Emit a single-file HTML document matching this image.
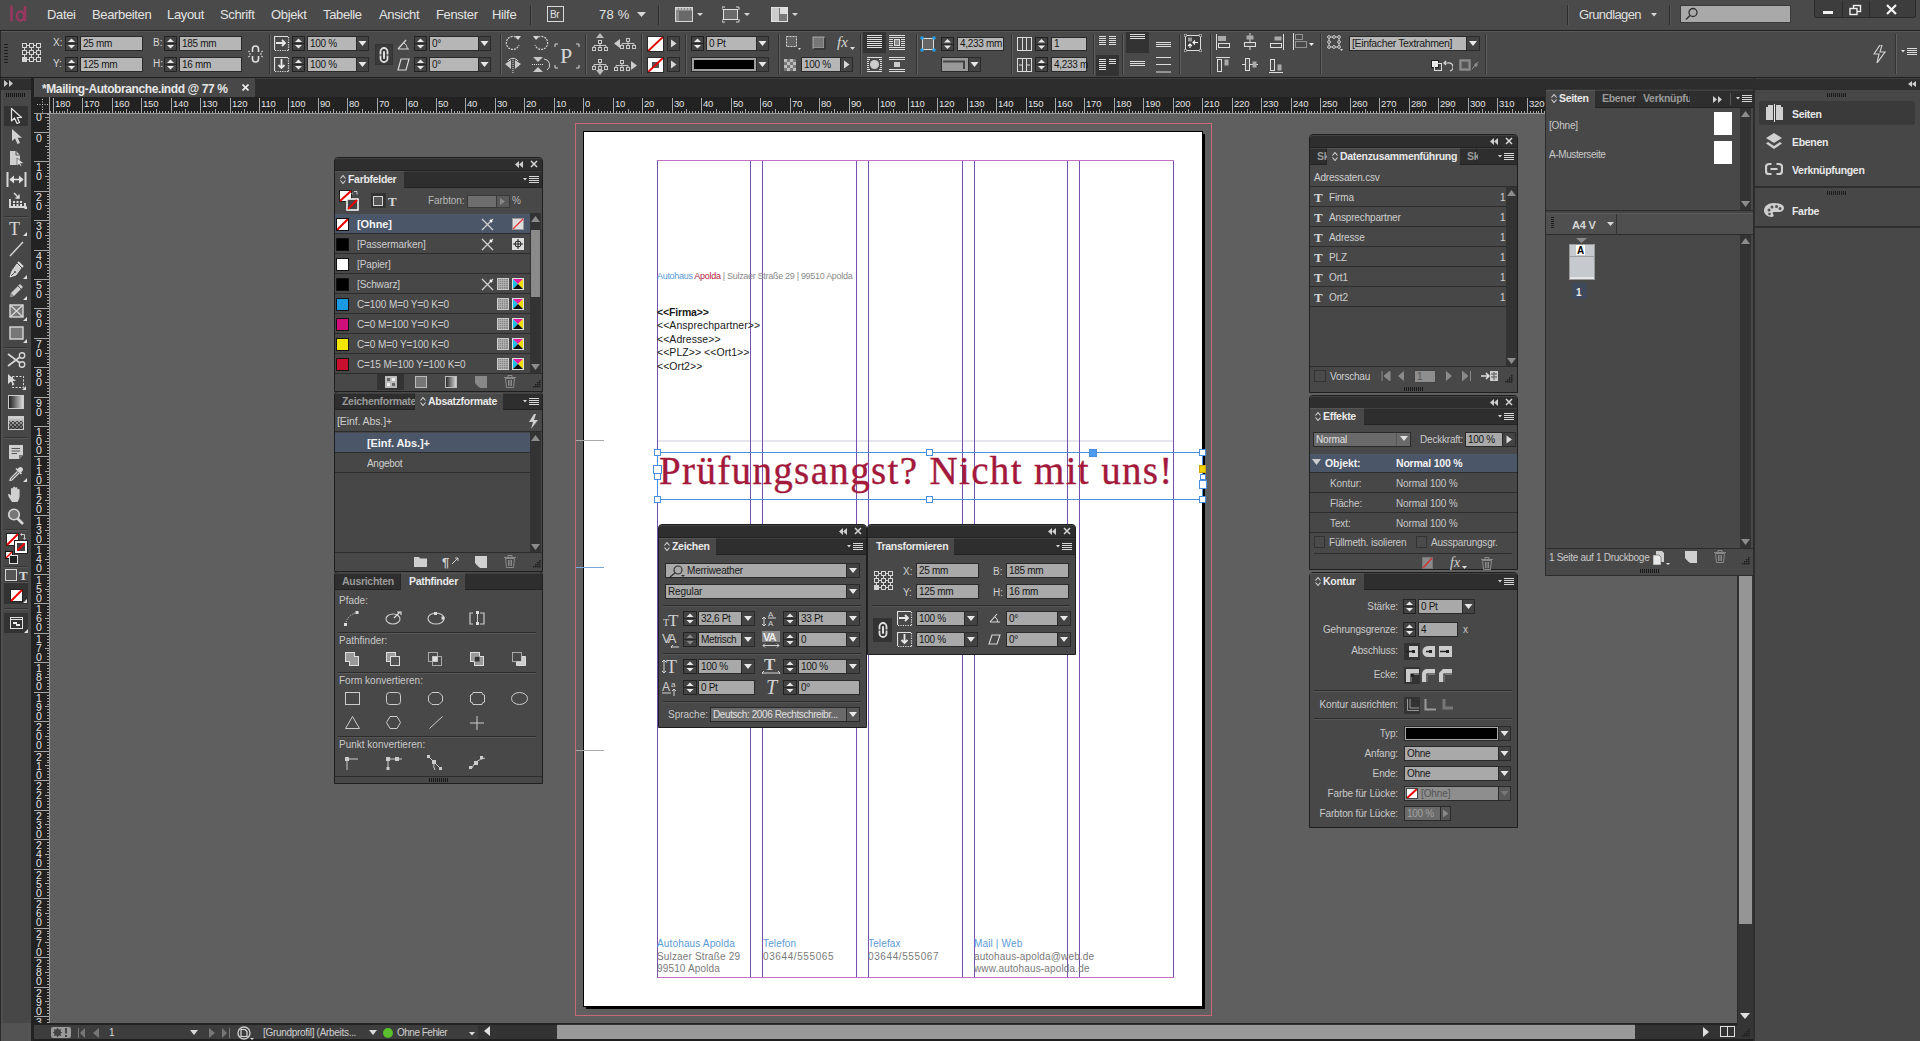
<!DOCTYPE html><html><head><meta charset="utf-8"><style>
html,body{margin:0;padding:0;width:1920px;height:1041px;overflow:hidden;background:#535353;}
body{position:relative;font-family:"Liberation Sans",sans-serif;}
.a{position:absolute;box-sizing:border-box;}
.t{white-space:nowrap;}
</style></head><body>
<div class="a" style="left:0px;top:0px;width:1920px;height:30px;background:#4a4a4a;"></div>
<div class="a" style="left:0px;top:30px;width:1920px;height:1px;background:#1f1f1f;"></div>
<svg class="a" style="left:9px;top:4px;" width="20" height="19" viewBox="0 0 20 19"><path d="M2.5 1.5V17" stroke="#98385f" stroke-width="2.6"/><path d="M16 2V17" stroke="#98385f" stroke-width="2.6"/><ellipse cx="11.5" cy="12" rx="3.6" ry="4.6" fill="none" stroke="#98385f" stroke-width="2.4"/></svg>
<div class="a t" style="left:47px;top:8px;font-size:13px;line-height:13px;color:#e2e2e2;letter-spacing:-0.35px;">Datei</div>
<div class="a t" style="left:92px;top:8px;font-size:13px;line-height:13px;color:#e2e2e2;letter-spacing:-0.35px;">Bearbeiten</div>
<div class="a t" style="left:167px;top:8px;font-size:13px;line-height:13px;color:#e2e2e2;letter-spacing:-0.35px;">Layout</div>
<div class="a t" style="left:220px;top:8px;font-size:13px;line-height:13px;color:#e2e2e2;letter-spacing:-0.35px;">Schrift</div>
<div class="a t" style="left:271px;top:8px;font-size:13px;line-height:13px;color:#e2e2e2;letter-spacing:-0.35px;">Objekt</div>
<div class="a t" style="left:323px;top:8px;font-size:13px;line-height:13px;color:#e2e2e2;letter-spacing:-0.35px;">Tabelle</div>
<div class="a t" style="left:379px;top:8px;font-size:13px;line-height:13px;color:#e2e2e2;letter-spacing:-0.35px;">Ansicht</div>
<div class="a t" style="left:436px;top:8px;font-size:13px;line-height:13px;color:#e2e2e2;letter-spacing:-0.35px;">Fenster</div>
<div class="a t" style="left:492px;top:8px;font-size:13px;line-height:13px;color:#e2e2e2;letter-spacing:-0.35px;">Hilfe</div>
<div class="a" style="left:530px;top:5px;width:1px;height:20px;background:#2c2c2c;"></div>
<div class="a" style="left:531px;top:5px;width:1px;height:20px;background:#575757;"></div>
<div class="a" style="left:547px;top:6px;width:17px;height:16px;border:1px solid #d8d8d8;"></div>
<div class="a t" style="left:550px;top:10px;font-size:10px;line-height:10px;color:#e0e0e0;letter-spacing:-0.3px;">Br</div>
<div class="a t" style="left:599px;top:8px;font-size:13px;line-height:13px;color:#e2e2e2;letter-spacing:0.2px;">78 %</div>
<svg class="a" style="left:637px;top:12px;" width="9" height="6" viewBox="0 0 9 6"><path d="M0 0H9L4.5 5Z" fill="#d8d8d8"/></svg>
<div class="a" style="left:658px;top:5px;width:1px;height:20px;background:#2c2c2c;"></div>
<div class="a" style="left:659px;top:5px;width:1px;height:20px;background:#575757;"></div>
<svg class="a" style="left:675px;top:6px;" width="30" height="17" viewBox="0 0 30 17"><rect x="0.5" y="1.5" width="17" height="14" fill="#8a8a8a" stroke="#d8d8d8"/><rect x="4" y="5" width="13" height="10" fill="#6a6a6a"/><path d="M1 3h16" stroke="#e8e8e8" stroke-dasharray="2 1"/><path d="M22 7H28L25 10Z" fill="#d8d8d8"/></svg>
<svg class="a" style="left:722px;top:6px;" width="30" height="17" viewBox="0 0 30 17"><rect x="1.5" y="3.5" width="14" height="10" fill="#6a6a6a" stroke="#e0e0e0"/><path d="M0 1h3M0 1v3M17 1h-3M17 1v3M0 16h3M0 16v-3M17 16h-3M17 16v-3" stroke="#d8d8d8"/><path d="M22 7H28L25 10Z" fill="#d8d8d8"/></svg>
<svg class="a" style="left:770px;top:6px;" width="30" height="17" viewBox="0 0 30 17"><rect x="1.5" y="1.5" width="16" height="14" fill="#777" stroke="#e0e0e0"/><rect x="2" y="2" width="7" height="13" fill="#ccc"/><rect x="10" y="2" width="7" height="6" fill="#ddd"/><path d="M22 7H28L25 10Z" fill="#d8d8d8"/></svg>
<div class="a" style="left:1567px;top:5px;width:1px;height:20px;background:#2c2c2c;"></div>
<div class="a" style="left:1568px;top:5px;width:1px;height:20px;background:#575757;"></div>
<div class="a t" style="left:1579px;top:8px;font-size:13px;line-height:13px;color:#dedede;letter-spacing:-0.6px;">Grundlagen</div>
<svg class="a" style="left:1651px;top:13px;" width="6" height="4" viewBox="0 0 6 4"><path d="M0 0H6L3 3.5Z" fill="#d8d8d8"/></svg>
<div class="a" style="left:1669px;top:5px;width:1px;height:20px;background:#2c2c2c;"></div>
<div class="a" style="left:1670px;top:5px;width:1px;height:20px;background:#575757;"></div>
<div class="a" style="left:1680px;top:5px;width:111px;height:18px;background:#a9a9a9;border:1px solid #3a3a3a;"></div>
<svg class="a" style="left:1685px;top:7px;" width="14" height="14" viewBox="0 0 14 14"><circle cx="8" cy="5.5" r="4" fill="none" stroke="#303030" stroke-width="1.3"/><path d="M5 8.5L1 12.5" stroke="#303030" stroke-width="1.5"/></svg>
<div class="a" style="left:1814px;top:0px;width:102px;height:18px;background:#3d3d3d;border:1px solid #2a2a2a;border-top:none;border-radius:0 0 3px 3px;"></div>
<div class="a" style="left:1842px;top:1px;width:1px;height:17px;background:#2a2a2a;"></div>
<div class="a" style="left:1869px;top:1px;width:1px;height:17px;background:#2a2a2a;"></div>
<div class="a" style="left:1823px;top:11px;width:10px;height:3px;background:#f0f0f0;"></div>
<svg class="a" style="left:1849px;top:4px;" width="13" height="12" viewBox="0 0 13 12"><rect x="4.5" y="1.5" width="7" height="6" fill="none" stroke="#f0f0f0" stroke-width="1.4"/><rect x="1" y="4.5" width="7" height="6" fill="#3d3d3d" stroke="#f0f0f0" stroke-width="1.4"/></svg>
<svg class="a" style="left:1886px;top:4px;" width="11" height="11" viewBox="0 0 11 11"><path d="M1 1L10 10M10 1L1 10" stroke="#f4f4f4" stroke-width="2.2"/></svg>
<div class="a" style="left:0px;top:31px;width:1920px;height:46px;background:#494949;border-top:1px solid #5a5a5a;"></div>
<div class="a" style="left:0px;top:77px;width:1920px;height:1px;background:#1f1f1f;"></div>
<div class="a" style="left:0px;top:31px;width:1px;height:46px;background:#2c2c2c;"></div>
<div class="a" style="left:4px;top:44px;width:4px;height:1px;background:#1e1e1e;"></div>
<div class="a" style="left:4px;top:47px;width:4px;height:1px;background:#1e1e1e;"></div>
<div class="a" style="left:4px;top:50px;width:4px;height:1px;background:#1e1e1e;"></div>
<div class="a" style="left:4px;top:53px;width:4px;height:1px;background:#1e1e1e;"></div>
<div class="a" style="left:4px;top:56px;width:4px;height:1px;background:#1e1e1e;"></div>
<div class="a" style="left:4px;top:59px;width:4px;height:1px;background:#1e1e1e;"></div>
<div class="a" style="left:4px;top:62px;width:4px;height:1px;background:#1e1e1e;"></div>
<svg class="a" style="left:21px;top:42px;" width="20" height="22" viewBox="0 0 20 22"><g fill="none" stroke="#d6d6d6" stroke-width="1"><rect x="1.5" y="1.5" width="4" height="4"/><rect x="8.5" y="1.5" width="4" height="4"/><rect x="15.5" y="1.5" width="4" height="4"/><rect x="1.5" y="8.5" width="4" height="4"/><rect x="8.5" y="8.5" width="4" height="4"/><rect x="15.5" y="8.5" width="4" height="4"/><rect x="8.5" y="15.5" width="4" height="4"/><rect x="15.5" y="15.5" width="4" height="4"/><path d="M5.5 3.5h3M12.5 3.5h3M5.5 10.5h3M12.5 10.5h3M5.5 17.5h3M12.5 17.5h3M3.5 5.5v3M10.5 5.5v3M17.5 5.5v3M3.5 12.5v3M10.5 12.5v3M17.5 12.5v3"/></g><rect x="1" y="15" width="5" height="5" fill="#d6d6d6"/></svg>
<div class="a t" style="left:53px;top:38px;font-size:10px;line-height:10px;color:#d8d8d8;">X:</div>
<div class="a t" style="left:53px;top:59px;font-size:10px;line-height:10px;color:#d8d8d8;">Y:</div>
<div class="a" style="left:65px;top:36px;width:13px;height:15px;background:#434343;border:1px solid #222;"></div>
<div class="a" style="left:66px;top:43px;width:11px;height:1px;background:#262626;"></div>
<svg class="a" style="left:65px;top:36px;" width="13" height="15" viewBox="0 0 13 15"><path d="M3.0 6.0H10.0L6.5 2.5Z" fill="#e8e8e8"/><path d="M3.0 9.0H10.0L6.5 12.5Z" fill="#e8e8e8"/></svg>
<div class="a" style="left:80px;top:36px;width:63px;height:15px;background:#b6b6b6;border:1px solid #2a2a2a;"></div>
<div class="a t" style="left:83px;top:39px;font-size:10px;line-height:10px;color:#161616;letter-spacing:-0.3px;">25 mm</div>
<div class="a" style="left:65px;top:57px;width:13px;height:15px;background:#434343;border:1px solid #222;"></div>
<div class="a" style="left:66px;top:64px;width:11px;height:1px;background:#262626;"></div>
<svg class="a" style="left:65px;top:57px;" width="13" height="15" viewBox="0 0 13 15"><path d="M3.0 6.0H10.0L6.5 2.5Z" fill="#e8e8e8"/><path d="M3.0 9.0H10.0L6.5 12.5Z" fill="#e8e8e8"/></svg>
<div class="a" style="left:80px;top:57px;width:63px;height:15px;background:#b6b6b6;border:1px solid #2a2a2a;"></div>
<div class="a t" style="left:83px;top:60px;font-size:10px;line-height:10px;color:#161616;letter-spacing:-0.3px;">125 mm</div>
<div class="a t" style="left:153px;top:38px;font-size:10px;line-height:10px;color:#d8d8d8;">B:</div>
<div class="a t" style="left:153px;top:59px;font-size:10px;line-height:10px;color:#d8d8d8;">H:</div>
<div class="a" style="left:164px;top:36px;width:13px;height:15px;background:#434343;border:1px solid #222;"></div>
<div class="a" style="left:165px;top:43px;width:11px;height:1px;background:#262626;"></div>
<svg class="a" style="left:164px;top:36px;" width="13" height="15" viewBox="0 0 13 15"><path d="M3.0 6.0H10.0L6.5 2.5Z" fill="#e8e8e8"/><path d="M3.0 9.0H10.0L6.5 12.5Z" fill="#e8e8e8"/></svg>
<div class="a" style="left:179px;top:36px;width:63px;height:15px;background:#b6b6b6;border:1px solid #2a2a2a;"></div>
<div class="a t" style="left:182px;top:39px;font-size:10px;line-height:10px;color:#161616;letter-spacing:-0.3px;">185 mm</div>
<div class="a" style="left:164px;top:57px;width:13px;height:15px;background:#434343;border:1px solid #222;"></div>
<div class="a" style="left:165px;top:64px;width:11px;height:1px;background:#262626;"></div>
<svg class="a" style="left:164px;top:57px;" width="13" height="15" viewBox="0 0 13 15"><path d="M3.0 6.0H10.0L6.5 2.5Z" fill="#e8e8e8"/><path d="M3.0 9.0H10.0L6.5 12.5Z" fill="#e8e8e8"/></svg>
<div class="a" style="left:179px;top:57px;width:63px;height:15px;background:#b6b6b6;border:1px solid #2a2a2a;"></div>
<div class="a t" style="left:182px;top:60px;font-size:10px;line-height:10px;color:#161616;letter-spacing:-0.3px;">16 mm</div>
<svg class="a" style="left:247px;top:44px;" width="17" height="20" viewBox="0 0 17 20"><g fill="none" stroke="#e0e0e0" stroke-width="1.6"><path d="M5.5 8V5a3 3 0 0 1 6 0v3M5.5 12v3a3 3 0 0 0 6 0v-3"/></g><path d="M1 7l2 1M1 13l2-1M16 7l-2 1M16 13l-2-1M2 10h2M13 10h2" stroke="#d0d0d0"/></svg>
<div class="a" style="left:269px;top:34px;width:1px;height:40px;background:#333333;"></div>
<div class="a" style="left:270px;top:34px;width:1px;height:40px;background:#606060;"></div>
<svg class="a" style="left:274px;top:36px;" width="16" height="16" viewBox="0 0 16 16"><path d="M.5 14V.5H14" fill="none" stroke="#e0e0e0" stroke-width="1.2"/><path d="M14.5 1V15M1 14.5H15" stroke="#e0e0e0" stroke-width="1.2" stroke-dasharray="1.2 1.2"/><path d="M2 7h9M8 4l3 3-3 3" fill="none" stroke="#e8e8e8" stroke-width="1.8"/></svg>
<svg class="a" style="left:274px;top:57px;" width="16" height="16" viewBox="0 0 16 16"><path d="M.5 14V.5H14" fill="none" stroke="#e0e0e0" stroke-width="1.2"/><path d="M14.5 1V15M1 14.5H15" stroke="#e0e0e0" stroke-width="1.2" stroke-dasharray="1.2 1.2"/><path d="M7.5 2v9M4.5 8l3 3 3-3" fill="none" stroke="#e8e8e8" stroke-width="1.8"/></svg>
<div class="a" style="left:292px;top:36px;width:13px;height:15px;background:#434343;border:1px solid #222;"></div>
<div class="a" style="left:293px;top:43px;width:11px;height:1px;background:#262626;"></div>
<svg class="a" style="left:292px;top:36px;" width="13" height="15" viewBox="0 0 13 15"><path d="M3.0 6.0H10.0L6.5 2.5Z" fill="#e8e8e8"/><path d="M3.0 9.0H10.0L6.5 12.5Z" fill="#e8e8e8"/></svg>
<div class="a" style="left:307px;top:36px;width:50px;height:15px;background:#b6b6b6;border:1px solid #2a2a2a;"></div>
<div class="a t" style="left:310px;top:39px;font-size:10px;line-height:10px;color:#161616;letter-spacing:-0.3px;">100 %</div>
<div class="a" style="left:356px;top:36px;width:13px;height:15px;background:#434343;border:1px solid #2a2a2a;"></div>
<svg class="a" style="left:356px;top:36px;" width="13" height="15" viewBox="0 0 13 15"><path d="M2.5 5.0H10.5L6.5 10.0Z" fill="#e8e8e8"/></svg>
<div class="a" style="left:292px;top:57px;width:13px;height:15px;background:#434343;border:1px solid #222;"></div>
<div class="a" style="left:293px;top:64px;width:11px;height:1px;background:#262626;"></div>
<svg class="a" style="left:292px;top:57px;" width="13" height="15" viewBox="0 0 13 15"><path d="M3.0 6.0H10.0L6.5 2.5Z" fill="#e8e8e8"/><path d="M3.0 9.0H10.0L6.5 12.5Z" fill="#e8e8e8"/></svg>
<div class="a" style="left:307px;top:57px;width:50px;height:15px;background:#b6b6b6;border:1px solid #2a2a2a;"></div>
<div class="a t" style="left:310px;top:60px;font-size:10px;line-height:10px;color:#161616;letter-spacing:-0.3px;">100 %</div>
<div class="a" style="left:356px;top:57px;width:13px;height:15px;background:#434343;border:1px solid #2a2a2a;"></div>
<svg class="a" style="left:356px;top:57px;" width="13" height="15" viewBox="0 0 13 15"><path d="M2.5 5.0H10.5L6.5 10.0Z" fill="#e8e8e8"/></svg>
<div class="a" style="left:375px;top:44px;width:18px;height:21px;background:#3a3a3a;border:1px solid #333;"></div>
<svg class="a" style="left:378px;top:46px;" width="12" height="18" viewBox="0 0 12 18"><g fill="none" stroke="#e0e0e0" stroke-width="1.8"><path d="M2.5 8.5V5.5a3.5 3.5 0 0 1 7 0V8.5M2.5 9.5V12.5a3.5 3.5 0 0 0 7 0V9.5"/></g><rect x="5" y="5" width="2" height="8" rx="1" fill="#e0e0e0"/></svg>
<svg class="a" style="left:397px;top:39px;" width="13" height="11" viewBox="0 0 13 11"><path d="M1 10H12M1 10L9 1" fill="none" stroke="#d8d8d8" stroke-width="1.2"/><path d="M7 4a6 6 0 0 1 3 6" fill="none" stroke="#d8d8d8"/></svg>
<svg class="a" style="left:397px;top:58px;" width="13" height="13" viewBox="0 0 13 13"><path d="M4 1H12L9 12H1Z" fill="none" stroke="#d8d8d8" stroke-width="1.2"/></svg>
<div class="a" style="left:414px;top:36px;width:13px;height:15px;background:#434343;border:1px solid #222;"></div>
<div class="a" style="left:415px;top:43px;width:11px;height:1px;background:#262626;"></div>
<svg class="a" style="left:414px;top:36px;" width="13" height="15" viewBox="0 0 13 15"><path d="M3.0 6.0H10.0L6.5 2.5Z" fill="#e8e8e8"/><path d="M3.0 9.0H10.0L6.5 12.5Z" fill="#e8e8e8"/></svg>
<div class="a" style="left:429px;top:36px;width:50px;height:15px;background:#b6b6b6;border:1px solid #2a2a2a;"></div>
<div class="a t" style="left:432px;top:39px;font-size:10px;line-height:10px;color:#161616;letter-spacing:-0.3px;">0°</div>
<div class="a" style="left:478px;top:36px;width:13px;height:15px;background:#434343;border:1px solid #2a2a2a;"></div>
<svg class="a" style="left:478px;top:36px;" width="13" height="15" viewBox="0 0 13 15"><path d="M2.5 5.0H10.5L6.5 10.0Z" fill="#e8e8e8"/></svg>
<div class="a" style="left:414px;top:57px;width:13px;height:15px;background:#434343;border:1px solid #222;"></div>
<div class="a" style="left:415px;top:64px;width:11px;height:1px;background:#262626;"></div>
<svg class="a" style="left:414px;top:57px;" width="13" height="15" viewBox="0 0 13 15"><path d="M3.0 6.0H10.0L6.5 2.5Z" fill="#e8e8e8"/><path d="M3.0 9.0H10.0L6.5 12.5Z" fill="#e8e8e8"/></svg>
<div class="a" style="left:429px;top:57px;width:50px;height:15px;background:#b6b6b6;border:1px solid #2a2a2a;"></div>
<div class="a t" style="left:432px;top:60px;font-size:10px;line-height:10px;color:#161616;letter-spacing:-0.3px;">0°</div>
<div class="a" style="left:478px;top:57px;width:13px;height:15px;background:#434343;border:1px solid #2a2a2a;"></div>
<svg class="a" style="left:478px;top:57px;" width="13" height="15" viewBox="0 0 13 15"><path d="M2.5 5.0H10.5L6.5 10.0Z" fill="#e8e8e8"/></svg>
<div class="a" style="left:500px;top:34px;width:1px;height:40px;background:#333333;"></div>
<div class="a" style="left:501px;top:34px;width:1px;height:40px;background:#606060;"></div>
<svg class="a" style="left:504px;top:34px;" width="18" height="17" viewBox="0 0 18 17"><path d="M14 5A6.5 6.5 0 1 0 15 11" fill="none" stroke="#d0d0d0" stroke-width="1.2" stroke-dasharray="2 1"/><path d="M11 2h6l-3 4z" fill="#d8d8d8"/></svg>
<svg class="a" style="left:532px;top:34px;" width="18" height="17" viewBox="0 0 18 17"><path d="M4 5A6.5 6.5 0 1 1 3 11" fill="none" stroke="#d0d0d0" stroke-width="1.2" stroke-dasharray="2 1"/><path d="M7 2H1l3 4z" fill="#d8d8d8"/></svg>
<svg class="a" style="left:504px;top:56px;" width="18" height="17" viewBox="0 0 18 17"><path d="M1 8l6-4v9zM17 8l-6-4v9z" fill="#c8c8c8"/><path d="M9 2v15" stroke="#e0e0e0" stroke-dasharray="1 1"/><path d="M4 5a6 6 0 0 1 10 0" fill="none" stroke="#d0d0d0"/></svg>
<svg class="a" style="left:532px;top:56px;" width="18" height="17" viewBox="0 0 18 17"><path d="M1 1h10l-5 5zM1 16h10l-5-5z" fill="#c8c8c8"/><path d="M0 8.5h12" stroke="#e0e0e0" stroke-dasharray="1 1"/><path d="M12 3a6 6 0 0 1 3 11" fill="none" stroke="#d0d0d0"/></svg>
<svg class="a" style="left:554px;top:43px;" width="26" height="26" viewBox="0 0 26 26"><path d="M1 4V1h3M22 1h3v3M1 22v3h3M22 25h3v-3" fill="none" stroke="#d8d8d8"/></svg>
<div class="a t" style="left:560px;top:45px;font-size:22px;line-height:22px;color:#d8d8d8;font-family:'Liberation Serif',serif;">P</div>
<div class="a" style="left:585px;top:34px;width:1px;height:40px;background:#333333;"></div>
<div class="a" style="left:586px;top:34px;width:1px;height:40px;background:#606060;"></div>
<svg class="a" style="left:592px;top:40px;" width="16" height="11" viewBox="0 0 16 11"><g fill="none" stroke="#c8c8c8"><rect x="6.5" y="0.5" width="3" height="3"/><rect x="0.5" y="7.5" width="3" height="3"/><rect x="6.5" y="7.5" width="3" height="3"/><rect x="12.5" y="7.5" width="3" height="3"/><path d="M8 3.5v2M2 5.5h12M2 5.5v2M14 5.5v2M8 5.5v2"/></g></svg>
<svg class="a" style="left:596px;top:33px;" width="8" height="5" viewBox="0 0 8 5"><path d="M0 5H8L4 0Z" fill="#bbb"/></svg>
<svg class="a" style="left:592px;top:59px;" width="16" height="11" viewBox="0 0 16 11"><g fill="none" stroke="#c8c8c8"><rect x="6.5" y="0.5" width="3" height="3"/><rect x="0.5" y="7.5" width="3" height="3"/><rect x="6.5" y="7.5" width="3" height="3"/><rect x="12.5" y="7.5" width="3" height="3"/><path d="M8 3.5v2M2 5.5h12M2 5.5v2M14 5.5v2M8 5.5v2"/></g></svg>
<svg class="a" style="left:596px;top:70px;" width="8" height="5" viewBox="0 0 8 5"><path d="M0 0H8L4 5Z" fill="#bbb"/></svg>
<svg class="a" style="left:620px;top:38px;" width="16" height="11" viewBox="0 0 16 11"><g fill="none" stroke="#c8c8c8"><rect x="6.5" y="0.5" width="3" height="3"/><rect x="0.5" y="7.5" width="3" height="3"/><rect x="6.5" y="7.5" width="3" height="3"/><rect x="12.5" y="7.5" width="3" height="3"/><path d="M8 3.5v2M2 5.5h12M2 5.5v2M14 5.5v2M8 5.5v2"/></g></svg>
<svg class="a" style="left:614px;top:39px;" width="6" height="9" viewBox="0 0 6 9"><path d="M6 0V9L0 4.5Z" fill="#ccc"/></svg>
<svg class="a" style="left:614px;top:60px;" width="16" height="11" viewBox="0 0 16 11"><g fill="none" stroke="#c8c8c8"><rect x="6.5" y="0.5" width="3" height="3"/><rect x="0.5" y="7.5" width="3" height="3"/><rect x="6.5" y="7.5" width="3" height="3"/><rect x="12.5" y="7.5" width="3" height="3"/><path d="M8 3.5v2M2 5.5h12M2 5.5v2M14 5.5v2M8 5.5v2"/></g></svg>
<svg class="a" style="left:631px;top:61px;" width="6" height="9" viewBox="0 0 6 9"><path d="M0 0V9L6 4.5Z" fill="#ccc"/></svg>
<div class="a" style="left:641px;top:34px;width:1px;height:40px;background:#333333;"></div>
<div class="a" style="left:642px;top:34px;width:1px;height:40px;background:#606060;"></div>
<div class="a" style="left:647px;top:36px;width:17px;height:16px;background:#fff;border:1px solid #2a2a2a;"></div>
<svg class="a" style="left:648px;top:37px;" width="15" height="14" viewBox="0 0 15 14"><path d="M0 14L15 0" stroke="#e00000" stroke-width="2"/></svg>
<div class="a" style="left:647px;top:57px;width:17px;height:16px;background:#fff;border:1px solid #2a2a2a;"></div>
<div class="a" style="left:652px;top:62px;width:7px;height:6px;background:#555;"></div>
<svg class="a" style="left:648px;top:58px;" width="15" height="14" viewBox="0 0 15 14"><path d="M0 14L15 0" stroke="#e00000" stroke-width="2"/></svg>
<div class="a" style="left:667px;top:36px;width:13px;height:15px;background:#434343;border:1px solid #2a2a2a;"></div>
<svg class="a" style="left:667px;top:36px;" width="13" height="15" viewBox="0 0 13 15"><path d="M4.0 3.5V11.5L9.5 7.5Z" fill="#d8d8d8"/></svg>
<div class="a" style="left:667px;top:57px;width:13px;height:15px;background:#434343;border:1px solid #2a2a2a;"></div>
<svg class="a" style="left:667px;top:57px;" width="13" height="15" viewBox="0 0 13 15"><path d="M4.0 3.5V11.5L9.5 7.5Z" fill="#d8d8d8"/></svg>
<div class="a" style="left:685px;top:34px;width:1px;height:40px;background:#333333;"></div>
<div class="a" style="left:686px;top:34px;width:1px;height:40px;background:#606060;"></div>
<div class="a" style="left:691px;top:36px;width:13px;height:15px;background:#434343;border:1px solid #222;"></div>
<div class="a" style="left:692px;top:43px;width:11px;height:1px;background:#262626;"></div>
<svg class="a" style="left:691px;top:36px;" width="13" height="15" viewBox="0 0 13 15"><path d="M3.0 6.0H10.0L6.5 2.5Z" fill="#e8e8e8"/><path d="M3.0 9.0H10.0L6.5 12.5Z" fill="#e8e8e8"/></svg>
<div class="a" style="left:706px;top:36px;width:51px;height:15px;background:#b6b6b6;border:1px solid #2a2a2a;"></div>
<div class="a t" style="left:709px;top:39px;font-size:10px;line-height:10px;color:#161616;letter-spacing:-0.3px;">0 Pt</div>
<div class="a" style="left:756px;top:36px;width:13px;height:15px;background:#434343;border:1px solid #2a2a2a;"></div>
<svg class="a" style="left:756px;top:36px;" width="13" height="15" viewBox="0 0 13 15"><path d="M2.5 5.0H10.5L6.5 10.0Z" fill="#e8e8e8"/></svg>
<div class="a" style="left:691px;top:57px;width:66px;height:15px;background:#a0a0a0;border:1px solid #2a2a2a;"></div>
<div class="a" style="left:694px;top:60px;width:60px;height:9px;background:#000;"></div>
<div class="a" style="left:756px;top:57px;width:13px;height:15px;background:#434343;border:1px solid #2a2a2a;"></div>
<svg class="a" style="left:756px;top:57px;" width="13" height="15" viewBox="0 0 13 15"><path d="M2.5 5.0H10.5L6.5 10.0Z" fill="#e8e8e8"/></svg>
<div class="a" style="left:778px;top:34px;width:1px;height:40px;background:#333333;"></div>
<div class="a" style="left:779px;top:34px;width:1px;height:40px;background:#606060;"></div>
<svg class="a" style="left:785px;top:35px;" width="17" height="16" viewBox="0 0 17 16"><rect x="1.5" y="1.5" width="10" height="10" fill="#606060" stroke="#d8d8d8" stroke-dasharray="2 1"/><path d="M13 13h3l-1.5 2z" fill="#ddd"/></svg>
<svg class="a" style="left:811px;top:35px;" width="15" height="16" viewBox="0 0 15 16"><rect x="2" y="2" width="11" height="11" fill="#777" stroke="#aaa"/><path d="M3 14h11V3" stroke="#3a3a3a" stroke-width="2" fill="none"/></svg>
<div class="a t" style="left:837px;top:35px;font-size:15px;line-height:15px;color:#d8d8d8;font-style:italic;font-family:'Liberation Serif',serif;">fx</div>
<svg class="a" style="left:850px;top:47px;" width="5" height="3" viewBox="0 0 5 3"><path d="M0 0h5l-2.5 3z" fill="#ddd"/></svg>
<svg class="a" style="left:784px;top:59px;" width="12" height="12" viewBox="0 0 12 12"><rect x="0" y="0" width="12" height="12" fill="#bdbdbd"/><rect x="3" y="0" width="3" height="3" fill="#777"/><rect x="9" y="0" width="3" height="3" fill="#777"/><rect x="0" y="3" width="3" height="3" fill="#777"/><rect x="6" y="3" width="3" height="3" fill="#777"/><rect x="3" y="6" width="3" height="3" fill="#777"/><rect x="9" y="6" width="3" height="3" fill="#777"/><rect x="0" y="9" width="3" height="3" fill="#777"/><rect x="6" y="9" width="3" height="3" fill="#777"/></svg>
<div class="a" style="left:801px;top:57px;width:40px;height:15px;background:#b6b6b6;border:1px solid #2a2a2a;"></div>
<div class="a t" style="left:804px;top:60px;font-size:10px;line-height:10px;color:#161616;letter-spacing:-0.3px;">100 %</div>
<div class="a" style="left:840px;top:57px;width:13px;height:15px;background:#434343;border:1px solid #2a2a2a;"></div>
<svg class="a" style="left:840px;top:57px;" width="13" height="15" viewBox="0 0 13 15"><path d="M4.0 3.5V11.5L9.5 7.5Z" fill="#d8d8d8"/></svg>
<div class="a" style="left:860px;top:34px;width:1px;height:40px;background:#333333;"></div>
<div class="a" style="left:861px;top:34px;width:1px;height:40px;background:#606060;"></div>
<div class="a" style="left:863px;top:32px;width:23px;height:21px;background:#333333;"></div>
<svg class="a" style="left:867px;top:35px;" width="15" height="15" viewBox="0 0 15 15"><path d="M0 0.5H15" stroke="#e0e0e0"/><path d="M0 2.5H15" stroke="#e0e0e0"/><path d="M0 4.5H15" stroke="#e0e0e0"/><path d="M0 6.5H15" stroke="#e0e0e0"/><path d="M0 8.5H15" stroke="#e0e0e0"/><path d="M0 10.5H15" stroke="#e0e0e0"/><path d="M0 12.5H15" stroke="#e0e0e0"/></svg>
<svg class="a" style="left:889px;top:35px;" width="16" height="15" viewBox="0 0 16 15"><path d="M0 .5h16M0 2.5h16M0 12.5h16M0 14.5h16M0 4.5h4M12 4.5h4M0 6.5h4M12 6.5h4M0 8.5h4M12 8.5h4M0 10.5h4M12 10.5h4" stroke="#ddd"/><rect x="5.5" y="4.5" width="5" height="6" fill="#888" stroke="#ddd"/></svg>
<svg class="a" style="left:867px;top:57px;" width="15" height="15" viewBox="0 0 15 15"><path d="M0 .5h15M0 14.5h15M0 2.5h3M12 2.5h3M0 4.5h2M13 4.5h2M0 6.5h2M13 6.5h2M0 8.5h2M13 8.5h2M0 10.5h2M13 10.5h2M0 12.5h3M12 12.5h3" stroke="#ddd"/><circle cx="7.5" cy="7.5" r="4.5" fill="#ccc"/></svg>
<svg class="a" style="left:889px;top:57px;" width="16" height="15" viewBox="0 0 16 15"><path d="M0 .5h16M0 2.5h16M0 12.5h16M0 14.5h16" stroke="#ddd"/><rect x="5" y="5" width="6" height="5" fill="#ccc"/></svg>
<div class="a" style="left:916px;top:34px;width:1px;height:40px;background:#333333;"></div>
<div class="a" style="left:917px;top:34px;width:1px;height:40px;background:#606060;"></div>
<svg class="a" style="left:920px;top:36px;" width="16" height="16" viewBox="0 0 16 16"><rect x="2.5" y="2.5" width="11" height="11" fill="#666" stroke="#ddd"/><rect x="0.5" y="0.5" width="3" height="3" fill="#2a9fe8"/><rect x="12.5" y="0.5" width="3" height="3" fill="#2a9fe8"/><rect x="0.5" y="12.5" width="3" height="3" fill="#2a9fe8"/><rect x="12.5" y="12.5" width="3" height="3" fill="#2a9fe8"/></svg>
<div class="a" style="left:941px;top:37px;width:13px;height:14px;background:#434343;border:1px solid #222;"></div>
<div class="a" style="left:942px;top:44px;width:11px;height:1px;background:#262626;"></div>
<svg class="a" style="left:941px;top:37px;" width="13" height="14" viewBox="0 0 13 14"><path d="M3.0 5.5H10.0L6.5 2.0Z" fill="#e8e8e8"/><path d="M3.0 8.5H10.0L6.5 12.0Z" fill="#e8e8e8"/></svg>
<div class="a" style="left:957px;top:37px;width:47px;height:14px;background:#b6b6b6;border:1px solid #2a2a2a;"></div>
<div class="a t" style="left:960px;top:39px;font-size:10px;line-height:10px;color:#161616;letter-spacing:-0.3px;">4,233 mm</div>
<div class="a" style="left:941px;top:57px;width:28px;height:15px;background:#999;border:1px solid #2a2a2a;"></div>
<svg class="a" style="left:943px;top:60px;" width="24" height="9" viewBox="0 0 24 9"><path d="M0 1.5H21V9" fill="none" stroke="#444" stroke-width="2"/></svg>
<div class="a" style="left:968px;top:57px;width:13px;height:15px;background:#434343;border:1px solid #2a2a2a;"></div>
<svg class="a" style="left:968px;top:57px;" width="13" height="15" viewBox="0 0 13 15"><path d="M2.5 5.0H10.5L6.5 10.0Z" fill="#e8e8e8"/></svg>
<div class="a" style="left:1011px;top:34px;width:1px;height:40px;background:#333333;"></div>
<div class="a" style="left:1012px;top:34px;width:1px;height:40px;background:#606060;"></div>
<svg class="a" style="left:1017px;top:37px;" width="15" height="14" viewBox="0 0 15 14"><rect x="0.5" y="0.5" width="14" height="13" fill="none" stroke="#ddd"/><path d="M5.5 0v14M9.5 0v14" stroke="#ddd"/></svg>
<svg class="a" style="left:1017px;top:58px;" width="15" height="14" viewBox="0 0 15 14"><rect x="0.5" y="0.5" width="14" height="13" fill="none" stroke="#ddd"/><path d="M5.5 0v14M9.5 0v14M2 7h3M10 7h3" stroke="#ddd"/></svg>
<div class="a" style="left:1035px;top:37px;width:13px;height:14px;background:#434343;border:1px solid #222;"></div>
<div class="a" style="left:1036px;top:44px;width:11px;height:1px;background:#262626;"></div>
<svg class="a" style="left:1035px;top:37px;" width="13" height="14" viewBox="0 0 13 14"><path d="M3.0 5.5H10.0L6.5 2.0Z" fill="#e8e8e8"/><path d="M3.0 8.5H10.0L6.5 12.0Z" fill="#e8e8e8"/></svg>
<div class="a" style="left:1051px;top:37px;width:36px;height:14px;background:#b6b6b6;border:1px solid #2a2a2a;"></div>
<div class="a t" style="left:1054px;top:39px;font-size:10px;line-height:10px;color:#161616;letter-spacing:-0.3px;">1</div>
<div class="a" style="left:1035px;top:57px;width:13px;height:15px;background:#434343;border:1px solid #222;"></div>
<div class="a" style="left:1036px;top:64px;width:11px;height:1px;background:#262626;"></div>
<svg class="a" style="left:1035px;top:57px;" width="13" height="15" viewBox="0 0 13 15"><path d="M3.0 6.0H10.0L6.5 2.5Z" fill="#e8e8e8"/><path d="M3.0 9.0H10.0L6.5 12.5Z" fill="#e8e8e8"/></svg>
<div class="a" style="left:1051px;top:57px;width:36px;height:15px;background:#b6b6b6;border:1px solid #2a2a2a;"></div>
<div class="a t" style="left:1054px;top:60px;font-size:10px;line-height:10px;color:#161616;letter-spacing:-0.3px;">4,233 m</div>
<div class="a" style="left:1093px;top:34px;width:1px;height:40px;background:#333333;"></div>
<div class="a" style="left:1094px;top:34px;width:1px;height:40px;background:#606060;"></div>
<svg class="a" style="left:1099px;top:36px;" width="17" height="10" viewBox="0 0 17 10"><path d="M0 .5h7M0 2.5h7M0 4.5h7M0 6.5h7M0 8.5h7M10 .5h7M10 2.5h7M10 4.5h7M10 6.5h7M10 8.5h7" stroke="#ddd"/></svg>
<div class="a" style="left:1096px;top:55px;width:23px;height:21px;background:#333333;"></div>
<svg class="a" style="left:1099px;top:59px;" width="17" height="13" viewBox="0 0 17 13"><path d="M0 .5h7M0 2.5h7M0 4.5h7M0 6.5h7M0 8.5h7M0 10.5h7M10 .5h7M10 2.5h7M10 4.5h7" stroke="#ddd"/></svg>
<div class="a" style="left:1122px;top:34px;width:1px;height:40px;background:#333333;"></div>
<div class="a" style="left:1123px;top:34px;width:1px;height:40px;background:#606060;"></div>
<div class="a" style="left:1126px;top:32px;width:23px;height:21px;background:#333333;"></div>
<svg class="a" style="left:1130px;top:34px;" width="15" height="6" viewBox="0 0 15 6"><path d="M0 .5h15M0 2.5h15M0 4.5h15" stroke="#ddd"/></svg>
<svg class="a" style="left:1156px;top:42px;" width="15" height="6" viewBox="0 0 15 6"><path d="M0 .5h15M0 2.5h15M0 4.5h15" stroke="#ddd"/></svg>
<svg class="a" style="left:1130px;top:61px;" width="15" height="6" viewBox="0 0 15 6"><path d="M0 .5h15M0 2.5h15M0 4.5h15" stroke="#ddd"/></svg>
<svg class="a" style="left:1156px;top:57px;" width="15" height="16" viewBox="0 0 15 16"><path d="M0 .5h15M0 7.5h15M0 15h15" stroke="#ddd"/></svg>
<div class="a" style="left:1179px;top:34px;width:1px;height:40px;background:#333333;"></div>
<div class="a" style="left:1180px;top:34px;width:1px;height:40px;background:#606060;"></div>
<svg class="a" style="left:1184px;top:34px;" width="18" height="18" viewBox="0 0 18 18"><rect x="1.5" y="1.5" width="15" height="15" fill="#3c3c3c" stroke="#ddd"/><circle cx="1.5" cy="1.5" r="1.3" fill="#3c3c3c" stroke="#ddd" stroke-width=".8"/><circle cx="16.5" cy="1.5" r="1.3" fill="#3c3c3c" stroke="#ddd" stroke-width=".8"/><circle cx="1.5" cy="16.5" r="1.3" fill="#3c3c3c" stroke="#ddd" stroke-width=".8"/><circle cx="16.5" cy="16.5" r="1.3" fill="#3c3c3c" stroke="#ddd" stroke-width=".8"/><rect x="4" y="3.5" width="4" height="4" fill="#999"/><path d="M9 8.5h5M11 6.5l-2 2 2 2M6 14V10M4 12l2-2 2 2" fill="none" stroke="#fff" stroke-width="1.1"/></svg>
<div class="a" style="left:1210px;top:34px;width:1px;height:40px;background:#333333;"></div>
<div class="a" style="left:1211px;top:34px;width:1px;height:40px;background:#606060;"></div>
<svg class="a" style="left:1216px;top:34px;" width="15" height="16" viewBox="0 0 15 16"><path d="M.5 0v16" stroke="#ddd"/><rect x="2.5" y="2.5" width="7" height="4" fill="#aaa" stroke="#aaa"/><rect x="2.5" y="9.5" width="11" height="4" fill="none" stroke="#ddd"/></svg>
<svg class="a" style="left:1243px;top:33px;" width="14" height="17" viewBox="0 0 14 17"><path d="M7 0v17" stroke="#ddd"/><rect x="3.5" y="2.5" width="7" height="4" fill="#aaa"/><rect x="1.5" y="9.5" width="11" height="4" fill="#555" stroke="#ddd"/></svg>
<svg class="a" style="left:1269px;top:34px;" width="15" height="16" viewBox="0 0 15 16"><path d="M14.5 0v16" stroke="#ddd"/><rect x="5.5" y="2.5" width="7" height="4" fill="#aaa"/><rect x="1.5" y="9.5" width="11" height="4" fill="none" stroke="#ddd"/></svg>
<svg class="a" style="left:1293px;top:33px;" width="22" height="17" viewBox="0 0 22 17"><path d="M.5 0v17" stroke="#ddd"/><rect x="2.5" y="1.5" width="7" height="5" fill="none" stroke="#ddd" stroke-dasharray="1 1"/><rect x="2.5" y="8.5" width="11" height="6" fill="none" stroke="#ddd" stroke-dasharray="1 1"/><path d="M16 10h5l-2.5 3z" fill="#eee"/></svg>
<svg class="a" style="left:1216px;top:57px;" width="14" height="16" viewBox="0 0 14 16"><path d="M0 .5h14" stroke="#ddd"/><rect x="1.5" y="2.5" width="4" height="12" fill="none" stroke="#ddd"/><rect x="8.5" y="2.5" width="4" height="6" fill="#aaa"/></svg>
<svg class="a" style="left:1242px;top:57px;" width="16" height="15" viewBox="0 0 16 15"><path d="M0 7.5h16" stroke="#ddd"/><rect x="3.5" y="1.5" width="4" height="12" fill="#555" stroke="#ddd"/><rect x="10.5" y="4.5" width="4" height="6" fill="#aaa"/></svg>
<svg class="a" style="left:1269px;top:58px;" width="14" height="15" viewBox="0 0 14 15"><path d="M0 14.5h14" stroke="#ddd"/><rect x="1.5" y="1.5" width="4" height="11" fill="none" stroke="#ddd"/><rect x="8.5" y="6.5" width="4" height="6" fill="#aaa"/></svg>
<div class="a" style="left:1320px;top:34px;width:1px;height:40px;background:#333333;"></div>
<div class="a" style="left:1321px;top:34px;width:1px;height:40px;background:#606060;"></div>
<svg class="a" style="left:1327px;top:35px;" width="17" height="17" viewBox="0 0 17 17"><circle cx="2" cy="2" r="1.4" fill="none" stroke="#ddd" stroke-width=".9"/><circle cx="2" cy="7" r="1.4" fill="none" stroke="#ddd" stroke-width=".9"/><circle cx="2" cy="12" r="1.4" fill="none" stroke="#ddd" stroke-width=".9"/><circle cx="7" cy="2" r="1.4" fill="none" stroke="#ddd" stroke-width=".9"/><circle cx="7" cy="12" r="1.4" fill="none" stroke="#ddd" stroke-width=".9"/><circle cx="12" cy="2" r="1.4" fill="none" stroke="#ddd" stroke-width=".9"/><circle cx="12" cy="7" r="1.4" fill="none" stroke="#ddd" stroke-width=".9"/><circle cx="12" cy="12" r="1.4" fill="none" stroke="#ddd" stroke-width=".9"/><path d="M3.5 2h2M8.5 2h2M3.5 12h2M8.5 12h2M2 3.5v2M2 8.5v2M12 3.5v2M12 8.5v2" stroke="#ddd" stroke-width=".9"/><path d="M13 14h3l-1.5 2z" fill="#ddd"/></svg>
<div class="a" style="left:1349px;top:36px;width:118px;height:15px;background:#b6b6b6;border:1px solid #2a2a2a;"></div>
<div class="a t" style="left:1352px;top:38px;font-size:10.5px;line-height:10.5px;color:#1a1a1a;letter-spacing:-0.35px;">[Einfacher Textrahmen]</div>
<div class="a" style="left:1466px;top:36px;width:14px;height:15px;background:#434343;border:1px solid #2a2a2a;"></div>
<svg class="a" style="left:1466px;top:36px;" width="14" height="15" viewBox="0 0 14 15"><path d="M3.0 5.0H11.0L7.0 10.0Z" fill="#e8e8e8"/></svg>
<svg class="a" style="left:1430px;top:59px;" width="23" height="14" viewBox="0 0 23 14"><rect x="1.5" y="1.5" width="7" height="7" fill="#eee" stroke="#222"/><rect x="4.5" y="4.5" width="7" height="7" fill="none" stroke="#ddd"/><path d="M20 12a4 4 0 0 0-2-8h-4M16 2l-2 2 2 2" fill="none" stroke="#ddd" stroke-width="1.2"/></svg>
<svg class="a" style="left:1459px;top:59px;" width="20" height="13" viewBox="0 0 20 13"><rect x="1" y="1" width="10" height="10" fill="#777" stroke="#999" stroke-width="1.2"/><rect x="3" y="3" width="6" height="6" fill="#555"/><path d="M13 10L19 3M15 6h4M17 4v4" fill="none" stroke="#999"/></svg>
<div class="a" style="left:1485px;top:34px;width:1px;height:40px;background:#333333;"></div>
<div class="a" style="left:1486px;top:34px;width:1px;height:40px;background:#606060;"></div>
<svg class="a" style="left:1873px;top:45px;" width="13" height="18" viewBox="0 0 13 18"><path d="M7 0L1 9h5l-2 9 8-11H7l2-7z" fill="none" stroke="#d0d0d0" stroke-width="1.2"/></svg>
<div class="a" style="left:1895px;top:34px;width:1px;height:40px;background:#333333;"></div>
<div class="a" style="left:1896px;top:34px;width:1px;height:40px;background:#606060;"></div>
<svg class="a" style="left:1901px;top:48px;" width="16" height="9" viewBox="0 0 16 9"><path d="M0 2h4l-2 2.5z" fill="#ddd"/><path d="M6 .5h10M6 2.5h10M6 4.5h10M6 6.5h10" stroke="#ddd"/></svg>
<div class="a" style="left:0px;top:78px;width:1920px;height:19px;background:#2d2d2d;border-top:1px solid #3e3e3e;"></div>
<div class="a" style="left:0px;top:78px;width:1px;height:963px;background:#2a2a2a;"></div>
<div class="a" style="left:1px;top:78px;width:30px;height:12px;background:#2e2e2e;border-top:1px solid #404040;"></div>
<svg class="a" style="left:4px;top:80px;" width="9" height="7" viewBox="0 0 9 7"><path d="M0 0L4 3.5L0 7ZM5 0L9 3.5L5 7Z" fill="#c8c8c8"/></svg>
<div class="a" style="left:1px;top:90px;width:31px;height:933px;background:#474747;border-left:2px solid #4e4e4e;"></div>
<div class="a" style="left:6px;top:93px;width:1px;height:4px;background:#151515;"></div>
<div class="a" style="left:8px;top:93px;width:1px;height:4px;background:#151515;"></div>
<div class="a" style="left:10px;top:93px;width:1px;height:4px;background:#151515;"></div>
<div class="a" style="left:12px;top:93px;width:1px;height:4px;background:#151515;"></div>
<div class="a" style="left:14px;top:93px;width:1px;height:4px;background:#151515;"></div>
<div class="a" style="left:16px;top:93px;width:1px;height:4px;background:#151515;"></div>
<div class="a" style="left:18px;top:93px;width:1px;height:4px;background:#151515;"></div>
<div class="a" style="left:20px;top:93px;width:1px;height:4px;background:#151515;"></div>
<div class="a" style="left:22px;top:93px;width:1px;height:4px;background:#151515;"></div>
<div class="a" style="left:24px;top:93px;width:1px;height:4px;background:#151515;"></div>
<div class="a" style="left:31px;top:78px;width:3px;height:963px;background:#222222;"></div>
<div class="a" style="left:34px;top:78px;width:221px;height:19px;background:#484848;"></div>
<div class="a t" style="left:42px;top:83px;font-size:12px;line-height:12px;color:#e6e6e6;font-weight:bold;letter-spacing:-0.4px;">*Mailing-Autobranche.indd @ 77 %</div>
<svg class="a" style="left:242px;top:84px;" width="7" height="7" viewBox="0 0 7 7"><path d="M.5 .5L6.5 6.5M6.5 .5L.5 6.5" stroke="#f0f0f0" stroke-width="1.6"/></svg>
<div class="a" style="left:34px;top:97px;width:1720px;height:17px;background:#222222;"></div>
<div class="a" style="left:34px;top:113px;width:16px;height:911px;background:#222222;"></div>
<svg class="a" style="left:50px;top:97px;" width="1688" height="17" viewBox="0 0 1688 17"><path d="M0.5 14V16M3.5 1V16M6.5 14V16M9.5 14V16M12.5 14V16M14.5 14V16M17.5 12V16M20.5 14V16M23.5 14V16M26.5 14V16M29.5 14V16M32.5 1V16M35.5 14V16M38.5 14V16M41.5 14V16M44.5 14V16M47.5 12V16M50.5 14V16M53.5 14V16M56.5 14V16M59.5 14V16M62.5 1V16M65.5 14V16M68.5 14V16M70.5 14V16M73.5 14V16M76.5 12V16M79.5 14V16M82.5 14V16M85.5 14V16M88.5 14V16M91.5 1V16M94.5 14V16M97.5 14V16M100.5 14V16M103.5 14V16M106.5 12V16M109.5 14V16M112.5 14V16M115.5 14V16M118.5 14V16M121.5 1V16M124.5 14V16M126.5 14V16M129.5 14V16M132.5 14V16M135.5 12V16M138.5 14V16M141.5 14V16M144.5 14V16M147.5 14V16M150.5 1V16M153.5 14V16M156.5 14V16M159.5 14V16M162.5 14V16M165.5 12V16M168.5 14V16M171.5 14V16M174.5 14V16M177.5 14V16M180.5 1V16M182.5 14V16M185.5 14V16M188.5 14V16M191.5 14V16M194.5 12V16M197.5 14V16M200.5 14V16M203.5 14V16M206.5 14V16M209.5 1V16M212.5 14V16M215.5 14V16M218.5 14V16M221.5 14V16M224.5 12V16M227.5 14V16M230.5 14V16M233.5 14V16M236.5 14V16M238.5 1V16M241.5 14V16M244.5 14V16M247.5 14V16M250.5 14V16M253.5 12V16M256.5 14V16M259.5 14V16M262.5 14V16M265.5 14V16M268.5 1V16M271.5 14V16M274.5 14V16M277.5 14V16M280.5 14V16M283.5 12V16M286.5 14V16M289.5 14V16M292.5 14V16M295.5 14V16M297.5 1V16M300.5 14V16M303.5 14V16M306.5 14V16M309.5 14V16M312.5 12V16M315.5 14V16M318.5 14V16M321.5 14V16M324.5 14V16M327.5 1V16M330.5 14V16M333.5 14V16M336.5 14V16M339.5 14V16M342.5 12V16M345.5 14V16M348.5 14V16M351.5 14V16M353.5 14V16M356.5 1V16M359.5 14V16M362.5 14V16M365.5 14V16M368.5 14V16M371.5 12V16M374.5 14V16M377.5 14V16M380.5 14V16M383.5 14V16M386.5 1V16M389.5 14V16M392.5 14V16M395.5 14V16M398.5 14V16M401.5 12V16M404.5 14V16M407.5 14V16M409.5 14V16M412.5 14V16M415.5 1V16M418.5 14V16M421.5 14V16M424.5 14V16M427.5 14V16M430.5 12V16M433.5 14V16M436.5 14V16M439.5 14V16M442.5 14V16M445.5 1V16M448.5 14V16M451.5 14V16M454.5 14V16M457.5 14V16M460.5 12V16M463.5 14V16M465.5 14V16M468.5 14V16M471.5 14V16M474.5 1V16M477.5 14V16M480.5 14V16M483.5 14V16M486.5 14V16M489.5 12V16M492.5 14V16M495.5 14V16M498.5 14V16M501.5 14V16M504.5 1V16M507.5 14V16M510.5 14V16M513.5 14V16M516.5 14V16M519.5 12V16M522.5 14V16M524.5 14V16M527.5 14V16M530.5 14V16M533.5 1V16M536.5 14V16M539.5 14V16M542.5 14V16M545.5 14V16M548.5 12V16M551.5 14V16M554.5 14V16M557.5 14V16M560.5 14V16M563.5 1V16M566.5 14V16M569.5 14V16M572.5 14V16M575.5 14V16M578.5 12V16M580.5 14V16M583.5 14V16M586.5 14V16M589.5 14V16M592.5 1V16M595.5 14V16M598.5 14V16M601.5 14V16M604.5 14V16M607.5 12V16M610.5 14V16M613.5 14V16M616.5 14V16M619.5 14V16M622.5 1V16M625.5 14V16M628.5 14V16M631.5 14V16M634.5 14V16M636.5 12V16M639.5 14V16M642.5 14V16M645.5 14V16M648.5 14V16M651.5 1V16M654.5 14V16M657.5 14V16M660.5 14V16M663.5 14V16M666.5 12V16M669.5 14V16M672.5 14V16M675.5 14V16M678.5 14V16M681.5 1V16M684.5 14V16M687.5 14V16M690.5 14V16M692.5 14V16M695.5 12V16M698.5 14V16M701.5 14V16M704.5 14V16M707.5 14V16M710.5 1V16M713.5 14V16M716.5 14V16M719.5 14V16M722.5 14V16M725.5 12V16M728.5 14V16M731.5 14V16M734.5 14V16M737.5 14V16M740.5 1V16M743.5 14V16M746.5 14V16M749.5 14V16M751.5 14V16M754.5 12V16M757.5 14V16M760.5 14V16M763.5 14V16M766.5 14V16M769.5 1V16M772.5 14V16M775.5 14V16M778.5 14V16M781.5 14V16M784.5 12V16M787.5 14V16M790.5 14V16M793.5 14V16M796.5 14V16M799.5 1V16M802.5 14V16M805.5 14V16M807.5 14V16M810.5 14V16M813.5 12V16M816.5 14V16M819.5 14V16M822.5 14V16M825.5 14V16M828.5 1V16M831.5 14V16M834.5 14V16M837.5 14V16M840.5 14V16M843.5 12V16M846.5 14V16M849.5 14V16M852.5 14V16M855.5 14V16M858.5 1V16M861.5 14V16M863.5 14V16M866.5 14V16M869.5 14V16M872.5 12V16M875.5 14V16M878.5 14V16M881.5 14V16M884.5 14V16M887.5 1V16M890.5 14V16M893.5 14V16M896.5 14V16M899.5 14V16M902.5 12V16M905.5 14V16M908.5 14V16M911.5 14V16M914.5 14V16M917.5 1V16M919.5 14V16M922.5 14V16M925.5 14V16M928.5 14V16M931.5 12V16M934.5 14V16M937.5 14V16M940.5 14V16M943.5 14V16M946.5 1V16M949.5 14V16M952.5 14V16M955.5 14V16M958.5 14V16M961.5 12V16M964.5 14V16M967.5 14V16M970.5 14V16M973.5 14V16M976.5 1V16M978.5 14V16M981.5 14V16M984.5 14V16M987.5 14V16M990.5 12V16M993.5 14V16M996.5 14V16M999.5 14V16M1002.5 14V16M1005.5 1V16M1008.5 14V16M1011.5 14V16M1014.5 14V16M1017.5 14V16M1020.5 12V16M1023.5 14V16M1026.5 14V16M1029.5 14V16M1032.5 14V16M1034.5 1V16M1037.5 14V16M1040.5 14V16M1043.5 14V16M1046.5 14V16M1049.5 12V16M1052.5 14V16M1055.5 14V16M1058.5 14V16M1061.5 14V16M1064.5 1V16M1067.5 14V16M1070.5 14V16M1073.5 14V16M1076.5 14V16M1079.5 12V16M1082.5 14V16M1085.5 14V16M1088.5 14V16M1090.5 14V16M1093.5 1V16M1096.5 14V16M1099.5 14V16M1102.5 14V16M1105.5 14V16M1108.5 12V16M1111.5 14V16M1114.5 14V16M1117.5 14V16M1120.5 14V16M1123.5 1V16M1126.5 14V16M1129.5 14V16M1132.5 14V16M1135.5 14V16M1138.5 12V16M1141.5 14V16M1144.5 14V16M1146.5 14V16M1149.5 14V16M1152.5 1V16M1155.5 14V16M1158.5 14V16M1161.5 14V16M1164.5 14V16M1167.5 12V16M1170.5 14V16M1173.5 14V16M1176.5 14V16M1179.5 14V16M1182.5 1V16M1185.5 14V16M1188.5 14V16M1191.5 14V16M1194.5 14V16M1197.5 12V16M1200.5 14V16M1202.5 14V16M1205.5 14V16M1208.5 14V16M1211.5 1V16M1214.5 14V16M1217.5 14V16M1220.5 14V16M1223.5 14V16M1226.5 12V16M1229.5 14V16M1232.5 14V16M1235.5 14V16M1238.5 14V16M1241.5 1V16M1244.5 14V16M1247.5 14V16M1250.5 14V16M1253.5 14V16M1256.5 12V16M1259.5 14V16M1261.5 14V16M1264.5 14V16M1267.5 14V16M1270.5 1V16M1273.5 14V16M1276.5 14V16M1279.5 14V16M1282.5 14V16M1285.5 12V16M1288.5 14V16M1291.5 14V16M1294.5 14V16M1297.5 14V16M1300.5 1V16M1303.5 14V16M1306.5 14V16M1309.5 14V16M1312.5 14V16M1315.5 12V16M1317.5 14V16M1320.5 14V16M1323.5 14V16M1326.5 14V16M1329.5 1V16M1332.5 14V16M1335.5 14V16M1338.5 14V16M1341.5 14V16M1344.5 12V16M1347.5 14V16M1350.5 14V16M1353.5 14V16M1356.5 14V16M1359.5 1V16M1362.5 14V16M1365.5 14V16M1368.5 14V16M1371.5 14V16M1373.5 12V16M1376.5 14V16M1379.5 14V16M1382.5 14V16M1385.5 14V16M1388.5 1V16M1391.5 14V16M1394.5 14V16M1397.5 14V16M1400.5 14V16M1403.5 12V16M1406.5 14V16M1409.5 14V16M1412.5 14V16M1415.5 14V16M1418.5 1V16M1421.5 14V16M1424.5 14V16M1427.5 14V16M1429.5 14V16M1432.5 12V16M1435.5 14V16M1438.5 14V16M1441.5 14V16M1444.5 14V16M1447.5 1V16M1450.5 14V16M1453.5 14V16M1456.5 14V16M1459.5 14V16M1462.5 12V16M1465.5 14V16M1468.5 14V16M1471.5 14V16M1474.5 14V16M1477.5 1V16M1480.5 14V16M1483.5 14V16M1486.5 14V16M1488.5 14V16M1491.5 12V16M1494.5 14V16M1497.5 14V16M1500.5 14V16M1503.5 14V16M1506.5 1V16M1509.5 14V16M1512.5 14V16M1515.5 14V16M1518.5 14V16M1521.5 12V16M1524.5 14V16M1527.5 14V16M1530.5 14V16M1533.5 14V16M1536.5 1V16M1539.5 14V16M1542.5 14V16M1544.5 14V16M1547.5 14V16M1550.5 12V16M1553.5 14V16M1556.5 14V16M1559.5 14V16M1562.5 14V16M1565.5 1V16M1568.5 14V16M1571.5 14V16M1574.5 14V16M1577.5 14V16M1580.5 12V16M1583.5 14V16M1586.5 14V16M1589.5 14V16M1592.5 14V16M1595.5 1V16M1598.5 14V16M1600.5 14V16M1603.5 14V16M1606.5 14V16M1609.5 12V16M1612.5 14V16M1615.5 14V16M1618.5 14V16M1621.5 14V16M1624.5 1V16M1627.5 14V16M1630.5 14V16M1633.5 14V16M1636.5 14V16M1639.5 12V16M1642.5 14V16M1645.5 14V16M1648.5 14V16M1651.5 14V16M1654.5 1V16M1656.5 14V16M1659.5 14V16M1662.5 14V16M1665.5 14V16M1668.5 12V16M1671.5 14V16M1674.5 14V16M1677.5 14V16M1680.5 14V16M1683.5 1V16M1686.5 14V16" stroke="#a8a8a8"/><path d="M0 16.5H1688" stroke="#9a9a9a"/></svg>
<svg class="a" style="left:50px;top:97px;" width="1688" height="17" viewBox="0 0 1688 17"><g font-family="Liberation Sans" font-size="9.5" fill="#e2e2e2" letter-spacing="-0.2"><text x="5" y="10">180</text><text x="34" y="10">170</text><text x="64" y="10">160</text><text x="93" y="10">150</text><text x="123" y="10">140</text><text x="152" y="10">130</text><text x="182" y="10">120</text><text x="211" y="10">110</text><text x="240" y="10">100</text><text x="270" y="10">90</text><text x="299" y="10">80</text><text x="329" y="10">70</text><text x="358" y="10">60</text><text x="388" y="10">50</text><text x="417" y="10">40</text><text x="447" y="10">30</text><text x="476" y="10">20</text><text x="506" y="10">10</text><text x="535" y="10">0</text><text x="565" y="10">10</text><text x="594" y="10">20</text><text x="624" y="10">30</text><text x="653" y="10">40</text><text x="683" y="10">50</text><text x="712" y="10">60</text><text x="742" y="10">70</text><text x="771" y="10">80</text><text x="801" y="10">90</text><text x="830" y="10">100</text><text x="860" y="10">110</text><text x="889" y="10">120</text><text x="919" y="10">130</text><text x="948" y="10">140</text><text x="978" y="10">150</text><text x="1007" y="10">160</text><text x="1036" y="10">170</text><text x="1066" y="10">180</text><text x="1095" y="10">190</text><text x="1125" y="10">200</text><text x="1154" y="10">210</text><text x="1184" y="10">220</text><text x="1213" y="10">230</text><text x="1243" y="10">240</text><text x="1272" y="10">250</text><text x="1302" y="10">260</text><text x="1331" y="10">270</text><text x="1361" y="10">280</text><text x="1390" y="10">290</text><text x="1420" y="10">300</text><text x="1449" y="10">310</text><text x="1479" y="10">320</text><text x="1508" y="10">330</text><text x="1538" y="10">340</text><text x="1567" y="10">350</text><text x="1597" y="10">360</text><text x="1626" y="10">370</text><text x="1656" y="10">380</text><text x="1685" y="10">390</text></g></svg>
<svg class="a" style="left:34px;top:113px;" width="16" height="910" viewBox="0 0 16 910"><path d="M13 -16.5H16M13 -13.5H16M0 -10.5H16M13 -7.5H16M13 -4.5H16M13 -1.5H16M13 1.5H16M11 4.5H16M13 7.5H16M13 10.5H16M13 13.5H16M13 16.5H16M0 19.5H16M13 22.5H16M13 24.5H16M13 27.5H16M13 30.5H16M11 33.5H16M13 36.5H16M13 39.5H16M13 42.5H16M13 45.5H16M0 48.5H16M13 51.5H16M13 54.5H16M13 57.5H16M13 60.5H16M11 63.5H16M13 66.5H16M13 69.5H16M13 72.5H16M13 75.5H16M0 78.5H16M13 81.5H16M13 83.5H16M13 86.5H16M13 89.5H16M11 92.5H16M13 95.5H16M13 98.5H16M13 101.5H16M13 104.5H16M0 107.5H16M13 110.5H16M13 113.5H16M13 116.5H16M13 119.5H16M11 122.5H16M13 125.5H16M13 128.5H16M13 131.5H16M13 134.5H16M0 137.5H16M13 139.5H16M13 142.5H16M13 145.5H16M13 148.5H16M11 151.5H16M13 154.5H16M13 157.5H16M13 160.5H16M13 163.5H16M0 166.5H16M13 169.5H16M13 172.5H16M13 175.5H16M13 178.5H16M11 181.5H16M13 184.5H16M13 187.5H16M13 190.5H16M13 193.5H16M0 195.5H16M13 198.5H16M13 201.5H16M13 204.5H16M13 207.5H16M11 210.5H16M13 213.5H16M13 216.5H16M13 219.5H16M13 222.5H16M0 225.5H16M13 228.5H16M13 231.5H16M13 234.5H16M13 237.5H16M11 240.5H16M13 243.5H16M13 246.5H16M13 249.5H16M13 251.5H16M0 254.5H16M13 257.5H16M13 260.5H16M13 263.5H16M13 266.5H16M11 269.5H16M13 272.5H16M13 275.5H16M13 278.5H16M13 281.5H16M0 284.5H16M13 287.5H16M13 290.5H16M13 293.5H16M13 296.5H16M11 299.5H16M13 302.5H16M13 305.5H16M13 308.5H16M13 310.5H16M0 313.5H16M13 316.5H16M13 319.5H16M13 322.5H16M13 325.5H16M11 328.5H16M13 331.5H16M13 334.5H16M13 337.5H16M13 340.5H16M0 343.5H16M13 346.5H16M13 349.5H16M13 352.5H16M13 355.5H16M11 358.5H16M13 361.5H16M13 364.5H16M13 366.5H16M13 369.5H16M0 372.5H16M13 375.5H16M13 378.5H16M13 381.5H16M13 384.5H16M11 387.5H16M13 390.5H16M13 393.5H16M13 396.5H16M13 399.5H16M0 402.5H16M13 405.5H16M13 408.5H16M13 411.5H16M13 414.5H16M11 417.5H16M13 420.5H16M13 422.5H16M13 425.5H16M13 428.5H16M0 431.5H16M13 434.5H16M13 437.5H16M13 440.5H16M13 443.5H16M11 446.5H16M13 449.5H16M13 452.5H16M13 455.5H16M13 458.5H16M0 461.5H16M13 464.5H16M13 467.5H16M13 470.5H16M13 473.5H16M11 476.5H16M13 478.5H16M13 481.5H16M13 484.5H16M13 487.5H16M0 490.5H16M13 493.5H16M13 496.5H16M13 499.5H16M13 502.5H16M11 505.5H16M13 508.5H16M13 511.5H16M13 514.5H16M13 517.5H16M0 520.5H16M13 523.5H16M13 526.5H16M13 529.5H16M13 532.5H16M11 535.5H16M13 537.5H16M13 540.5H16M13 543.5H16M13 546.5H16M0 549.5H16M13 552.5H16M13 555.5H16M13 558.5H16M13 561.5H16M11 564.5H16M13 567.5H16M13 570.5H16M13 573.5H16M13 576.5H16M0 579.5H16M13 582.5H16M13 585.5H16M13 588.5H16M13 591.5H16M11 593.5H16M13 596.5H16M13 599.5H16M13 602.5H16M13 605.5H16M0 608.5H16M13 611.5H16M13 614.5H16M13 617.5H16M13 620.5H16M11 623.5H16M13 626.5H16M13 629.5H16M13 632.5H16M13 635.5H16M0 638.5H16M13 641.5H16M13 644.5H16M13 647.5H16M13 649.5H16M11 652.5H16M13 655.5H16M13 658.5H16M13 661.5H16M13 664.5H16M0 667.5H16M13 670.5H16M13 673.5H16M13 676.5H16M13 679.5H16M11 682.5H16M13 685.5H16M13 688.5H16M13 691.5H16M13 694.5H16M0 697.5H16M13 700.5H16M13 703.5H16M13 705.5H16M13 708.5H16M11 711.5H16M13 714.5H16M13 717.5H16M13 720.5H16M13 723.5H16M0 726.5H16M13 729.5H16M13 732.5H16M13 735.5H16M13 738.5H16M11 741.5H16M13 744.5H16M13 747.5H16M13 750.5H16M13 753.5H16M0 756.5H16M13 759.5H16M13 761.5H16M13 764.5H16M13 767.5H16M11 770.5H16M13 773.5H16M13 776.5H16M13 779.5H16M13 782.5H16M0 785.5H16M13 788.5H16M13 791.5H16M13 794.5H16M13 797.5H16M11 800.5H16M13 803.5H16M13 806.5H16M13 809.5H16M13 812.5H16M0 815.5H16M13 818.5H16M13 820.5H16M13 823.5H16M13 826.5H16M11 829.5H16M13 832.5H16M13 835.5H16M13 838.5H16M13 841.5H16M0 844.5H16M13 847.5H16M13 850.5H16M13 853.5H16M13 856.5H16M11 859.5H16M13 862.5H16M13 865.5H16M13 868.5H16M13 871.5H16M0 874.5H16M13 876.5H16M13 879.5H16M13 882.5H16M13 885.5H16M11 888.5H16M13 891.5H16M13 894.5H16M13 897.5H16M13 900.5H16M0 903.5H16M13 906.5H16M13 909.5H16" stroke="#a8a8a8"/><path d="M15.5 0V910" stroke="#9a9a9a"/><g font-family="Liberation Sans" font-size="10.5" fill="#e2e2e2"><text x="2" y="-1">1</text><text x="2" y="8">0</text><text x="2" y="29">0</text><text x="2" y="58">1</text><text x="2" y="67">0</text><text x="2" y="88">2</text><text x="2" y="97">0</text><text x="2" y="117">3</text><text x="2" y="126">0</text><text x="2" y="147">4</text><text x="2" y="156">0</text><text x="2" y="176">5</text><text x="2" y="185">0</text><text x="2" y="205">6</text><text x="2" y="214">0</text><text x="2" y="235">7</text><text x="2" y="244">0</text><text x="2" y="264">8</text><text x="2" y="273">0</text><text x="2" y="294">9</text><text x="2" y="303">0</text><text x="2" y="323">1</text><text x="2" y="332">0</text><text x="2" y="341">0</text><text x="2" y="353">1</text><text x="2" y="362">1</text><text x="2" y="371">0</text><text x="2" y="382">1</text><text x="2" y="391">2</text><text x="2" y="400">0</text><text x="2" y="412">1</text><text x="2" y="421">3</text><text x="2" y="430">0</text><text x="2" y="441">1</text><text x="2" y="450">4</text><text x="2" y="459">0</text><text x="2" y="471">1</text><text x="2" y="480">5</text><text x="2" y="489">0</text><text x="2" y="500">1</text><text x="2" y="509">6</text><text x="2" y="518">0</text><text x="2" y="530">1</text><text x="2" y="539">7</text><text x="2" y="548">0</text><text x="2" y="559">1</text><text x="2" y="568">8</text><text x="2" y="577">0</text><text x="2" y="589">1</text><text x="2" y="598">9</text><text x="2" y="607">0</text><text x="2" y="618">2</text><text x="2" y="627">0</text><text x="2" y="636">0</text><text x="2" y="648">2</text><text x="2" y="657">1</text><text x="2" y="666">0</text><text x="2" y="677">2</text><text x="2" y="686">2</text><text x="2" y="695">0</text><text x="2" y="707">2</text><text x="2" y="716">3</text><text x="2" y="725">0</text><text x="2" y="736">2</text><text x="2" y="745">4</text><text x="2" y="754">0</text><text x="2" y="766">2</text><text x="2" y="775">5</text><text x="2" y="784">0</text><text x="2" y="795">2</text><text x="2" y="804">6</text><text x="2" y="813">0</text><text x="2" y="825">2</text><text x="2" y="834">7</text><text x="2" y="843">0</text><text x="2" y="854">2</text><text x="2" y="863">8</text><text x="2" y="872">0</text><text x="2" y="884">2</text><text x="2" y="893">9</text><text x="2" y="902">0</text><text x="2" y="913">3</text><text x="2" y="922">0</text><text x="2" y="931">0</text></g></svg>
<div class="a" style="left:34px;top:97px;width:16px;height:17px;background:#222222;"></div>
<svg class="a" style="left:34px;top:97px;" width="16" height="17" viewBox="0 0 16 17"><path d="M3 7.5H14M8.5 2V16" stroke="#c8c8c8" stroke-dasharray="1 1.5"/><path d="M15.5 0V17M0 16.5H16" stroke="#9a9a9a"/></svg>
<div class="a" style="left:50px;top:114px;width:1687px;height:910px;background:#5f5f5f;"></div>
<div class="a" style="left:575px;top:123px;width:637px;height:893px;border:1px solid #c86878;"></div>
<div class="a" style="left:586px;top:134px;width:619px;height:875px;background:#000;"></div>
<div class="a" style="left:583px;top:131px;width:620px;height:876px;background:#000;"></div>
<div class="a" style="left:584px;top:132px;width:618px;height:874px;background:#fff;"></div>
<div class="a" style="left:1737px;top:113px;width:1px;height:910px;background:#2a2a2a;"></div>
<div class="a" style="left:1738px;top:113px;width:15px;height:910px;background:#353535;"></div>
<div class="a" style="left:1739px;top:250px;width:13px;height:674px;background:#959595;"></div>
<svg class="a" style="left:1740px;top:1013px;" width="10" height="7" viewBox="0 0 10 7"><path d="M0 0H10L5 6Z" fill="#e0e0e0"/></svg>
<div class="a" style="left:34px;top:1023px;width:1704px;height:18px;background:#333333;border-top:1px solid #222;"></div>
<div class="a" style="left:1737px;top:1023px;width:16px;height:18px;background:#353535;"></div>
<div class="a" style="left:557px;top:1025px;width:1078px;height:14px;background:#999999;"></div>
<div class="a" style="left:34px;top:1039px;width:1720px;height:2px;background:#1e1e1e;"></div>
<div class="a" style="left:1753px;top:78px;width:2px;height:963px;background:#2e2e2e;"></div>
<div class="a" style="left:1755px;top:78px;width:165px;height:963px;background:#484848;"></div>
<div class="a" style="left:4px;top:106px;width:24px;height:20px;background:#333333;"></div>
<svg class="a" style="left:10px;top:107px;" width="13" height="18" viewBox="0 0 13 18"><path d="M1.5 1.5V14L4.5 11L7 16.5L9.5 15.5L7.2 10.5H11.5Z" fill="#2e2e2e" stroke="#e4e4e4" stroke-width="1.2" stroke-linejoin="round"/></svg>
<svg class="a" style="left:11px;top:128px;" width="12" height="17" viewBox="0 0 12 17"><path d="M1 1V13L4 10.5L6.5 16L9 15L6.7 9.8H11Z" fill="#d0d0d0"/></svg>
<svg class="a" style="left:10px;top:150px;" width="15" height="17" viewBox="0 0 15 17"><path d="M0 1H6L10 5V15H0Z" fill="#cfcfcf"/><path d="M6 1V5H10" fill="none" stroke="#555"/><path d="M7 8V16L9 14L11 16.5L12 16L10.5 13.5H14Z" fill="#e0e0e0" stroke="#444" stroke-width=".6"/></svg>
<svg class="a" style="left:6px;top:172px;" width="21" height="15" viewBox="0 0 21 15"><path d="M1.5 0V15M19.5 0V15" stroke="#d6d6d6" stroke-width="2"/><path d="M4 7.5H17" stroke="#e0e0e0" stroke-width="1.6"/><path d="M3.5 7.5L8 3.5V11.5ZM17.5 7.5L13 3.5V11.5Z" fill="#e0e0e0"/></svg>
<svg class="a" style="left:9px;top:192px;" width="18" height="17" viewBox="0 0 18 17"><path d="M1 7V15H16V11" fill="none" stroke="#d6d6d6" stroke-width="2"/><rect x="4" y="9" width="2" height="2" fill="#ddd"/><rect x="7.5" y="9" width="2" height="2" fill="#ddd"/><rect x="11" y="9" width="2" height="2" fill="#ddd"/><rect x="4" y="12" width="2" height="2" fill="#ddd"/><rect x="7.5" y="12" width="2" height="2" fill="#ddd"/><rect x="11" y="12" width="2" height="2" fill="#ddd"/><path d="M5 1L10 6M10 2.5V6H6.5" fill="none" stroke="#e0e0e0" stroke-width="1.4"/><path d="M15 17H18V14Z" fill="#ddd"/></svg>
<div class="a" style="left:4px;top:216px;width:24px;height:1px;background:#333333;"></div>
<div class="a" style="left:4px;top:217px;width:24px;height:1px;background:#575757;"></div>
<div class="a t" style="left:9px;top:220px;font-size:18px;line-height:18px;color:#d8d8d8;font-family:'Liberation Serif',serif;">T</div>
<svg class="a" style="left:23px;top:232px;" width="4" height="4" viewBox="0 0 4 4"><path d="M4 0V4H0Z" fill="#e0e0e0"/></svg>
<svg class="a" style="left:9px;top:241px;" width="15" height="16" viewBox="0 0 15 16"><path d="M1 15L14 1" stroke="#d8d8d8" stroke-width="1.4"/></svg>
<svg class="a" style="left:8px;top:261px;" width="18" height="18" viewBox="0 0 18 18"><path d="M9 3L13 7L8 14L2 16L4 10Z" fill="#cfcfcf" stroke="#eee" stroke-width=".8"/><path d="M10 1L15 6" stroke="#ddd" stroke-width="2"/><path d="M3 15L7 11" stroke="#555"/><circle cx="7" cy="11" r="1" fill="#555"/></svg>
<svg class="a" style="left:23px;top:275px;" width="4" height="4" viewBox="0 0 4 4"><path d="M4 0V4H0Z" fill="#e0e0e0"/></svg>
<svg class="a" style="left:8px;top:283px;" width="16" height="17" viewBox="0 0 16 17"><path d="M12 1L15 4L6 13L2 14L3 10Z" fill="#cfcfcf"/><path d="M2 14L3 10L6 13Z" fill="#888"/><path d="M10 3L13 6" stroke="#555"/></svg>
<svg class="a" style="left:23px;top:296px;" width="4" height="4" viewBox="0 0 4 4"><path d="M4 0V4H0Z" fill="#e0e0e0"/></svg>
<svg class="a" style="left:9px;top:304px;" width="16" height="15" viewBox="0 0 16 15"><rect x="1" y="1" width="13" height="12" fill="#777" stroke="#d8d8d8" stroke-width="1.4"/><path d="M1 1L14 13M14 1L1 13" stroke="#d8d8d8" stroke-width="1.2"/></svg>
<svg class="a" style="left:23px;top:317px;" width="4" height="4" viewBox="0 0 4 4"><path d="M4 0V4H0Z" fill="#e0e0e0"/></svg>
<svg class="a" style="left:9px;top:326px;" width="16" height="15" viewBox="0 0 16 15"><rect x="1" y="1" width="13" height="12" fill="#777" stroke="#d8d8d8" stroke-width="1.4"/></svg>
<svg class="a" style="left:23px;top:339px;" width="4" height="4" viewBox="0 0 4 4"><path d="M4 0V4H0Z" fill="#e0e0e0"/></svg>
<div class="a" style="left:4px;top:347px;width:24px;height:1px;background:#333333;"></div>
<div class="a" style="left:4px;top:348px;width:24px;height:1px;background:#575757;"></div>
<svg class="a" style="left:7px;top:352px;" width="19" height="16" viewBox="0 0 19 16"><circle cx="15" cy="3.5" r="2.7" fill="none" stroke="#d8d8d8" stroke-width="1.4"/><circle cx="15" cy="12.5" r="2.7" fill="none" stroke="#d8d8d8" stroke-width="1.4"/><path d="M1 2L13 11M1 14L13 5" stroke="#d8d8d8" stroke-width="1.6"/></svg>
<svg class="a" style="left:7px;top:373px;" width="19" height="17" viewBox="0 0 19 17"><rect x="5.5" y="3.5" width="11" height="11" fill="none" stroke="#ddd" stroke-dasharray="2 1.5"/><path d="M1 1V11L4 8.5L6 12L7.5 11.5L5.5 8H9Z" fill="#d8d8d8"/><path d="M15 17H19V13Z" fill="#ddd"/></svg>
<svg class="a" style="left:8px;top:395px;" width="16" height="14" viewBox="0 0 16 14"><defs><linearGradient id="g1"><stop offset="0" stop-color="#1a1a1a"/><stop offset="1" stop-color="#e0e0e0"/></linearGradient></defs><rect x=".5" y=".5" width="15" height="13" fill="url(#g1)" stroke="#ccc"/></svg>
<svg class="a" style="left:8px;top:416px;" width="16" height="14" viewBox="0 0 16 14"><defs><linearGradient id="g2" x1="0" y1="0" x2="0" y2="1"><stop offset="0" stop-color="#ddd"/><stop offset="1" stop-color="#555"/></linearGradient><pattern id="ck" width="4" height="4" patternUnits="userSpaceOnUse"><rect width="2" height="2" fill="#222"/><rect x="2" y="2" width="2" height="2" fill="#222"/></pattern></defs><rect x=".5" y=".5" width="15" height="13" fill="url(#g2)" stroke="#ccc"/><rect x="1" y="5" width="14" height="8" fill="url(#ck)" opacity=".7"/></svg>
<div class="a" style="left:4px;top:437px;width:24px;height:1px;background:#333333;"></div>
<div class="a" style="left:4px;top:438px;width:24px;height:1px;background:#575757;"></div>
<svg class="a" style="left:9px;top:445px;" width="15" height="15" viewBox="0 0 15 15"><path d="M0 0H14V10L10 14H0Z" fill="#d0d0d0"/><path d="M2.5 3.5H11M2.5 6H11M2.5 8.5H8" stroke="#555"/><path d="M10 14V10H14Z" fill="#777"/></svg>
<svg class="a" style="left:8px;top:465px;" width="17" height="17" viewBox="0 0 17 17"><path d="M11 2.5A2.5 2.5 0 0 1 14.5 6L12.5 8L9 4.5Z" fill="#d8d8d8"/><path d="M8 3.5L13.5 9" stroke="#d8d8d8" stroke-width="1.6"/><path d="M9.5 6.5L2.5 13.5L2 15.5L4 15L11 8" fill="none" stroke="#d8d8d8" stroke-width="1.2"/></svg>
<svg class="a" style="left:23px;top:478px;" width="4" height="4" viewBox="0 0 4 4"><path d="M4 0V4H0Z" fill="#e0e0e0"/></svg>
<svg class="a" style="left:7px;top:486px;" width="19" height="17" viewBox="0 0 19 17"><path d="M5 16C3 13 1 10 1 8.5C1.5 7.5 3 8 4 9.5V3C4 1.5 6 1.5 6 3V7V1.8C6 .5 8.2 .5 8.2 1.8V7V2.3C8.2 1 10.4 1 10.4 2.3V7.5V3.8C10.4 2.6 12.6 2.6 12.6 3.8V10C12.6 13 11 15 10.5 16Z" fill="#d0d0d0"/></svg>
<svg class="a" style="left:7px;top:508px;" width="17" height="17" viewBox="0 0 17 17"><circle cx="7" cy="6.5" r="5.3" fill="#777" stroke="#d8d8d8" stroke-width="1.6"/><path d="M10.5 10.5L16 16" stroke="#d8d8d8" stroke-width="2.6"/></svg>
<div class="a" style="left:4px;top:529px;width:24px;height:1px;background:#333333;"></div>
<div class="a" style="left:4px;top:530px;width:24px;height:1px;background:#575757;"></div>
<div class="a" style="left:6px;top:533px;width:13px;height:13px;background:#fff;border:1px solid #222;"></div>
<svg class="a" style="left:6px;top:533px;" width="13" height="13" viewBox="0 0 13 13"><path d="M1 12L12 1" stroke="#e00" stroke-width="2"/></svg>
<div class="a" style="left:15px;top:541px;width:12px;height:12px;background:#e8e8e8;border:2px solid #fff;outline:1px solid #222;"></div>
<div class="a" style="left:17px;top:543px;width:8px;height:8px;background:#444;"></div>
<svg class="a" style="left:17px;top:543px;" width="8" height="8" viewBox="0 0 8 8"><path d="M0 8L8 0" stroke="#e00" stroke-width="2"/></svg>
<svg class="a" style="left:20px;top:533px;" width="7" height="7" viewBox="0 0 7 7"><path d="M1 1.5H4.5V5" fill="none" stroke="#ccc"/><path d="M0 1.5L2 0V3ZM4.5 7L3 5H6Z" fill="#ccc"/></svg>
<svg class="a" style="left:5px;top:551px;" width="13" height="13" viewBox="0 0 13 13"><rect x=".5" y=".5" width="7" height="7" fill="#fff" stroke="#111"/><rect x="4.5" y="4.5" width="8" height="8" fill="#222" stroke="#ddd"/><path d="M1 7L7 1" stroke="#e00" stroke-width="1.5"/></svg>
<div class="a" style="left:4px;top:566px;width:24px;height:1px;background:#333333;"></div>
<div class="a" style="left:4px;top:567px;width:24px;height:1px;background:#575757;"></div>
<svg class="a" style="left:5px;top:569px;" width="12" height="12" viewBox="0 0 12 12"><rect x=".5" y=".5" width="11" height="11" fill="#555" stroke="#d8d8d8"/></svg>
<div class="a t" style="left:19px;top:569px;font-size:13px;line-height:13px;color:#d8d8d8;font-weight:bold;font-family:'Liberation Serif',serif;">T</div>
<div class="a" style="left:4px;top:581px;width:24px;height:1px;background:#333333;"></div>
<div class="a" style="left:4px;top:582px;width:24px;height:1px;background:#575757;"></div>
<div class="a" style="left:4px;top:583px;width:24px;height:21px;background:#333333;"></div>
<div class="a" style="left:10px;top:589px;width:13px;height:13px;background:#fff;border:1px solid #222;"></div>
<svg class="a" style="left:10px;top:589px;" width="13" height="13" viewBox="0 0 13 13"><path d="M1 12L12 1" stroke="#e00" stroke-width="2"/></svg>
<svg class="a" style="left:23px;top:599px;" width="4" height="4" viewBox="0 0 4 4"><path d="M4 0V4H0Z" fill="#e0e0e0"/></svg>
<div class="a" style="left:4px;top:608px;width:24px;height:1px;background:#333333;"></div>
<div class="a" style="left:4px;top:609px;width:24px;height:1px;background:#575757;"></div>
<div class="a" style="left:4px;top:613px;width:24px;height:20px;background:#333333;"></div>
<svg class="a" style="left:10px;top:617px;" width="13" height="12" viewBox="0 0 13 12"><rect x=".5" y=".5" width="12" height="11" fill="none" stroke="#e0e0e0"/><path d="M1 2.5H12" stroke="#e0e0e0"/><rect x="3" y="5" width="4" height="2" fill="#eee"/><rect x="6" y="7" width="4" height="2" fill="#eee"/></svg>
<svg class="a" style="left:24px;top:629px;" width="4" height="4" viewBox="0 0 4 4"><path d="M4 0V4H0Z" fill="#e0e0e0"/></svg>
<div class="a" style="left:576px;top:440px;width:28px;height:1px;background:#a8a8a8;"></div>
<div class="a" style="left:576px;top:567px;width:28px;height:1px;background:#7aa6dc;"></div>
<div class="a" style="left:576px;top:750px;width:28px;height:1px;background:#a8a8a8;"></div>
<div class="a" style="left:657px;top:440px;width:516px;height:2px;background:#e6e6ee;"></div>
<div class="a" style="left:657px;top:160px;width:1px;height:817px;background:#7650ac;"></div>
<div class="a" style="left:750px;top:160px;width:1px;height:817px;background:#7650ac;"></div>
<div class="a" style="left:762px;top:160px;width:1px;height:817px;background:#7650ac;"></div>
<div class="a" style="left:856px;top:160px;width:1px;height:817px;background:#7650ac;"></div>
<div class="a" style="left:868px;top:160px;width:1px;height:817px;background:#7650ac;"></div>
<div class="a" style="left:962px;top:160px;width:1px;height:817px;background:#7650ac;"></div>
<div class="a" style="left:974px;top:160px;width:1px;height:817px;background:#7650ac;"></div>
<div class="a" style="left:1067px;top:160px;width:1px;height:817px;background:#7650ac;"></div>
<div class="a" style="left:1079px;top:160px;width:1px;height:817px;background:#7650ac;"></div>
<div class="a" style="left:1173px;top:160px;width:1px;height:817px;background:#7650ac;"></div>
<div class="a" style="left:657px;top:160px;width:517px;height:1px;background:#c270c4;"></div>
<div class="a" style="left:657px;top:977px;width:517px;height:1px;background:#c270c4;"></div>
<div class="a t" style="left:657px;top:271px;font-size:9px;line-height:10px;color:#8a8a8a;letter-spacing:-0.3px;"><span style="color:#5a9ad6">Autohaus</span> <span style="color:#b3243f">Apolda</span> | Sulzaer Straße 29 | 99510 Apolda</div>
<div class="a t" style="left:657px;top:307px;font-size:10.5px;line-height:10.5px;color:#1a1a1a;font-weight:bold;letter-spacing:-0.15px;">&lt;&lt;Firma&gt;&gt;</div>
<div class="a t" style="left:657px;top:320px;font-size:10.5px;line-height:10.5px;color:#1a1a1a;letter-spacing:0.05px;">&lt;&lt;Ansprechpartner&gt;&gt;</div>
<div class="a t" style="left:657px;top:334px;font-size:10.5px;line-height:10.5px;color:#1a1a1a;letter-spacing:0.05px;">&lt;&lt;Adresse&gt;&gt;</div>
<div class="a t" style="left:657px;top:347px;font-size:10.5px;line-height:10.5px;color:#1a1a1a;letter-spacing:0.05px;">&lt;&lt;PLZ&gt;&gt; &lt;&lt;Ort1&gt;&gt;</div>
<div class="a t" style="left:657px;top:361px;font-size:10.5px;line-height:10.5px;color:#1a1a1a;letter-spacing:0.05px;">&lt;&lt;Ort2&gt;&gt;</div>
<div class="a t" style="left:659px;top:451px;font-size:39px;line-height:39px;color:#a3193b;letter-spacing:1.35px;font-family:'Liberation Serif',serif;-webkit-text-stroke:0.35px #a3193b;">Prüfungsangst? Nicht mit uns!</div>
<div class="a" style="left:657px;top:452px;width:546px;height:48px;border:1px solid #4a8ee0;"></div>
<div class="a" style="left:654px;top:449px;width:7px;height:7px;background:#fff;border:1px solid #4a8ee0;"></div>
<div class="a" style="left:654px;top:496px;width:7px;height:7px;background:#fff;border:1px solid #4a8ee0;"></div>
<div class="a" style="left:926px;top:449px;width:7px;height:7px;background:#fff;border:1px solid #4a8ee0;"></div>
<div class="a" style="left:926px;top:496px;width:7px;height:7px;background:#fff;border:1px solid #4a8ee0;"></div>
<div class="a" style="left:1199px;top:449px;width:7px;height:7px;background:#fff;border:1px solid #4a8ee0;"></div>
<div class="a" style="left:1199px;top:496px;width:7px;height:7px;background:#fff;border:1px solid #4a8ee0;"></div>
<div class="a" style="left:1089px;top:449px;width:8px;height:8px;background:#4a9af0;border:1px solid #4a8ee0;"></div>
<div class="a" style="left:653px;top:465px;width:9px;height:9px;background:#fff;border:1px solid #4a8ee0;"></div>
<div class="a" style="left:654px;top:473px;width:7px;height:7px;background:#fff;border:1px solid #4a8ee0;"></div>
<div class="a" style="left:1199px;top:465px;width:7px;height:8px;background:#f0d000;border:1px solid #c8a800;"></div>
<div class="a" style="left:1200px;top:474px;width:6px;height:6px;background:#fff;border:1px solid #4a8ee0;"></div>
<div class="a" style="left:1199px;top:480px;width:8px;height:9px;background:#fff;border:1px solid #4a8ee0;"></div>
<div class="a t" style="left:657px;top:939px;font-size:10px;line-height:10px;color:#5a9ad6;letter-spacing:0.15px;">Autohaus Apolda</div>
<div class="a t" style="left:657px;top:952px;font-size:10px;line-height:10px;color:#7a7a7a;letter-spacing:0.15px;">Sulzaer Straße 29</div>
<div class="a t" style="left:657px;top:964px;font-size:10px;line-height:10px;color:#7a7a7a;letter-spacing:0.15px;">99510 Apolda</div>
<div class="a t" style="left:763px;top:939px;font-size:10px;line-height:10px;color:#5a9ad6;letter-spacing:0.15px;">Telefon</div>
<div class="a t" style="left:763px;top:952px;font-size:10px;line-height:10px;color:#7a7a7a;letter-spacing:0.6px;">03644/555065</div>
<div class="a t" style="left:868px;top:939px;font-size:10px;line-height:10px;color:#5a9ad6;letter-spacing:0.15px;">Telefax</div>
<div class="a t" style="left:868px;top:952px;font-size:10px;line-height:10px;color:#7a7a7a;letter-spacing:0.6px;">03644/555067</div>
<div class="a t" style="left:974px;top:939px;font-size:10px;line-height:10px;color:#5a9ad6;letter-spacing:0.15px;">Mail | Web</div>
<div class="a t" style="left:974px;top:952px;font-size:10px;line-height:10px;color:#7a7a7a;letter-spacing:0.15px;">autohaus-apolda@web.de</div>
<div class="a t" style="left:974px;top:964px;font-size:10px;line-height:10px;color:#7a7a7a;letter-spacing:0.15px;">www.autohaus-apolda.de</div>
<div class="a" style="left:334px;top:157px;width:209px;height:235px;background:#484848;border:1px solid #1e1e1e;border-radius:4px 4px 0 0;"></div>
<div class="a" style="left:335px;top:158px;width:207px;height:13px;background:#2e2e2e;border-radius:3px 3px 0 0;border-top:1px solid #424242;border-bottom:1px solid #222;"></div>
<svg class="a" style="left:515px;top:161px;" width="8" height="7" viewBox="0 0 8 7"><path d="M4 0V7L0 3.5ZM8 0V7L4 3.5Z" fill="#cfcfcf"/></svg>
<svg class="a" style="left:530px;top:160px;" width="8" height="8" viewBox="0 0 8 8"><path d="M1 1L7 7M7 1L1 7" stroke="#d8d8d8" stroke-width="1.5"/></svg>
<div class="a" style="left:335px;top:171px;width:207px;height:17px;background:#2e2e2e;border-top:1px solid #404040;border-bottom:1px solid #222;"></div>
<div class="a" style="left:335px;top:171px;width:69px;height:18px;background:#484848;border-top:1px solid #555;"></div>
<svg class="a" style="left:340px;top:174px;" width="6" height="11" viewBox="0 0 6 11"><path d="M.5 4.5L3 1.5L5.5 4.5M.5 6.5L3 9.5L5.5 6.5" fill="none" stroke="#d6d6d6" stroke-width="1.1"/></svg>
<div class="a t" style="left:348px;top:174px;font-size:10.5px;line-height:10.5px;color:#e8e8e8;font-weight:bold;letter-spacing:-0.3px;">Farbfelder</div>
<svg class="a" style="left:523px;top:176px;" width="16" height="9" viewBox="0 0 16 9"><path d="M0 2h4l-2 2.5z" fill="#d6d6d6"/><path d="M6 .5h10M6 2.5h10M6 4.5h10M6 6.5h10" stroke="#d6d6d6"/></svg>
<svg class="a" style="left:339px;top:190px;" width="22" height="21" viewBox="0 0 22 21"><rect x=".5" y=".5" width="12" height="11" fill="#fff" stroke="#222"/><path d="M1 11L12 1" stroke="#e00" stroke-width="2"/><rect x="8" y="9" width="11" height="11" fill="#444" stroke="#fff" stroke-width="1.5"/><path d="M9 19L18 10" stroke="#e00" stroke-width="2"/><path d="M15 1.5h3v3M14 2.5l-1 1 1 1" fill="none" stroke="#ccc"/></svg>
<div class="a" style="left:371px;top:193px;width:15px;height:15px;background:#333333;"></div>
<svg class="a" style="left:373px;top:196px;" width="11" height="10" viewBox="0 0 11 10"><rect x=".5" y=".5" width="9" height="9" fill="#555" stroke="#d6d6d6"/></svg>
<div class="a t" style="left:388px;top:195px;font-size:13px;line-height:13px;color:#d6d6d6;font-weight:bold;font-family:'Liberation Serif',serif;">T</div>
<div class="a t" style="left:428px;top:196px;font-size:10px;line-height:10px;color:#b8b8b8;letter-spacing:-0.1px;">Farbton:</div>
<div class="a" style="left:467px;top:195px;width:30px;height:13px;background:#6e6e6e;border:1px solid #3a3a3a;"></div>
<div class="a" style="left:496px;top:195px;width:14px;height:13px;background:#5a5a5a;border:1px solid #3a3a3a;"></div>
<svg class="a" style="left:500px;top:198px;" width="6" height="7" viewBox="0 0 6 7"><path d="M0 0V7L5 3.5Z" fill="#888"/></svg>
<div class="a t" style="left:512px;top:196px;font-size:10px;line-height:10px;color:#b8b8b8;">%</div>
<div class="a" style="left:335px;top:214px;width:195px;height:20px;background:#4b5669;border-bottom:1px solid #2c2c2c;"></div>
<div class="a" style="left:336px;top:218px;width:13px;height:13px;background:#fff;border:1px solid #111;"></div>
<svg class="a" style="left:337px;top:219px;" width="11" height="11" viewBox="0 0 11 11"><path d="M0 11L11 0" stroke="#e00" stroke-width="2"/></svg>
<div class="a t" style="left:357px;top:219px;font-size:11px;line-height:11px;color:#f2f2f2;font-weight:bold;letter-spacing:-0.1px;">[Ohne]</div>
<svg class="a" style="left:481px;top:218px;" width="13" height="13" viewBox="0 0 13 13"><path d="M1 1L12 12M12 1L1 12" stroke="#d0d0d0" stroke-width="1.3"/><path d="M9 2L11 4" stroke="#fff" stroke-width="2"/></svg>
<svg class="a" style="left:512px;top:218px;" width="12" height="12" viewBox="0 0 12 12"><rect x=".5" y=".5" width="11" height="11" fill="#ddd" stroke="#999"/><path d="M1 11L11 1" stroke="#e33" stroke-width="1.2"/></svg>
<div class="a" style="left:335px;top:234px;width:195px;height:20px;background:#474747;border-bottom:1px solid #2c2c2c;"></div>
<div class="a" style="left:336px;top:238px;width:13px;height:13px;background:#000;border:1px solid #111;"></div>
<div class="a t" style="left:357px;top:240px;font-size:10px;line-height:10px;color:#cfcfcf;letter-spacing:-0.1px;">[Passermarken]</div>
<svg class="a" style="left:481px;top:238px;" width="13" height="13" viewBox="0 0 13 13"><path d="M1 1L12 12M12 1L1 12" stroke="#d0d0d0" stroke-width="1.3"/><path d="M9 2L11 4" stroke="#fff" stroke-width="2"/></svg>
<svg class="a" style="left:512px;top:238px;" width="12" height="12" viewBox="0 0 12 12"><rect width="12" height="12" fill="#ddd"/><circle cx="6" cy="6" r="3" fill="none" stroke="#222"/><path d="M6 1V11M1 6H11" stroke="#222"/></svg>
<div class="a" style="left:335px;top:254px;width:195px;height:20px;background:#474747;border-bottom:1px solid #2c2c2c;"></div>
<div class="a" style="left:336px;top:258px;width:13px;height:13px;background:#fff;border:1px solid #111;"></div>
<div class="a t" style="left:357px;top:260px;font-size:10px;line-height:10px;color:#cfcfcf;letter-spacing:-0.1px;">[Papier]</div>
<div class="a" style="left:335px;top:274px;width:195px;height:20px;background:#474747;border-bottom:1px solid #2c2c2c;"></div>
<div class="a" style="left:336px;top:278px;width:13px;height:13px;background:#000;border:1px solid #111;"></div>
<div class="a t" style="left:357px;top:280px;font-size:10px;line-height:10px;color:#cfcfcf;letter-spacing:-0.1px;">[Schwarz]</div>
<svg class="a" style="left:481px;top:278px;" width="13" height="13" viewBox="0 0 13 13"><path d="M1 1L12 12M12 1L1 12" stroke="#d0d0d0" stroke-width="1.3"/><path d="M9 2L11 4" stroke="#fff" stroke-width="2"/></svg>
<svg class="a" style="left:497px;top:278px;" width="12" height="12" viewBox="0 0 12 12"><rect x="0" y="0" width="12" height="12" fill="#ccc"/><rect x="1" y="1" width="10" height="10" fill="#888"/><path d="M1 2.5H11M1 4.5H11M1 6.5H11M1 8.5H11M2.5 1V11M4.5 1V11M6.5 1V11M8.5 1V11" stroke="#bbb" stroke-width=".6"/></svg>
<svg class="a" style="left:512px;top:278px;" width="12" height="12" viewBox="0 0 12 12"><rect width="12" height="12" fill="#ddd"/><path d="M1 1L6 6L1 11Z" fill="#19c0e8"/><path d="M1 1H11L6 6Z" fill="#e81ca0"/><path d="M11 1V11L6 6Z" fill="#f0e000"/><path d="M1 11H11L6 6Z" fill="#111"/></svg>
<div class="a" style="left:335px;top:294px;width:195px;height:20px;background:#474747;border-bottom:1px solid #2c2c2c;"></div>
<div class="a" style="left:336px;top:298px;width:13px;height:13px;background:#1a9ae0;border:1px solid #111;"></div>
<div class="a t" style="left:357px;top:300px;font-size:10px;line-height:10px;color:#cfcfcf;letter-spacing:-0.1px;">C=100 M=0 Y=0 K=0</div>
<svg class="a" style="left:497px;top:298px;" width="12" height="12" viewBox="0 0 12 12"><rect x="0" y="0" width="12" height="12" fill="#ccc"/><rect x="1" y="1" width="10" height="10" fill="#888"/><path d="M1 2.5H11M1 4.5H11M1 6.5H11M1 8.5H11M2.5 1V11M4.5 1V11M6.5 1V11M8.5 1V11" stroke="#bbb" stroke-width=".6"/></svg>
<svg class="a" style="left:512px;top:298px;" width="12" height="12" viewBox="0 0 12 12"><rect width="12" height="12" fill="#ddd"/><path d="M1 1L6 6L1 11Z" fill="#19c0e8"/><path d="M1 1H11L6 6Z" fill="#e81ca0"/><path d="M11 1V11L6 6Z" fill="#f0e000"/><path d="M1 11H11L6 6Z" fill="#111"/></svg>
<div class="a" style="left:335px;top:314px;width:195px;height:20px;background:#474747;border-bottom:1px solid #2c2c2c;"></div>
<div class="a" style="left:336px;top:318px;width:13px;height:13px;background:#d0107a;border:1px solid #111;"></div>
<div class="a t" style="left:357px;top:320px;font-size:10px;line-height:10px;color:#cfcfcf;letter-spacing:-0.1px;">C=0 M=100 Y=0 K=0</div>
<svg class="a" style="left:497px;top:318px;" width="12" height="12" viewBox="0 0 12 12"><rect x="0" y="0" width="12" height="12" fill="#ccc"/><rect x="1" y="1" width="10" height="10" fill="#888"/><path d="M1 2.5H11M1 4.5H11M1 6.5H11M1 8.5H11M2.5 1V11M4.5 1V11M6.5 1V11M8.5 1V11" stroke="#bbb" stroke-width=".6"/></svg>
<svg class="a" style="left:512px;top:318px;" width="12" height="12" viewBox="0 0 12 12"><rect width="12" height="12" fill="#ddd"/><path d="M1 1L6 6L1 11Z" fill="#19c0e8"/><path d="M1 1H11L6 6Z" fill="#e81ca0"/><path d="M11 1V11L6 6Z" fill="#f0e000"/><path d="M1 11H11L6 6Z" fill="#111"/></svg>
<div class="a" style="left:335px;top:334px;width:195px;height:20px;background:#474747;border-bottom:1px solid #2c2c2c;"></div>
<div class="a" style="left:336px;top:338px;width:13px;height:13px;background:#f4e600;border:1px solid #111;"></div>
<div class="a t" style="left:357px;top:340px;font-size:10px;line-height:10px;color:#cfcfcf;letter-spacing:-0.1px;">C=0 M=0 Y=100 K=0</div>
<svg class="a" style="left:497px;top:338px;" width="12" height="12" viewBox="0 0 12 12"><rect x="0" y="0" width="12" height="12" fill="#ccc"/><rect x="1" y="1" width="10" height="10" fill="#888"/><path d="M1 2.5H11M1 4.5H11M1 6.5H11M1 8.5H11M2.5 1V11M4.5 1V11M6.5 1V11M8.5 1V11" stroke="#bbb" stroke-width=".6"/></svg>
<svg class="a" style="left:512px;top:338px;" width="12" height="12" viewBox="0 0 12 12"><rect width="12" height="12" fill="#ddd"/><path d="M1 1L6 6L1 11Z" fill="#19c0e8"/><path d="M1 1H11L6 6Z" fill="#e81ca0"/><path d="M11 1V11L6 6Z" fill="#f0e000"/><path d="M1 11H11L6 6Z" fill="#111"/></svg>
<div class="a" style="left:335px;top:354px;width:195px;height:20px;background:#474747;border-bottom:1px solid #2c2c2c;"></div>
<div class="a" style="left:336px;top:358px;width:13px;height:13px;background:#c8102e;border:1px solid #111;"></div>
<div class="a t" style="left:357px;top:360px;font-size:10px;line-height:10px;color:#cfcfcf;letter-spacing:-0.1px;">C=15 M=100 Y=100 K=0</div>
<svg class="a" style="left:497px;top:358px;" width="12" height="12" viewBox="0 0 12 12"><rect x="0" y="0" width="12" height="12" fill="#ccc"/><rect x="1" y="1" width="10" height="10" fill="#888"/><path d="M1 2.5H11M1 4.5H11M1 6.5H11M1 8.5H11M2.5 1V11M4.5 1V11M6.5 1V11M8.5 1V11" stroke="#bbb" stroke-width=".6"/></svg>
<svg class="a" style="left:512px;top:358px;" width="12" height="12" viewBox="0 0 12 12"><rect width="12" height="12" fill="#ddd"/><path d="M1 1L6 6L1 11Z" fill="#19c0e8"/><path d="M1 1H11L6 6Z" fill="#e81ca0"/><path d="M11 1V11L6 6Z" fill="#f0e000"/><path d="M1 11H11L6 6Z" fill="#111"/></svg>
<div class="a" style="left:530px;top:213px;width:11px;height:160px;background:#333333;"></div>
<svg class="a" style="left:531px;top:216px;" width="9" height="6" viewBox="0 0 9 6"><path d="M0 6H9L4.5 0Z" fill="#8c8c8c"/></svg>
<svg class="a" style="left:531px;top:364px;" width="9" height="6" viewBox="0 0 9 6"><path d="M0 0H9L4.5 6Z" fill="#8c8c8c"/></svg>
<div class="a" style="left:531px;top:230px;width:9px;height:67px;background:#8a8a8a;"></div>
<div class="a" style="left:335px;top:373px;width:207px;height:18px;background:#484848;border-top:1px solid #2c2c2c;"></div>
<div class="a" style="left:377px;top:374px;width:27px;height:16px;background:#333333;"></div>
<svg class="a" style="left:385px;top:376px;" width="12" height="12" viewBox="0 0 12 12"><rect width="12" height="12" fill="#bbb"/><rect x="2" y="2" width="3" height="3" fill="#666"/><rect x="7" y="2" width="3" height="3" fill="#eee"/><rect x="2" y="7" width="3" height="3" fill="#eee"/><rect x="7" y="7" width="3" height="3" fill="#666"/></svg>
<svg class="a" style="left:415px;top:376px;" width="12" height="12" viewBox="0 0 12 12"><rect x=".5" y=".5" width="11" height="11" fill="#777" stroke="#bbb"/></svg>
<svg class="a" style="left:445px;top:376px;" width="12" height="12" viewBox="0 0 12 12"><defs><linearGradient id="gg"><stop offset="0" stop-color="#222"/><stop offset="1" stop-color="#ddd"/></linearGradient></defs><rect x=".5" y=".5" width="11" height="11" fill="url(#gg)" stroke="#bbb"/></svg>
<svg class="a" style="left:475px;top:376px;" width="12" height="12" viewBox="0 0 12 12"><path d="M0 0H12V12H5L0 7Z" fill="#888"/><path d="M1 8L4 11V8Z" fill="#888"/></svg>
<svg class="a" style="left:504px;top:375px;" width="12" height="13" viewBox="0 0 12 13"><path d="M0 2.5H12M4 2.5V.5H8V2.5" fill="none" stroke="#8a8a8a"/><path d="M1.5 3.5H10.5L9.5 12.5H2.5Z" fill="none" stroke="#8a8a8a"/><path d="M4.5 5V11M6 5V11M7.5 5V11" stroke="#8a8a8a"/></svg>
<svg class="a" style="left:533px;top:380px;" width="9" height="9" viewBox="0 0 9 9"><g fill="#1e1e1e"><rect x="6" y="0" width="1.5" height="1.5"/><rect x="4" y="2" width="1.5" height="1.5"/><rect x="6" y="2" width="1.5" height="1.5"/><rect x="2" y="4" width="1.5" height="1.5"/><rect x="4" y="4" width="1.5" height="1.5"/><rect x="6" y="4" width="1.5" height="1.5"/><rect x="0" y="6" width="1.5" height="1.5"/><rect x="2" y="6" width="1.5" height="1.5"/><rect x="4" y="6" width="1.5" height="1.5"/><rect x="6" y="6" width="1.5" height="1.5"/></g></svg>
<div class="a" style="left:334px;top:391px;width:209px;height:181px;background:#484848;border:1px solid #1e1e1e;border-radius:4px 4px 0 0;"></div>
<div class="a" style="left:335px;top:393px;width:207px;height:17px;background:#2e2e2e;border-top:1px solid #404040;border-bottom:1px solid #222;"></div>
<div class="a" style="left:335px;top:393px;width:80px;height:17px;background:#2e2e2e;border-top:1px solid #404040;border-right:1px solid #262626;border-bottom:1px solid #222;"></div>
<div class="a t" style="left:342px;top:396px;font-size:10.5px;line-height:10.5px;color:#9a9a9a;font-weight:bold;letter-spacing:-0.3px;width:74px;overflow:hidden;">Zeichenformate</div>
<div class="a" style="left:415px;top:393px;width:88px;height:18px;background:#484848;border-top:1px solid #555;"></div>
<svg class="a" style="left:420px;top:396px;" width="6" height="11" viewBox="0 0 6 11"><path d="M.5 4.5L3 1.5L5.5 4.5M.5 6.5L3 9.5L5.5 6.5" fill="none" stroke="#d6d6d6" stroke-width="1.1"/></svg>
<div class="a t" style="left:428px;top:396px;font-size:10.5px;line-height:10.5px;color:#e8e8e8;font-weight:bold;letter-spacing:-0.3px;">Absatzformate</div>
<svg class="a" style="left:523px;top:398px;" width="16" height="9" viewBox="0 0 16 9"><path d="M0 2h4l-2 2.5z" fill="#d6d6d6"/><path d="M6 .5h10M6 2.5h10M6 4.5h10M6 6.5h10" stroke="#d6d6d6"/></svg>
<div class="a" style="left:335px;top:410px;width:207px;height:22px;background:#484848;border-bottom:1px solid #2c2c2c;"></div>
<div class="a t" style="left:337px;top:416px;font-size:10.5px;line-height:10.5px;color:#cfcfcf;letter-spacing:-0.1px;">[Einf. Abs.]+</div>
<svg class="a" style="left:528px;top:414px;" width="11" height="15" viewBox="0 0 11 15"><path d="M6 0L1 8h4l-2 7 7-9H6l2-6z" fill="#cfcfcf"/></svg>
<div class="a" style="left:335px;top:432px;width:195px;height:121px;background:#474747;"></div>
<div class="a" style="left:335px;top:433px;width:195px;height:20px;background:#4b5669;border-bottom:1px solid #2c2c2c;"></div>
<div class="a t" style="left:367px;top:438px;font-size:11px;line-height:11px;color:#f2f2f2;font-weight:bold;letter-spacing:-0.1px;">[Einf. Abs.]+</div>
<div class="a" style="left:335px;top:453px;width:195px;height:20px;background:#474747;border-bottom:1px solid #2c2c2c;"></div>
<div class="a t" style="left:367px;top:459px;font-size:10px;line-height:10px;color:#cfcfcf;letter-spacing:-0.3px;">Angebot</div>
<div class="a" style="left:530px;top:432px;width:11px;height:121px;background:#333333;"></div>
<svg class="a" style="left:531px;top:435px;" width="9" height="6" viewBox="0 0 9 6"><path d="M0 6H9L4.5 0Z" fill="#8c8c8c"/></svg>
<svg class="a" style="left:531px;top:544px;" width="9" height="6" viewBox="0 0 9 6"><path d="M0 0H9L4.5 6Z" fill="#8c8c8c"/></svg>
<div class="a" style="left:335px;top:552px;width:207px;height:19px;background:#484848;border-top:1px solid #2c2c2c;"></div>
<svg class="a" style="left:414px;top:556px;" width="13" height="11" viewBox="0 0 13 11"><path d="M0 1H5L6 2.5H13V11H0Z" fill="#cfcfcf"/></svg>
<div class="a t" style="left:442px;top:556px;font-size:13px;line-height:13px;color:#cfcfcf;font-weight:bold;">¶</div>
<svg class="a" style="left:451px;top:557px;" width="8" height="8" viewBox="0 0 8 8"><path d="M1 7L7 1M4 1L7 1L7 4" fill="none" stroke="#cfcfcf"/></svg>
<svg class="a" style="left:475px;top:556px;" width="12" height="12" viewBox="0 0 12 12"><path d="M0 0H12V12H5L0 7Z" fill="#d0d0d0"/><path d="M1 8L4 11V8Z" fill="#d0d0d0"/></svg>
<svg class="a" style="left:504px;top:555px;" width="12" height="13" viewBox="0 0 12 13"><path d="M0 2.5H12M4 2.5V.5H8V2.5" fill="none" stroke="#8a8a8a"/><path d="M1.5 3.5H10.5L9.5 12.5H2.5Z" fill="none" stroke="#8a8a8a"/><path d="M4.5 5V11M6 5V11M7.5 5V11" stroke="#8a8a8a"/></svg>
<svg class="a" style="left:533px;top:560px;" width="9" height="9" viewBox="0 0 9 9"><g fill="#1e1e1e"><rect x="6" y="0" width="1.5" height="1.5"/><rect x="4" y="2" width="1.5" height="1.5"/><rect x="6" y="2" width="1.5" height="1.5"/><rect x="2" y="4" width="1.5" height="1.5"/><rect x="4" y="4" width="1.5" height="1.5"/><rect x="6" y="4" width="1.5" height="1.5"/><rect x="0" y="6" width="1.5" height="1.5"/><rect x="2" y="6" width="1.5" height="1.5"/><rect x="4" y="6" width="1.5" height="1.5"/><rect x="6" y="6" width="1.5" height="1.5"/></g></svg>
<div class="a" style="left:334px;top:571px;width:209px;height:213px;background:#484848;border:1px solid #1e1e1e;border-radius:4px 4px 0 0;"></div>
<div class="a" style="left:335px;top:573px;width:207px;height:17px;background:#2e2e2e;border-top:1px solid #404040;border-bottom:1px solid #222;"></div>
<div class="a" style="left:335px;top:573px;width:66px;height:17px;background:#2e2e2e;border-top:1px solid #404040;border-right:1px solid #262626;border-bottom:1px solid #222;"></div>
<div class="a t" style="left:342px;top:576px;font-size:10.5px;line-height:10.5px;color:#9a9a9a;font-weight:bold;letter-spacing:-0.3px;width:60px;overflow:hidden;">Ausrichten</div>
<div class="a" style="left:401px;top:573px;width:64px;height:18px;background:#484848;border-top:1px solid #555;"></div>
<div class="a t" style="left:409px;top:576px;font-size:10.5px;line-height:10.5px;color:#e8e8e8;font-weight:bold;letter-spacing:-0.3px;">Pathfinder</div>
<div class="a t" style="left:339px;top:596px;font-size:10px;line-height:10px;color:#c8c8c8;">Pfade:</div>
<svg class="a" style="left:344px;top:611px;" width="15" height="15" viewBox="0 0 15 15"><path d="M1.5 13.5Q3 4 13 1.5" fill="none" stroke="#ccc" stroke-dasharray="1.2 1.2"/><rect x="0" y="12" width="3" height="3" fill="#ddd"/><rect x="11.5" y="0" width="3" height="3" fill="#ddd"/></svg>
<svg class="a" style="left:385px;top:611px;" width="18" height="14" viewBox="0 0 18 14"><ellipse cx="8" cy="8" rx="7" ry="5" fill="none" stroke="#ccc" stroke-width="1.2"/><path d="M9 7L15 1M12 1H16V4" fill="none" stroke="#ddd" stroke-width="1.2"/></svg>
<svg class="a" style="left:427px;top:611px;" width="18" height="14" viewBox="0 0 18 14"><ellipse cx="9" cy="7.5" rx="8" ry="5.5" fill="none" stroke="#ccc" stroke-width="1.2"/><rect x="7" y="1" width="3" height="3" fill="#ddd"/><rect x="14.5" y="5.5" width="3" height="3" fill="#ddd"/></svg>
<svg class="a" style="left:469px;top:611px;" width="17" height="15" viewBox="0 0 17 15"><path d="M4 2H1V13H4M11 2H15V13H11" fill="none" stroke="#ccc" stroke-width="1.2"/><rect x="7" y="0" width="3" height="3" fill="#ddd"/><rect x="7" y="11" width="3" height="3" fill="#ddd"/><path d="M8.5 3V11" stroke="#ccc"/></svg>
<div class="a" style="left:338px;top:632px;width:198px;height:1px;background:#2c2c2c;"></div>
<div class="a" style="left:338px;top:633px;width:198px;height:1px;background:#575757;"></div>
<div class="a t" style="left:339px;top:636px;font-size:10px;line-height:10px;color:#c8c8c8;">Pathfinder:</div>
<svg class="a" style="left:345px;top:652px;" width="14" height="14" viewBox="0 0 14 14"><rect x=".5" y=".5" width="9" height="9" fill="#999" stroke="#ddd"/><rect x="4.5" y="4.5" width="9" height="9" fill="#999" stroke="#ddd"/><rect x="1" y="1" width="8" height="8" fill="#999"/></svg>
<svg class="a" style="left:386px;top:652px;" width="14" height="14" viewBox="0 0 14 14"><rect x=".5" y=".5" width="9" height="9" fill="#999" stroke="#ddd"/><rect x="4.5" y="4.5" width="9" height="9" fill="#535353" stroke="#ddd"/></svg>
<svg class="a" style="left:428px;top:652px;" width="14" height="14" viewBox="0 0 14 14"><rect x=".5" y=".5" width="9" height="9" fill="none" stroke="#aaa"/><rect x="4.5" y="4.5" width="9" height="9" fill="none" stroke="#aaa"/><rect x="4.5" y="4.5" width="5" height="5" fill="#ddd"/></svg>
<svg class="a" style="left:470px;top:652px;" width="14" height="14" viewBox="0 0 14 14"><rect x=".5" y=".5" width="9" height="9" fill="#999" stroke="#ddd"/><rect x="4.5" y="4.5" width="9" height="9" fill="#999" stroke="#ddd"/><rect x="4.5" y="4.5" width="5" height="5" fill="#333"/></svg>
<svg class="a" style="left:512px;top:652px;" width="14" height="14" viewBox="0 0 14 14"><rect x=".5" y=".5" width="9" height="9" fill="none" stroke="#aaa"/><path d="M10 4.5H13.5V13.5H4.5V10H10Z" fill="#ccc" stroke="#ddd"/></svg>
<div class="a" style="left:338px;top:672px;width:198px;height:1px;background:#2c2c2c;"></div>
<div class="a" style="left:338px;top:673px;width:198px;height:1px;background:#575757;"></div>
<div class="a t" style="left:339px;top:676px;font-size:10px;line-height:10px;color:#c8c8c8;">Form konvertieren:</div>
<svg class="a" style="left:345px;top:692px;" width="15" height="13" viewBox="0 0 15 13"><rect x=".5" y=".5" width="14" height="12" fill="none" stroke="#ccc"/></svg>
<svg class="a" style="left:386px;top:692px;" width="15" height="13" viewBox="0 0 15 13"><rect x=".5" y=".5" width="14" height="12" rx="3" fill="none" stroke="#ccc"/></svg>
<svg class="a" style="left:428px;top:692px;" width="15" height="13" viewBox="0 0 15 13"><path d="M4 .5H11L14.5 4V9L11 12.5H4L.5 9V4Z" fill="none" stroke="#ccc"/></svg>
<svg class="a" style="left:470px;top:692px;" width="15" height="13" viewBox="0 0 15 13"><path d="M3 .5H12A2.5 2.5 0 0 0 14.5 3V10A2.5 2.5 0 0 0 12 12.5H3A2.5 2.5 0 0 0 .5 10V3A2.5 2.5 0 0 0 3 .5Z" fill="none" stroke="#ccc"/></svg>
<svg class="a" style="left:511px;top:692px;" width="17" height="13" viewBox="0 0 17 13"><ellipse cx="8.5" cy="6.5" rx="8" ry="6" fill="none" stroke="#ccc"/></svg>
<svg class="a" style="left:345px;top:716px;" width="15" height="13" viewBox="0 0 15 13"><path d="M7.5 .5L14.5 12.5H.5Z" fill="none" stroke="#ccc"/></svg>
<svg class="a" style="left:386px;top:716px;" width="15" height="13" viewBox="0 0 15 13"><path d="M4 .5H11L14.5 6.5L11 12.5H4L.5 6.5Z" fill="none" stroke="#ccc"/></svg>
<svg class="a" style="left:429px;top:716px;" width="14" height="13" viewBox="0 0 14 13"><path d="M.5 12.5L13.5 .5" stroke="#ccc"/></svg>
<svg class="a" style="left:470px;top:716px;" width="14" height="14" viewBox="0 0 14 14"><path d="M7 0V14M0 7H14" stroke="#ccc"/></svg>
<div class="a" style="left:338px;top:736px;width:198px;height:1px;background:#2c2c2c;"></div>
<div class="a" style="left:338px;top:737px;width:198px;height:1px;background:#575757;"></div>
<div class="a t" style="left:339px;top:740px;font-size:10px;line-height:10px;color:#c8c8c8;">Punkt konvertieren:</div>
<svg class="a" style="left:345px;top:756px;" width="14" height="15" viewBox="0 0 14 15"><rect x="0" y="1" width="4" height="4" fill="#ccc"/><path d="M2 5V14M4 3H13" stroke="#ccc"/></svg>
<svg class="a" style="left:386px;top:756px;" width="16" height="15" viewBox="0 0 16 15"><rect x="0" y="1" width="4" height="4" fill="#ccc"/><rect x="9" y="1" width="4" height="4" fill="#ccc"/><rect x="0.5" y="11" width="3" height="3" fill="#ccc"/><path d="M2 5V11M4 3H9M13 3H16" stroke="#ccc"/></svg>
<svg class="a" style="left:427px;top:755px;" width="16" height="16" viewBox="0 0 16 16"><rect x="0" y="0" width="3" height="3" fill="#ccc"/><rect x="5" y="5" width="4" height="4" fill="#ccc"/><rect x="12" y="12" width="3" height="3" fill="#ccc"/><path d="M2 2L13 13M7 9Q6 12 8 15" fill="none" stroke="#ccc"/></svg>
<svg class="a" style="left:469px;top:755px;" width="16" height="16" viewBox="0 0 16 16"><rect x="11" y="1" width="3" height="3" fill="#ccc"/><rect x="5" y="6" width="4" height="4" fill="#ccc"/><rect x="0" y="11" width="3" height="3" fill="#ccc"/><path d="M3 13Q6 5 16 3" fill="none" stroke="#ccc"/></svg>
<div class="a" style="left:335px;top:776px;width:207px;height:1px;background:#2c2c2c;"></div>
<div class="a" style="left:429px;top:778px;width:1px;height:4px;background:#1a1a1a;"></div>
<div class="a" style="left:431px;top:778px;width:1px;height:4px;background:#1a1a1a;"></div>
<div class="a" style="left:433px;top:778px;width:1px;height:4px;background:#1a1a1a;"></div>
<div class="a" style="left:435px;top:778px;width:1px;height:4px;background:#1a1a1a;"></div>
<div class="a" style="left:437px;top:778px;width:1px;height:4px;background:#1a1a1a;"></div>
<div class="a" style="left:439px;top:778px;width:1px;height:4px;background:#1a1a1a;"></div>
<div class="a" style="left:441px;top:778px;width:1px;height:4px;background:#1a1a1a;"></div>
<div class="a" style="left:443px;top:778px;width:1px;height:4px;background:#1a1a1a;"></div>
<div class="a" style="left:445px;top:778px;width:1px;height:4px;background:#1a1a1a;"></div>
<div class="a" style="left:447px;top:778px;width:1px;height:4px;background:#1a1a1a;"></div>
<div class="a" style="left:658px;top:524px;width:209px;height:204px;background:#484848;border:1px solid #1e1e1e;border-radius:4px 4px 0 0;"></div>
<div class="a" style="left:659px;top:525px;width:207px;height:13px;background:#2e2e2e;border-radius:3px 3px 0 0;border-top:1px solid #424242;border-bottom:1px solid #222;"></div>
<svg class="a" style="left:839px;top:528px;" width="8" height="7" viewBox="0 0 8 7"><path d="M4 0V7L0 3.5ZM8 0V7L4 3.5Z" fill="#cfcfcf"/></svg>
<svg class="a" style="left:854px;top:527px;" width="8" height="8" viewBox="0 0 8 8"><path d="M1 1L7 7M7 1L1 7" stroke="#d8d8d8" stroke-width="1.5"/></svg>
<div class="a" style="left:659px;top:538px;width:207px;height:17px;background:#2e2e2e;border-top:1px solid #404040;border-bottom:1px solid #222;"></div>
<div class="a" style="left:659px;top:538px;width:57px;height:18px;background:#484848;border-top:1px solid #555;"></div>
<svg class="a" style="left:664px;top:541px;" width="6" height="11" viewBox="0 0 6 11"><path d="M.5 4.5L3 1.5L5.5 4.5M.5 6.5L3 9.5L5.5 6.5" fill="none" stroke="#d6d6d6" stroke-width="1.1"/></svg>
<div class="a t" style="left:672px;top:541px;font-size:10.5px;line-height:10.5px;color:#e8e8e8;font-weight:bold;letter-spacing:-0.3px;">Zeichen</div>
<svg class="a" style="left:847px;top:543px;" width="16" height="9" viewBox="0 0 16 9"><path d="M0 2h4l-2 2.5z" fill="#d6d6d6"/><path d="M6 .5h10M6 2.5h10M6 4.5h10M6 6.5h10" stroke="#d6d6d6"/></svg>
<div class="a" style="left:665px;top:563px;width:182px;height:15px;background:#a9a9a9;border:1px solid #2a2a2a;"></div>
<svg class="a" style="left:669px;top:565px;" width="16" height="12" viewBox="0 0 16 12"><circle cx="9" cy="5" r="4" fill="none" stroke="#333" stroke-width="1.2"/><path d="M6 8L1 12" stroke="#333" stroke-width="1.4"/><path d="M12 10h4l-2 2z" fill="#333"/></svg>
<div class="a t" style="left:687px;top:566px;font-size:10px;line-height:10px;color:#1a1a1a;letter-spacing:-0.2px;">Merriweather</div>
<div class="a" style="left:846px;top:563px;width:14px;height:15px;background:#434343;border:1px solid #2a2a2a;"></div>
<svg class="a" style="left:846px;top:563px;" width="14" height="15" viewBox="0 0 14 15"><path d="M3.0 5.0H11.0L7.0 10.0Z" fill="#e8e8e8"/></svg>
<div class="a" style="left:665px;top:584px;width:182px;height:15px;background:#a9a9a9;border:1px solid #2a2a2a;"></div>
<div class="a t" style="left:668px;top:587px;font-size:10px;line-height:10px;color:#1a1a1a;letter-spacing:-0.1px;">Regular</div>
<div class="a" style="left:846px;top:584px;width:14px;height:15px;background:#434343;border:1px solid #2a2a2a;"></div>
<svg class="a" style="left:846px;top:584px;" width="14" height="15" viewBox="0 0 14 15"><path d="M3.0 5.0H11.0L7.0 10.0Z" fill="#e8e8e8"/></svg>
<div class="a" style="left:663px;top:605px;width:198px;height:1px;background:#2c2c2c;"></div>
<div class="a" style="left:663px;top:606px;width:198px;height:1px;background:#575757;"></div>
<svg class="a" style="left:663px;top:611px;" width="19" height="17" viewBox="0 0 19 17"><text x="0" y="15" font-family="Liberation Serif" font-size="10" fill="#d2d2d2">T</text><text x="5" y="15" font-family="Liberation Serif" font-size="17" fill="#d2d2d2">T</text></svg>
<svg class="a" style="left:761px;top:609px;" width="19" height="17" viewBox="0 0 19 17"><text x="7" y="8" font-family="Liberation Sans" font-size="8" fill="#d2d2d2">A</text><text x="7" y="17" font-family="Liberation Sans" font-size="8" fill="#d2d2d2">A</text><path d="M3 8V17M1 10L3 8L5 10M1 15L3 17L5 15" fill="none" stroke="#d2d2d2"/><path d="M7 9H15" stroke="#d2d2d2"/></svg>
<div class="a" style="left:683px;top:611px;width:14px;height:15px;background:#434343;border:1px solid #222;"></div>
<div class="a" style="left:684px;top:618px;width:12px;height:1px;background:#262626;"></div>
<svg class="a" style="left:683px;top:611px;" width="14" height="15" viewBox="0 0 14 15"><path d="M3.5 6.0H10.5L7.0 2.5Z" fill="#e8e8e8"/><path d="M3.5 9.0H10.5L7.0 12.5Z" fill="#e8e8e8"/></svg>
<div class="a" style="left:698px;top:611px;width:44px;height:15px;background:#a9a9a9;border:1px solid #2a2a2a;"></div>
<div class="a t" style="left:701px;top:614px;font-size:10px;line-height:10px;color:#161616;letter-spacing:-0.3px;">32,6 Pt</div>
<div class="a" style="left:741px;top:611px;width:14px;height:15px;background:#434343;border:1px solid #2a2a2a;"></div>
<svg class="a" style="left:741px;top:611px;" width="14" height="15" viewBox="0 0 14 15"><path d="M3.0 5.0H11.0L7.0 10.0Z" fill="#e8e8e8"/></svg>
<div class="a" style="left:783px;top:611px;width:14px;height:15px;background:#434343;border:1px solid #222;"></div>
<div class="a" style="left:784px;top:618px;width:12px;height:1px;background:#262626;"></div>
<svg class="a" style="left:783px;top:611px;" width="14" height="15" viewBox="0 0 14 15"><path d="M3.5 6.0H10.5L7.0 2.5Z" fill="#e8e8e8"/><path d="M3.5 9.0H10.5L7.0 12.5Z" fill="#e8e8e8"/></svg>
<div class="a" style="left:798px;top:611px;width:49px;height:15px;background:#a9a9a9;border:1px solid #2a2a2a;"></div>
<div class="a t" style="left:801px;top:614px;font-size:10px;line-height:10px;color:#161616;letter-spacing:-0.3px;">33 Pt</div>
<div class="a" style="left:846px;top:611px;width:14px;height:15px;background:#434343;border:1px solid #2a2a2a;"></div>
<svg class="a" style="left:846px;top:611px;" width="14" height="15" viewBox="0 0 14 15"><path d="M3.0 5.0H11.0L7.0 10.0Z" fill="#e8e8e8"/></svg>
<svg class="a" style="left:662px;top:631px;" width="19" height="17" viewBox="0 0 19 17"><text x="0" y="12" font-family="Liberation Sans" font-size="13" fill="#d2d2d2" letter-spacing="-2">VA</text><path d="M9 16H17M11 14L9 16L11 18" fill="none" stroke="#d2d2d2"/></svg>
<svg class="a" style="left:762px;top:631px;" width="19" height="17" viewBox="0 0 19 17"><rect x="0" y="0" width="18" height="11" fill="#888"/><text x="1" y="10" font-family="Liberation Sans" font-weight="bold" font-size="11" fill="#eee" letter-spacing="-1">VA</text><path d="M1 14.5H17M3 12.5L1 14.5L3 16.5M15 12.5L17 14.5L15 16.5" fill="none" stroke="#d2d2d2"/></svg>
<div class="a" style="left:683px;top:632px;width:14px;height:15px;background:#434343;border:1px solid #222;"></div>
<div class="a" style="left:684px;top:639px;width:12px;height:1px;background:#262626;"></div>
<svg class="a" style="left:683px;top:632px;" width="14" height="15" viewBox="0 0 14 15"><path d="M3.5 6.0H10.5L7.0 2.5Z" fill="#8a8a8a"/><path d="M3.5 9.0H10.5L7.0 12.5Z" fill="#8a8a8a"/></svg>
<div class="a" style="left:698px;top:632px;width:44px;height:15px;background:#a9a9a9;border:1px solid #2a2a2a;"></div>
<div class="a t" style="left:701px;top:635px;font-size:10px;line-height:10px;color:#161616;letter-spacing:-0.3px;">Metrisch</div>
<div class="a" style="left:741px;top:632px;width:14px;height:15px;background:#434343;border:1px solid #2a2a2a;"></div>
<svg class="a" style="left:741px;top:632px;" width="14" height="15" viewBox="0 0 14 15"><path d="M3.0 5.0H11.0L7.0 10.0Z" fill="#e8e8e8"/></svg>
<div class="a" style="left:783px;top:632px;width:14px;height:15px;background:#434343;border:1px solid #222;"></div>
<div class="a" style="left:784px;top:639px;width:12px;height:1px;background:#262626;"></div>
<svg class="a" style="left:783px;top:632px;" width="14" height="15" viewBox="0 0 14 15"><path d="M3.5 6.0H10.5L7.0 2.5Z" fill="#e8e8e8"/><path d="M3.5 9.0H10.5L7.0 12.5Z" fill="#e8e8e8"/></svg>
<div class="a" style="left:798px;top:632px;width:49px;height:15px;background:#a9a9a9;border:1px solid #2a2a2a;"></div>
<div class="a t" style="left:801px;top:635px;font-size:10px;line-height:10px;color:#161616;letter-spacing:-0.3px;">0</div>
<div class="a" style="left:846px;top:632px;width:14px;height:15px;background:#434343;border:1px solid #2a2a2a;"></div>
<svg class="a" style="left:846px;top:632px;" width="14" height="15" viewBox="0 0 14 15"><path d="M3.0 5.0H11.0L7.0 10.0Z" fill="#e8e8e8"/></svg>
<div class="a" style="left:663px;top:653px;width:198px;height:1px;background:#2c2c2c;"></div>
<div class="a" style="left:663px;top:654px;width:198px;height:1px;background:#575757;"></div>
<svg class="a" style="left:662px;top:658px;" width="19" height="17" viewBox="0 0 19 17"><text x="4" y="15" font-family="Liberation Serif" font-size="18" fill="#d2d2d2">T</text><path d="M2 2V15M0 4L2 2L4 4M0 13L2 15L4 13" fill="none" stroke="#d2d2d2"/></svg>
<svg class="a" style="left:762px;top:657px;" width="19" height="17" viewBox="0 0 19 17"><text x="2" y="13" font-family="Liberation Serif" font-weight="bold" font-size="17" fill="#d2d2d2">T</text><path d="M0 16H18M2 14L0 16L2 18M16 14L18 16L16 18" fill="none" stroke="#d2d2d2"/></svg>
<div class="a" style="left:683px;top:659px;width:14px;height:15px;background:#434343;border:1px solid #222;"></div>
<div class="a" style="left:684px;top:666px;width:12px;height:1px;background:#262626;"></div>
<svg class="a" style="left:683px;top:659px;" width="14" height="15" viewBox="0 0 14 15"><path d="M3.5 6.0H10.5L7.0 2.5Z" fill="#e8e8e8"/><path d="M3.5 9.0H10.5L7.0 12.5Z" fill="#e8e8e8"/></svg>
<div class="a" style="left:698px;top:659px;width:44px;height:15px;background:#a9a9a9;border:1px solid #2a2a2a;"></div>
<div class="a t" style="left:701px;top:662px;font-size:10px;line-height:10px;color:#161616;letter-spacing:-0.3px;">100 %</div>
<div class="a" style="left:741px;top:659px;width:14px;height:15px;background:#434343;border:1px solid #2a2a2a;"></div>
<svg class="a" style="left:741px;top:659px;" width="14" height="15" viewBox="0 0 14 15"><path d="M3.0 5.0H11.0L7.0 10.0Z" fill="#e8e8e8"/></svg>
<div class="a" style="left:783px;top:659px;width:14px;height:15px;background:#434343;border:1px solid #222;"></div>
<div class="a" style="left:784px;top:666px;width:12px;height:1px;background:#262626;"></div>
<svg class="a" style="left:783px;top:659px;" width="14" height="15" viewBox="0 0 14 15"><path d="M3.5 6.0H10.5L7.0 2.5Z" fill="#e8e8e8"/><path d="M3.5 9.0H10.5L7.0 12.5Z" fill="#e8e8e8"/></svg>
<div class="a" style="left:798px;top:659px;width:49px;height:15px;background:#a9a9a9;border:1px solid #2a2a2a;"></div>
<div class="a t" style="left:801px;top:662px;font-size:10px;line-height:10px;color:#161616;letter-spacing:-0.3px;">100 %</div>
<div class="a" style="left:846px;top:659px;width:14px;height:15px;background:#434343;border:1px solid #2a2a2a;"></div>
<svg class="a" style="left:846px;top:659px;" width="14" height="15" viewBox="0 0 14 15"><path d="M3.0 5.0H11.0L7.0 10.0Z" fill="#e8e8e8"/></svg>
<svg class="a" style="left:662px;top:679px;" width="19" height="17" viewBox="0 0 19 17"><text x="0" y="12" font-family="Liberation Sans" font-size="12" fill="#d2d2d2">A</text><text x="9" y="8" font-family="Liberation Sans" font-size="8" fill="#d2d2d2">a</text><path d="M0 14H9M12 17V10M10 12L12 10L14 12" fill="none" stroke="#d2d2d2"/></svg>
<div class="a t" style="left:766px;top:677px;font-size:20px;line-height:20px;color:#d2d2d2;font-family:'Liberation Serif',serif;font-style:italic;">T</div>
<div class="a" style="left:683px;top:680px;width:14px;height:15px;background:#434343;border:1px solid #222;"></div>
<div class="a" style="left:684px;top:687px;width:12px;height:1px;background:#262626;"></div>
<svg class="a" style="left:683px;top:680px;" width="14" height="15" viewBox="0 0 14 15"><path d="M3.5 6.0H10.5L7.0 2.5Z" fill="#e8e8e8"/><path d="M3.5 9.0H10.5L7.0 12.5Z" fill="#e8e8e8"/></svg>
<div class="a" style="left:698px;top:680px;width:57px;height:15px;background:#a9a9a9;border:1px solid #2a2a2a;"></div>
<div class="a t" style="left:701px;top:683px;font-size:10px;line-height:10px;color:#161616;letter-spacing:-0.3px;">0 Pt</div>
<div class="a" style="left:783px;top:680px;width:14px;height:15px;background:#434343;border:1px solid #222;"></div>
<div class="a" style="left:784px;top:687px;width:12px;height:1px;background:#262626;"></div>
<svg class="a" style="left:783px;top:680px;" width="14" height="15" viewBox="0 0 14 15"><path d="M3.5 6.0H10.5L7.0 2.5Z" fill="#e8e8e8"/><path d="M3.5 9.0H10.5L7.0 12.5Z" fill="#e8e8e8"/></svg>
<div class="a" style="left:798px;top:680px;width:62px;height:15px;background:#a9a9a9;border:1px solid #2a2a2a;"></div>
<div class="a t" style="left:801px;top:683px;font-size:10px;line-height:10px;color:#161616;letter-spacing:-0.3px;">0°</div>
<div class="a" style="left:663px;top:701px;width:198px;height:1px;background:#2c2c2c;"></div>
<div class="a" style="left:663px;top:702px;width:198px;height:1px;background:#575757;"></div>
<div class="a t" style="left:668px;top:710px;font-size:10px;line-height:10px;color:#c8c8c8;">Sprache:</div>
<div class="a" style="left:710px;top:707px;width:137px;height:15px;background:#6a6a6a;border:1px solid #2a2a2a;"></div>
<div class="a t" style="left:713px;top:710px;font-size:10px;line-height:10px;color:#e0e0e0;letter-spacing:-0.4px;">Deutsch: 2006 Rechtschreibr...</div>
<div class="a" style="left:846px;top:707px;width:14px;height:15px;background:#575757;border:1px solid #2a2a2a;"></div>
<svg class="a" style="left:846px;top:707px;" width="14" height="15" viewBox="0 0 14 15"><path d="M3.0 5.0H11.0L7.0 10.0Z" fill="#e8e8e8"/></svg>
<div class="a" style="left:867px;top:524px;width:209px;height:131px;background:#484848;border:1px solid #1e1e1e;border-radius:4px 4px 0 0;"></div>
<div class="a" style="left:868px;top:525px;width:207px;height:13px;background:#2e2e2e;border-radius:3px 3px 0 0;border-top:1px solid #424242;border-bottom:1px solid #222;"></div>
<svg class="a" style="left:1048px;top:528px;" width="8" height="7" viewBox="0 0 8 7"><path d="M4 0V7L0 3.5ZM8 0V7L4 3.5Z" fill="#cfcfcf"/></svg>
<svg class="a" style="left:1063px;top:527px;" width="8" height="8" viewBox="0 0 8 8"><path d="M1 1L7 7M7 1L1 7" stroke="#d8d8d8" stroke-width="1.5"/></svg>
<div class="a" style="left:868px;top:538px;width:207px;height:17px;background:#2e2e2e;border-top:1px solid #404040;border-bottom:1px solid #222;"></div>
<div class="a" style="left:868px;top:538px;width:86px;height:18px;background:#484848;border-top:1px solid #555;"></div>
<div class="a t" style="left:876px;top:541px;font-size:10.5px;line-height:10.5px;color:#e8e8e8;font-weight:bold;letter-spacing:-0.3px;">Transformieren</div>
<svg class="a" style="left:1056px;top:543px;" width="16" height="9" viewBox="0 0 16 9"><path d="M0 2h4l-2 2.5z" fill="#d6d6d6"/><path d="M6 .5h10M6 2.5h10M6 4.5h10M6 6.5h10" stroke="#d6d6d6"/></svg>
<svg class="a" style="left:873px;top:570px;" width="20" height="21" viewBox="0 0 20 21"><g fill="none" stroke="#d6d6d6"><rect x="1.5" y="1.5" width="4" height="4"/><rect x="8.5" y="1.5" width="4" height="4"/><rect x="15.5" y="1.5" width="4" height="4"/><rect x="1.5" y="8.5" width="4" height="4"/><rect x="8.5" y="8.5" width="4" height="4"/><rect x="15.5" y="8.5" width="4" height="4"/><rect x="8.5" y="15.5" width="4" height="4"/><rect x="15.5" y="15.5" width="4" height="4"/><path d="M5.5 3.5h3M12.5 3.5h3M5.5 10.5h3M12.5 10.5h3M5.5 17.5h3M12.5 17.5h3M3.5 5.5v3M10.5 5.5v3M17.5 5.5v3M3.5 12.5v3M10.5 12.5v3M17.5 12.5v3"/></g><rect x="1" y="15" width="5" height="5" fill="#d6d6d6"/></svg>
<div class="a t" style="left:903px;top:567px;font-size:10px;line-height:10px;color:#d0d0d0;">X:</div>
<div class="a t" style="left:903px;top:588px;font-size:10px;line-height:10px;color:#d0d0d0;">Y:</div>
<div class="a t" style="left:993px;top:567px;font-size:10px;line-height:10px;color:#d0d0d0;">B:</div>
<div class="a t" style="left:993px;top:588px;font-size:10px;line-height:10px;color:#d0d0d0;">H:</div>
<div class="a" style="left:916px;top:563px;width:63px;height:15px;background:#a9a9a9;border:1px solid #2a2a2a;"></div>
<div class="a t" style="left:919px;top:566px;font-size:10px;line-height:10px;color:#161616;letter-spacing:-0.3px;">25 mm</div>
<div class="a" style="left:1006px;top:563px;width:63px;height:15px;background:#a9a9a9;border:1px solid #2a2a2a;"></div>
<div class="a t" style="left:1009px;top:566px;font-size:10px;line-height:10px;color:#161616;letter-spacing:-0.3px;">185 mm</div>
<div class="a" style="left:916px;top:584px;width:63px;height:15px;background:#a9a9a9;border:1px solid #2a2a2a;"></div>
<div class="a t" style="left:919px;top:587px;font-size:10px;line-height:10px;color:#161616;letter-spacing:-0.3px;">125 mm</div>
<div class="a" style="left:1006px;top:584px;width:63px;height:15px;background:#a9a9a9;border:1px solid #2a2a2a;"></div>
<div class="a t" style="left:1009px;top:587px;font-size:10px;line-height:10px;color:#161616;letter-spacing:-0.3px;">16 mm</div>
<div class="a" style="left:872px;top:605px;width:198px;height:1px;background:#2c2c2c;"></div>
<div class="a" style="left:872px;top:606px;width:198px;height:1px;background:#575757;"></div>
<div class="a" style="left:873px;top:618px;width:19px;height:24px;background:#333333;"></div>
<svg class="a" style="left:877px;top:621px;" width="12" height="18" viewBox="0 0 12 18"><g fill="none" stroke="#e0e0e0" stroke-width="1.8"><path d="M2.5 8.5V5.5a3.5 3.5 0 0 1 7 0V8.5M2.5 9.5V12.5a3.5 3.5 0 0 0 7 0V9.5"/></g><rect x="5" y="5" width="2" height="8" rx="1" fill="#e0e0e0"/></svg>
<svg class="a" style="left:897px;top:611px;" width="16" height="16" viewBox="0 0 16 16"><path d="M.5 14V.5H14" fill="none" stroke="#e0e0e0" stroke-width="1.2"/><path d="M14.5 1V15M1 14.5H15" stroke="#e0e0e0" stroke-width="1.2" stroke-dasharray="1.2 1.2"/><path d="M2 7h9M8 4l3 3-3 3" fill="none" stroke="#e8e8e8" stroke-width="1.8"/></svg>
<svg class="a" style="left:897px;top:632px;" width="16" height="16" viewBox="0 0 16 16"><path d="M.5 14V.5H14" fill="none" stroke="#e0e0e0" stroke-width="1.2"/><path d="M14.5 1V15M1 14.5H15" stroke="#e0e0e0" stroke-width="1.2" stroke-dasharray="1.2 1.2"/><path d="M7.5 2v9M4.5 8l3 3 3-3" fill="none" stroke="#e8e8e8" stroke-width="1.8"/></svg>
<div class="a" style="left:916px;top:611px;width:49px;height:15px;background:#a9a9a9;border:1px solid #2a2a2a;"></div>
<div class="a t" style="left:919px;top:614px;font-size:10px;line-height:10px;color:#161616;letter-spacing:-0.3px;">100 %</div>
<div class="a" style="left:964px;top:611px;width:14px;height:15px;background:#434343;border:1px solid #2a2a2a;"></div>
<svg class="a" style="left:964px;top:611px;" width="14" height="15" viewBox="0 0 14 15"><path d="M3.0 5.0H11.0L7.0 10.0Z" fill="#e8e8e8"/></svg>
<div class="a" style="left:916px;top:632px;width:49px;height:15px;background:#a9a9a9;border:1px solid #2a2a2a;"></div>
<div class="a t" style="left:919px;top:635px;font-size:10px;line-height:10px;color:#161616;letter-spacing:-0.3px;">100 %</div>
<div class="a" style="left:964px;top:632px;width:14px;height:15px;background:#434343;border:1px solid #2a2a2a;"></div>
<svg class="a" style="left:964px;top:632px;" width="14" height="15" viewBox="0 0 14 15"><path d="M3.0 5.0H11.0L7.0 10.0Z" fill="#e8e8e8"/></svg>
<svg class="a" style="left:989px;top:613px;" width="12" height="10" viewBox="0 0 12 10"><path d="M1 9H11M1 9L8 1" fill="none" stroke="#d8d8d8" stroke-width="1.1"/><path d="M6 4a5 5 0 0 1 2.5 5" fill="none" stroke="#d8d8d8"/></svg>
<svg class="a" style="left:988px;top:634px;" width="13" height="11" viewBox="0 0 13 11"><path d="M4 1H12L9 10H1Z" fill="none" stroke="#d8d8d8" stroke-width="1.1"/></svg>
<div class="a" style="left:1006px;top:611px;width:52px;height:15px;background:#a9a9a9;border:1px solid #2a2a2a;"></div>
<div class="a t" style="left:1009px;top:614px;font-size:10px;line-height:10px;color:#161616;letter-spacing:-0.3px;">0°</div>
<div class="a" style="left:1057px;top:611px;width:14px;height:15px;background:#434343;border:1px solid #2a2a2a;"></div>
<svg class="a" style="left:1057px;top:611px;" width="14" height="15" viewBox="0 0 14 15"><path d="M3.0 5.0H11.0L7.0 10.0Z" fill="#e8e8e8"/></svg>
<div class="a" style="left:1006px;top:632px;width:52px;height:15px;background:#a9a9a9;border:1px solid #2a2a2a;"></div>
<div class="a t" style="left:1009px;top:635px;font-size:10px;line-height:10px;color:#161616;letter-spacing:-0.3px;">0°</div>
<div class="a" style="left:1057px;top:632px;width:14px;height:15px;background:#434343;border:1px solid #2a2a2a;"></div>
<svg class="a" style="left:1057px;top:632px;" width="14" height="15" viewBox="0 0 14 15"><path d="M3.0 5.0H11.0L7.0 10.0Z" fill="#e8e8e8"/></svg>
<div class="a" style="left:1309px;top:134px;width:209px;height:259px;background:#484848;border:1px solid #1e1e1e;border-radius:4px 4px 0 0;"></div>
<div class="a" style="left:1310px;top:135px;width:207px;height:13px;background:#2e2e2e;border-radius:3px 3px 0 0;border-top:1px solid #424242;border-bottom:1px solid #222;"></div>
<svg class="a" style="left:1490px;top:138px;" width="8" height="7" viewBox="0 0 8 7"><path d="M4 0V7L0 3.5ZM8 0V7L4 3.5Z" fill="#cfcfcf"/></svg>
<svg class="a" style="left:1505px;top:137px;" width="8" height="8" viewBox="0 0 8 8"><path d="M1 1L7 7M7 1L1 7" stroke="#d8d8d8" stroke-width="1.5"/></svg>
<div class="a" style="left:1310px;top:148px;width:207px;height:17px;background:#2e2e2e;border-top:1px solid #404040;border-bottom:1px solid #222;"></div>
<div class="a" style="left:1310px;top:148px;width:17px;height:17px;background:#2e2e2e;border-top:1px solid #404040;border-right:1px solid #262626;border-bottom:1px solid #222;"></div>
<div class="a t" style="left:1317px;top:151px;font-size:10.5px;line-height:10.5px;color:#9a9a9a;font-weight:bold;letter-spacing:-0.3px;width:11px;overflow:hidden;">Sk</div>
<div class="a" style="left:1327px;top:148px;width:133px;height:18px;background:#484848;border-top:1px solid #555;"></div>
<svg class="a" style="left:1332px;top:151px;" width="6" height="11" viewBox="0 0 6 11"><path d="M.5 4.5L3 1.5L5.5 4.5M.5 6.5L3 9.5L5.5 6.5" fill="none" stroke="#d6d6d6" stroke-width="1.1"/></svg>
<div class="a t" style="left:1340px;top:151px;font-size:10.5px;line-height:10.5px;color:#e8e8e8;font-weight:bold;letter-spacing:-0.3px;">Datenzusammenführung</div>
<div class="a" style="left:1460px;top:148px;width:17px;height:17px;background:#2e2e2e;border-top:1px solid #404040;border-right:1px solid #262626;border-bottom:1px solid #222;"></div>
<div class="a t" style="left:1467px;top:151px;font-size:10.5px;line-height:10.5px;color:#9a9a9a;font-weight:bold;letter-spacing:-0.3px;width:11px;overflow:hidden;">Sk</div>
<svg class="a" style="left:1498px;top:153px;" width="16" height="9" viewBox="0 0 16 9"><path d="M0 2h4l-2 2.5z" fill="#d6d6d6"/><path d="M6 .5h10M6 2.5h10M6 4.5h10M6 6.5h10" stroke="#d6d6d6"/></svg>
<div class="a" style="left:1310px;top:165px;width:207px;height:22px;background:#484848;border-bottom:1px solid #2c2c2c;"></div>
<div class="a t" style="left:1314px;top:173px;font-size:10px;line-height:10px;color:#cfcfcf;letter-spacing:-0.2px;">Adressaten.csv</div>
<div class="a" style="left:1310px;top:187px;width:196px;height:180px;background:#474747;"></div>
<div class="a" style="left:1310px;top:187px;width:196px;height:20px;background:#474747;border-bottom:1px solid #2c2c2c;"></div>
<div class="a t" style="left:1314px;top:191px;font-size:13px;line-height:13px;color:#d8d8d8;font-weight:bold;font-family:'Liberation Serif',serif;">T</div>
<div class="a t" style="left:1329px;top:193px;font-size:10px;line-height:10px;color:#cfcfcf;letter-spacing:-0.15px;">Firma</div>
<div class="a t" style="left:1500px;top:193px;font-size:10px;line-height:10px;color:#cfcfcf;">1</div>
<div class="a" style="left:1310px;top:207px;width:196px;height:20px;background:#474747;border-bottom:1px solid #2c2c2c;"></div>
<div class="a t" style="left:1314px;top:211px;font-size:13px;line-height:13px;color:#d8d8d8;font-weight:bold;font-family:'Liberation Serif',serif;">T</div>
<div class="a t" style="left:1329px;top:213px;font-size:10px;line-height:10px;color:#cfcfcf;letter-spacing:-0.15px;">Ansprechpartner</div>
<div class="a t" style="left:1500px;top:213px;font-size:10px;line-height:10px;color:#cfcfcf;">1</div>
<div class="a" style="left:1310px;top:227px;width:196px;height:20px;background:#474747;border-bottom:1px solid #2c2c2c;"></div>
<div class="a t" style="left:1314px;top:231px;font-size:13px;line-height:13px;color:#d8d8d8;font-weight:bold;font-family:'Liberation Serif',serif;">T</div>
<div class="a t" style="left:1329px;top:233px;font-size:10px;line-height:10px;color:#cfcfcf;letter-spacing:-0.15px;">Adresse</div>
<div class="a t" style="left:1500px;top:233px;font-size:10px;line-height:10px;color:#cfcfcf;">1</div>
<div class="a" style="left:1310px;top:247px;width:196px;height:20px;background:#474747;border-bottom:1px solid #2c2c2c;"></div>
<div class="a t" style="left:1314px;top:251px;font-size:13px;line-height:13px;color:#d8d8d8;font-weight:bold;font-family:'Liberation Serif',serif;">T</div>
<div class="a t" style="left:1329px;top:253px;font-size:10px;line-height:10px;color:#cfcfcf;letter-spacing:-0.15px;">PLZ</div>
<div class="a t" style="left:1500px;top:253px;font-size:10px;line-height:10px;color:#cfcfcf;">1</div>
<div class="a" style="left:1310px;top:267px;width:196px;height:20px;background:#474747;border-bottom:1px solid #2c2c2c;"></div>
<div class="a t" style="left:1314px;top:271px;font-size:13px;line-height:13px;color:#d8d8d8;font-weight:bold;font-family:'Liberation Serif',serif;">T</div>
<div class="a t" style="left:1329px;top:273px;font-size:10px;line-height:10px;color:#cfcfcf;letter-spacing:-0.15px;">Ort1</div>
<div class="a t" style="left:1500px;top:273px;font-size:10px;line-height:10px;color:#cfcfcf;">1</div>
<div class="a" style="left:1310px;top:287px;width:196px;height:20px;background:#474747;border-bottom:1px solid #2c2c2c;"></div>
<div class="a t" style="left:1314px;top:291px;font-size:13px;line-height:13px;color:#d8d8d8;font-weight:bold;font-family:'Liberation Serif',serif;">T</div>
<div class="a t" style="left:1329px;top:293px;font-size:10px;line-height:10px;color:#cfcfcf;letter-spacing:-0.15px;">Ort2</div>
<div class="a t" style="left:1500px;top:293px;font-size:10px;line-height:10px;color:#cfcfcf;">1</div>
<div class="a" style="left:1506px;top:187px;width:11px;height:180px;background:#333333;"></div>
<svg class="a" style="left:1507px;top:190px;" width="9" height="6" viewBox="0 0 9 6"><path d="M0 6H9L4.5 0Z" fill="#8c8c8c"/></svg>
<svg class="a" style="left:1507px;top:358px;" width="9" height="6" viewBox="0 0 9 6"><path d="M0 0H9L4.5 6Z" fill="#8c8c8c"/></svg>
<div class="a" style="left:1310px;top:366px;width:207px;height:21px;background:#484848;border-top:1px solid #2c2c2c;"></div>
<div class="a" style="left:1314px;top:370px;width:12px;height:12px;background:#4a4a4a;border:1px solid #333;"></div>
<div class="a t" style="left:1330px;top:372px;font-size:10px;line-height:10px;color:#cfcfcf;letter-spacing:-0.2px;">Vorschau</div>
<svg class="a" style="left:1381px;top:371px;" width="10" height="10" viewBox="0 0 10 10"><path d="M1 0V10M9 0V10L3 5Z" stroke="#8a8a8a" fill="#8a8a8a"/></svg>
<svg class="a" style="left:1398px;top:371px;" width="7" height="10" viewBox="0 0 7 10"><path d="M6 0V10L0 5Z" fill="#8a8a8a"/></svg>
<div class="a" style="left:1414px;top:370px;width:22px;height:13px;background:#8e8e8e;border:1px solid #444;"></div>
<div class="a t" style="left:1417px;top:372px;font-size:10px;line-height:10px;color:#555;">1</div>
<svg class="a" style="left:1446px;top:371px;" width="7" height="10" viewBox="0 0 7 10"><path d="M0 0V10L6 5Z" fill="#8a8a8a"/></svg>
<svg class="a" style="left:1462px;top:371px;" width="10" height="10" viewBox="0 0 10 10"><path d="M0 0V10L6 5ZM8.5 0V10" stroke="#8a8a8a" fill="#8a8a8a"/></svg>
<svg class="a" style="left:1481px;top:370px;" width="18" height="12" viewBox="0 0 18 12"><path d="M0 6H8M5 3L8 6L5 9" fill="none" stroke="#e0e0e0" stroke-width="1.6"/><rect x="9" y="1" width="8" height="10" fill="#ccc"/><path d="M10 4H16M10 7H16M13 2V10" stroke="#555"/></svg>
<svg class="a" style="left:1505px;top:375px;" width="9" height="9" viewBox="0 0 9 9"><g fill="#1e1e1e"><rect x="6" y="0" width="1.5" height="1.5"/><rect x="4" y="2" width="1.5" height="1.5"/><rect x="6" y="2" width="1.5" height="1.5"/><rect x="2" y="4" width="1.5" height="1.5"/><rect x="4" y="4" width="1.5" height="1.5"/><rect x="6" y="4" width="1.5" height="1.5"/><rect x="0" y="6" width="1.5" height="1.5"/><rect x="2" y="6" width="1.5" height="1.5"/><rect x="4" y="6" width="1.5" height="1.5"/><rect x="6" y="6" width="1.5" height="1.5"/></g></svg>
<div class="a" style="left:1310px;top:386px;width:207px;height:6px;background:#484848;"></div>
<div class="a" style="left:1404px;top:387px;width:1px;height:4px;background:#1a1a1a;"></div>
<div class="a" style="left:1406px;top:387px;width:1px;height:4px;background:#1a1a1a;"></div>
<div class="a" style="left:1408px;top:387px;width:1px;height:4px;background:#1a1a1a;"></div>
<div class="a" style="left:1410px;top:387px;width:1px;height:4px;background:#1a1a1a;"></div>
<div class="a" style="left:1412px;top:387px;width:1px;height:4px;background:#1a1a1a;"></div>
<div class="a" style="left:1414px;top:387px;width:1px;height:4px;background:#1a1a1a;"></div>
<div class="a" style="left:1416px;top:387px;width:1px;height:4px;background:#1a1a1a;"></div>
<div class="a" style="left:1418px;top:387px;width:1px;height:4px;background:#1a1a1a;"></div>
<div class="a" style="left:1420px;top:387px;width:1px;height:4px;background:#1a1a1a;"></div>
<div class="a" style="left:1422px;top:387px;width:1px;height:4px;background:#1a1a1a;"></div>
<div class="a" style="left:1309px;top:395px;width:209px;height:175px;background:#484848;border:1px solid #1e1e1e;border-radius:4px 4px 0 0;"></div>
<div class="a" style="left:1310px;top:396px;width:207px;height:13px;background:#2e2e2e;border-radius:3px 3px 0 0;border-top:1px solid #424242;border-bottom:1px solid #222;"></div>
<svg class="a" style="left:1490px;top:399px;" width="8" height="7" viewBox="0 0 8 7"><path d="M4 0V7L0 3.5ZM8 0V7L4 3.5Z" fill="#cfcfcf"/></svg>
<svg class="a" style="left:1505px;top:398px;" width="8" height="8" viewBox="0 0 8 8"><path d="M1 1L7 7M7 1L1 7" stroke="#d8d8d8" stroke-width="1.5"/></svg>
<div class="a" style="left:1310px;top:408px;width:207px;height:17px;background:#2e2e2e;border-top:1px solid #404040;border-bottom:1px solid #222;"></div>
<div class="a" style="left:1310px;top:408px;width:54px;height:18px;background:#484848;border-top:1px solid #555;"></div>
<svg class="a" style="left:1315px;top:411px;" width="6" height="11" viewBox="0 0 6 11"><path d="M.5 4.5L3 1.5L5.5 4.5M.5 6.5L3 9.5L5.5 6.5" fill="none" stroke="#d6d6d6" stroke-width="1.1"/></svg>
<div class="a t" style="left:1323px;top:411px;font-size:10.5px;line-height:10.5px;color:#e8e8e8;font-weight:bold;letter-spacing:-0.3px;">Effekte</div>
<svg class="a" style="left:1498px;top:413px;" width="16" height="9" viewBox="0 0 16 9"><path d="M0 2h4l-2 2.5z" fill="#d6d6d6"/><path d="M6 .5h10M6 2.5h10M6 4.5h10M6 6.5h10" stroke="#d6d6d6"/></svg>
<div class="a" style="left:1313px;top:432px;width:98px;height:15px;background:#6a6a6a;border:1px solid #2a2a2a;"></div>
<div class="a t" style="left:1316px;top:435px;font-size:10px;line-height:10px;color:#e0e0e0;letter-spacing:-0.2px;">Normal</div>
<div class="a" style="left:1396px;top:433px;width:1px;height:13px;background:#555;"></div>
<svg class="a" style="left:1400px;top:436px;" width="8" height="6" viewBox="0 0 8 6"><path d="M0 0H8L4 5Z" fill="#e0e0e0"/></svg>
<div class="a t" style="left:1420px;top:435px;font-size:10px;line-height:10px;color:#c8c8c8;letter-spacing:-0.2px;">Deckkraft:</div>
<div class="a" style="left:1465px;top:432px;width:38px;height:15px;background:#a9a9a9;border:1px solid #2a2a2a;"></div>
<div class="a t" style="left:1468px;top:435px;font-size:10px;line-height:10px;color:#161616;letter-spacing:-0.3px;">100 %</div>
<div class="a" style="left:1502px;top:432px;width:14px;height:15px;background:#434343;border:1px solid #2a2a2a;"></div>
<svg class="a" style="left:1502px;top:432px;" width="14" height="15" viewBox="0 0 14 15"><path d="M4.5 3.5V11.5L10.0 7.5Z" fill="#d8d8d8"/></svg>
<div class="a" style="left:1310px;top:454px;width:207px;height:19px;background:#4b5669;border-bottom:1px solid #2c2c2c;"></div>
<svg class="a" style="left:1312px;top:459px;" width="9" height="7" viewBox="0 0 9 7"><path d="M0 0H9L4.5 6Z" fill="#ccc"/></svg>
<div class="a t" style="left:1325px;top:458px;font-size:10.5px;line-height:10.5px;color:#f2f2f2;font-weight:bold;letter-spacing:-0.1px;">Objekt:</div>
<div class="a t" style="left:1396px;top:458px;font-size:10.5px;line-height:10.5px;color:#f2f2f2;font-weight:bold;letter-spacing:-0.2px;">Normal 100 %</div>
<div class="a" style="left:1310px;top:473px;width:207px;height:20px;background:#474747;border-bottom:1px solid #2c2c2c;"></div>
<div class="a t" style="left:1330px;top:479px;font-size:10px;line-height:10px;color:#c8c8c8;letter-spacing:-0.1px;">Kontur:</div>
<div class="a t" style="left:1396px;top:479px;font-size:10px;line-height:10px;color:#c8c8c8;letter-spacing:-0.15px;">Normal 100 %</div>
<div class="a" style="left:1310px;top:493px;width:207px;height:20px;background:#474747;border-bottom:1px solid #2c2c2c;"></div>
<div class="a t" style="left:1330px;top:499px;font-size:10px;line-height:10px;color:#c8c8c8;letter-spacing:-0.1px;">Fläche:</div>
<div class="a t" style="left:1396px;top:499px;font-size:10px;line-height:10px;color:#c8c8c8;letter-spacing:-0.15px;">Normal 100 %</div>
<div class="a" style="left:1310px;top:513px;width:207px;height:20px;background:#474747;border-bottom:1px solid #2c2c2c;"></div>
<div class="a t" style="left:1330px;top:519px;font-size:10px;line-height:10px;color:#c8c8c8;letter-spacing:-0.1px;">Text:</div>
<div class="a t" style="left:1396px;top:519px;font-size:10px;line-height:10px;color:#c8c8c8;letter-spacing:-0.15px;">Normal 100 %</div>
<div class="a" style="left:1314px;top:536px;width:11px;height:12px;background:#4a4a4a;border:1px solid #333;"></div>
<div class="a t" style="left:1329px;top:538px;font-size:10px;line-height:10px;color:#c8c8c8;letter-spacing:-0.2px;">Füllmeth. isolieren</div>
<div class="a" style="left:1416px;top:536px;width:11px;height:12px;background:#4a4a4a;border:1px solid #333;"></div>
<div class="a t" style="left:1431px;top:538px;font-size:10px;line-height:10px;color:#c8c8c8;letter-spacing:-0.2px;">Aussparungsgr.</div>
<div class="a" style="left:1314px;top:553px;width:198px;height:1px;background:#2c2c2c;"></div>
<svg class="a" style="left:1422px;top:557px;" width="11" height="12" viewBox="0 0 11 12"><rect x=".5" y=".5" width="10" height="11" fill="#8a8a8a" stroke="#777"/><path d="M1 11L10 1" stroke="#c33" stroke-width="1.5"/></svg>
<div class="a t" style="left:1450px;top:556px;font-size:14px;line-height:14px;color:#d0d0d0;font-family:'Liberation Serif',serif;font-style:italic;">fx</div>
<svg class="a" style="left:1462px;top:566px;" width="5" height="3" viewBox="0 0 5 3"><path d="M0 0h5l-2.5 3z" fill="#ddd"/></svg>
<svg class="a" style="left:1481px;top:557px;" width="12" height="13" viewBox="0 0 12 13"><path d="M0 2.5H12M4 2.5V.5H8V2.5" fill="none" stroke="#8a8a8a"/><path d="M1.5 3.5H10.5L9.5 12.5H2.5Z" fill="none" stroke="#8a8a8a"/><path d="M4.5 5V11M6 5V11M7.5 5V11" stroke="#8a8a8a"/></svg>
<div class="a" style="left:1309px;top:572px;width:209px;height:256px;background:#484848;border:1px solid #1e1e1e;border-radius:4px 4px 0 0;"></div>
<div class="a" style="left:1310px;top:573px;width:207px;height:17px;background:#2e2e2e;border-top:1px solid #404040;border-bottom:1px solid #222;"></div>
<div class="a" style="left:1310px;top:573px;width:54px;height:18px;background:#484848;border-top:1px solid #555;"></div>
<svg class="a" style="left:1315px;top:576px;" width="6" height="11" viewBox="0 0 6 11"><path d="M.5 4.5L3 1.5L5.5 4.5M.5 6.5L3 9.5L5.5 6.5" fill="none" stroke="#d6d6d6" stroke-width="1.1"/></svg>
<div class="a t" style="left:1323px;top:576px;font-size:10.5px;line-height:10.5px;color:#e8e8e8;font-weight:bold;letter-spacing:-0.3px;">Kontur</div>
<svg class="a" style="left:1498px;top:578px;" width="16" height="9" viewBox="0 0 16 9"><path d="M0 2h4l-2 2.5z" fill="#d6d6d6"/><path d="M6 .5h10M6 2.5h10M6 4.5h10M6 6.5h10" stroke="#d6d6d6"/></svg>
<div class="a t" style="right:522px;top:602px;font-size:10px;line-height:10px;color:#c8c8c8;letter-spacing:-0.15px;text-align:right;">Stärke:</div>
<div class="a" style="left:1403px;top:599px;width:13px;height:15px;background:#434343;border:1px solid #222;"></div>
<div class="a" style="left:1404px;top:606px;width:11px;height:1px;background:#262626;"></div>
<svg class="a" style="left:1403px;top:599px;" width="13" height="15" viewBox="0 0 13 15"><path d="M3.0 6.0H10.0L6.5 2.5Z" fill="#e8e8e8"/><path d="M3.0 9.0H10.0L6.5 12.5Z" fill="#e8e8e8"/></svg>
<div class="a" style="left:1418px;top:599px;width:45px;height:15px;background:#a9a9a9;border:1px solid #2a2a2a;"></div>
<div class="a t" style="left:1421px;top:602px;font-size:10px;line-height:10px;color:#161616;letter-spacing:-0.3px;">0 Pt</div>
<div class="a" style="left:1462px;top:599px;width:13px;height:15px;background:#434343;border:1px solid #2a2a2a;"></div>
<svg class="a" style="left:1462px;top:599px;" width="13" height="15" viewBox="0 0 13 15"><path d="M2.5 5.0H10.5L6.5 10.0Z" fill="#e8e8e8"/></svg>
<div class="a t" style="right:522px;top:625px;font-size:10px;line-height:10px;color:#c8c8c8;letter-spacing:-0.15px;text-align:right;">Gehrungsgrenze:</div>
<div class="a" style="left:1403px;top:622px;width:13px;height:15px;background:#434343;border:1px solid #222;"></div>
<div class="a" style="left:1404px;top:629px;width:11px;height:1px;background:#262626;"></div>
<svg class="a" style="left:1403px;top:622px;" width="13" height="15" viewBox="0 0 13 15"><path d="M3.0 6.0H10.0L6.5 2.5Z" fill="#e8e8e8"/><path d="M3.0 9.0H10.0L6.5 12.5Z" fill="#e8e8e8"/></svg>
<div class="a" style="left:1418px;top:622px;width:40px;height:15px;background:#a9a9a9;border:1px solid #2a2a2a;"></div>
<div class="a t" style="left:1421px;top:625px;font-size:10px;line-height:10px;color:#161616;letter-spacing:-0.3px;">4</div>
<div class="a t" style="left:1463px;top:625px;font-size:10px;line-height:10px;color:#c8c8c8;">x</div>
<div class="a t" style="right:522px;top:646px;font-size:10px;line-height:10px;color:#c8c8c8;letter-spacing:-0.15px;text-align:right;">Abschluss:</div>
<div class="a" style="left:1404px;top:643px;width:16px;height:17px;background:#333333;"></div>
<svg class="a" style="left:1406px;top:645px;" width="13" height="13" viewBox="0 0 13 13"><rect x="3" y="1" width="9" height="11" fill="#ccc"/><path d="M0 6.5H8" stroke="#222" stroke-width="1.5"/><rect x="6" y="5" width="3" height="3" fill="#222"/></svg>
<svg class="a" style="left:1422px;top:645px;" width="13" height="13" viewBox="0 0 13 13"><path d="M6 1H13V12H6A5.5 5.5 0 0 1 6 1Z" fill="#ccc"/><path d="M4 6.5H9" stroke="#222" stroke-width="1.5"/><rect x="7" y="5" width="3" height="3" fill="#222"/></svg>
<svg class="a" style="left:1439px;top:645px;" width="13" height="13" viewBox="0 0 13 13"><rect x="0" y="1" width="13" height="11" fill="#ccc"/><path d="M1 6.5H9" stroke="#222" stroke-width="1.5"/><rect x="7" y="5" width="3" height="3" fill="#222"/></svg>
<div class="a t" style="right:522px;top:670px;font-size:10px;line-height:10px;color:#c8c8c8;letter-spacing:-0.15px;text-align:right;">Ecke:</div>
<div class="a" style="left:1404px;top:667px;width:16px;height:17px;background:#333333;"></div>
<svg class="a" style="left:1406px;top:669px;" width="13" height="13" viewBox="0 0 13 13"><path d="M0 0H13V6H6V13H0Z" fill="#ccc"/><path d="M5 13V5H13" fill="none" stroke="#222" stroke-width="1.2"/><rect x="5" y="5" width="3" height="3" fill="#222"/></svg>
<svg class="a" style="left:1422px;top:669px;" width="13" height="13" viewBox="0 0 13 13"><path d="M5 0H13V6H6V13H0V5A5 5 0 0 1 5 0Z" fill="#ccc"/><path d="M5 13V5H13" fill="none" stroke="#222" stroke-width="1.2"/></svg>
<svg class="a" style="left:1439px;top:669px;" width="13" height="13" viewBox="0 0 13 13"><path d="M4 0H13V6H6V13H0V4Z" fill="#ccc"/><path d="M5 13V5H13" fill="none" stroke="#222" stroke-width="1.2"/></svg>
<div class="a" style="left:1314px;top:690px;width:198px;height:1px;background:#2c2c2c;"></div>
<div class="a" style="left:1314px;top:691px;width:198px;height:1px;background:#575757;"></div>
<div class="a t" style="right:522px;top:700px;font-size:10px;line-height:10px;color:#c8c8c8;letter-spacing:-0.15px;text-align:right;">Kontur ausrichten:</div>
<div class="a" style="left:1404px;top:697px;width:16px;height:17px;background:#333333;"></div>
<svg class="a" style="left:1406px;top:699px;" width="13" height="13" viewBox="0 0 13 13"><path d="M1.5 0V11.5H13M4 0V9H13" fill="none" stroke="#999"/></svg>
<svg class="a" style="left:1423px;top:699px;" width="13" height="13" viewBox="0 0 13 13"><path d="M2.5 0V10.5H13" fill="none" stroke="#999" stroke-width="2"/></svg>
<svg class="a" style="left:1440px;top:699px;" width="13" height="13" viewBox="0 0 13 13"><path d="M4 0V9H13" fill="none" stroke="#777" stroke-width="3"/></svg>
<div class="a" style="left:1314px;top:718px;width:198px;height:1px;background:#2c2c2c;"></div>
<div class="a" style="left:1314px;top:719px;width:198px;height:1px;background:#575757;"></div>
<div class="a t" style="right:522px;top:729px;font-size:10px;line-height:10px;color:#c8c8c8;letter-spacing:-0.15px;text-align:right;">Typ:</div>
<div class="a" style="left:1404px;top:726px;width:95px;height:15px;background:#a9a9a9;border:1px solid #2a2a2a;"></div>
<div class="a" style="left:1406px;top:728px;width:91px;height:11px;background:#000;"></div>
<div class="a" style="left:1498px;top:726px;width:13px;height:15px;background:#434343;border:1px solid #2a2a2a;"></div>
<svg class="a" style="left:1498px;top:726px;" width="13" height="15" viewBox="0 0 13 15"><path d="M2.5 5.0H10.5L6.5 10.0Z" fill="#e8e8e8"/></svg>
<div class="a t" style="right:522px;top:749px;font-size:10px;line-height:10px;color:#c8c8c8;letter-spacing:-0.15px;text-align:right;">Anfang:</div>
<div class="a" style="left:1404px;top:746px;width:95px;height:15px;background:#a9a9a9;border:1px solid #2a2a2a;"></div>
<div class="a t" style="left:1407px;top:749px;font-size:10px;line-height:10px;color:#161616;letter-spacing:-0.3px;">Ohne</div>
<div class="a" style="left:1498px;top:746px;width:13px;height:15px;background:#434343;border:1px solid #2a2a2a;"></div>
<svg class="a" style="left:1498px;top:746px;" width="13" height="15" viewBox="0 0 13 15"><path d="M2.5 5.0H10.5L6.5 10.0Z" fill="#e8e8e8"/></svg>
<div class="a t" style="right:522px;top:769px;font-size:10px;line-height:10px;color:#c8c8c8;letter-spacing:-0.15px;text-align:right;">Ende:</div>
<div class="a" style="left:1404px;top:766px;width:95px;height:15px;background:#a9a9a9;border:1px solid #2a2a2a;"></div>
<div class="a t" style="left:1407px;top:769px;font-size:10px;line-height:10px;color:#161616;letter-spacing:-0.3px;">Ohne</div>
<div class="a" style="left:1498px;top:766px;width:13px;height:15px;background:#434343;border:1px solid #2a2a2a;"></div>
<svg class="a" style="left:1498px;top:766px;" width="13" height="15" viewBox="0 0 13 15"><path d="M2.5 5.0H10.5L6.5 10.0Z" fill="#e8e8e8"/></svg>
<div class="a t" style="right:522px;top:789px;font-size:10px;line-height:10px;color:#c8c8c8;letter-spacing:-0.15px;text-align:right;">Farbe für Lücke:</div>
<div class="a" style="left:1404px;top:786px;width:95px;height:15px;background:#8e8e8e;border:1px solid #2a2a2a;"></div>
<div class="a" style="left:1406px;top:788px;width:12px;height:11px;background:#fff;border:1px solid #444;"></div>
<svg class="a" style="left:1407px;top:789px;" width="10" height="9" viewBox="0 0 10 9"><path d="M0 9L10 0" stroke="#e00" stroke-width="2"/></svg>
<div class="a t" style="left:1421px;top:789px;font-size:10px;line-height:10px;color:#555;letter-spacing:-0.1px;">[Ohne]</div>
<div class="a" style="left:1498px;top:786px;width:13px;height:15px;background:#5a5a5a;border:1px solid #2a2a2a;"></div>
<svg class="a" style="left:1498px;top:786px;" width="13" height="15" viewBox="0 0 13 15"><path d="M2.5 5.0H10.5L6.5 10.0Z" fill="#777"/></svg>
<div class="a t" style="right:522px;top:809px;font-size:10px;line-height:10px;color:#c8c8c8;letter-spacing:-0.15px;text-align:right;">Farbton für Lücke:</div>
<div class="a" style="left:1404px;top:806px;width:37px;height:15px;background:#6a6a6a;border:1px solid #2a2a2a;"></div>
<div class="a t" style="left:1407px;top:809px;font-size:10px;line-height:10px;color:#a0a0a0;letter-spacing:-0.3px;">100 %</div>
<div class="a" style="left:1440px;top:806px;width:11px;height:15px;background:#555;border:1px solid #2a2a2a;"></div>
<svg class="a" style="left:1440px;top:806px;" width="11" height="15" viewBox="0 0 11 15"><path d="M3.0 3.5V11.5L8.5 7.5Z" fill="#888"/></svg>
<div class="a" style="left:1545px;top:88px;width:209px;height:488px;background:#484848;border:1px solid #2c2c2c;"></div>
<div class="a" style="left:1546px;top:89px;width:207px;height:19px;background:#363636;"></div>
<div class="a" style="left:1546px;top:90px;width:207px;height:18px;background:#2e2e2e;border-top:1px solid #404040;border-bottom:1px solid #222;"></div>
<div class="a" style="left:1546px;top:90px;width:49px;height:19px;background:#484848;border-top:1px solid #555;"></div>
<svg class="a" style="left:1551px;top:93px;" width="6" height="11" viewBox="0 0 6 11"><path d="M.5 4.5L3 1.5L5.5 4.5M.5 6.5L3 9.5L5.5 6.5" fill="none" stroke="#d6d6d6" stroke-width="1.1"/></svg>
<div class="a t" style="left:1559px;top:93px;font-size:10.5px;line-height:10.5px;color:#e8e8e8;font-weight:bold;letter-spacing:-0.3px;">Seiten</div>
<div class="a" style="left:1595px;top:90px;width:41px;height:18px;background:#2e2e2e;border-top:1px solid #404040;border-right:1px solid #262626;border-bottom:1px solid #222;"></div>
<div class="a t" style="left:1602px;top:93px;font-size:10.5px;line-height:10.5px;color:#9a9a9a;font-weight:bold;letter-spacing:-0.3px;width:35px;overflow:hidden;">Ebenen</div>
<div class="a" style="left:1636px;top:90px;width:53px;height:18px;background:#2e2e2e;border-top:1px solid #404040;border-right:1px solid #262626;border-bottom:1px solid #222;"></div>
<div class="a t" style="left:1643px;top:93px;font-size:10.5px;line-height:10.5px;color:#9a9a9a;font-weight:bold;letter-spacing:-0.3px;width:47px;overflow:hidden;">Verknüpfungen</div>
<svg class="a" style="left:1713px;top:96px;" width="9" height="7" viewBox="0 0 9 7"><path d="M0 0L4 3.5L0 7ZM5 0L9 3.5L5 7Z" fill="#cfcfcf"/></svg>
<div class="a" style="left:1730px;top:93px;width:1px;height:12px;background:#555;"></div>
<svg class="a" style="left:1736px;top:95px;" width="16" height="9" viewBox="0 0 16 9"><path d="M0 2h4l-2 2.5z" fill="#d6d6d6"/><path d="M6 .5h10M6 2.5h10M6 4.5h10M6 6.5h10" stroke="#d6d6d6"/></svg>
<div class="a" style="left:1546px;top:108px;width:207px;height:102px;background:#484848;"></div>
<div class="a t" style="left:1549px;top:121px;font-size:10px;line-height:10px;color:#c8c8c8;letter-spacing:-0.2px;">[Ohne]</div>
<div class="a" style="left:1714px;top:112px;width:18px;height:23px;background:#fff;"></div>
<div class="a t" style="left:1549px;top:150px;font-size:10px;line-height:10px;color:#c8c8c8;letter-spacing:-0.4px;">A-Musterseite</div>
<div class="a" style="left:1714px;top:141px;width:18px;height:23px;background:#fff;"></div>
<div class="a" style="left:1740px;top:108px;width:11px;height:102px;background:#333333;"></div>
<svg class="a" style="left:1741px;top:111px;" width="9" height="6" viewBox="0 0 9 6"><path d="M0 6H9L4.5 0Z" fill="#8c8c8c"/></svg>
<svg class="a" style="left:1741px;top:201px;" width="9" height="6" viewBox="0 0 9 6"><path d="M0 0H9L4.5 6Z" fill="#8c8c8c"/></svg>
<div class="a" style="left:1546px;top:210px;width:207px;height:4px;background:#444;border-top:1px solid #2c2c2c;border-bottom:1px solid #5a5a5a;"></div>
<div class="a" style="left:1546px;top:214px;width:207px;height:21px;background:#4f4f4f;border-bottom:1px solid #2c2c2c;"></div>
<div class="a" style="left:1551px;top:217px;width:3px;height:1px;background:#1e1e1e;"></div>
<div class="a" style="left:1551px;top:219px;width:3px;height:1px;background:#1e1e1e;"></div>
<div class="a" style="left:1551px;top:221px;width:3px;height:1px;background:#1e1e1e;"></div>
<div class="a" style="left:1551px;top:223px;width:3px;height:1px;background:#1e1e1e;"></div>
<div class="a" style="left:1551px;top:225px;width:3px;height:1px;background:#1e1e1e;"></div>
<div class="a" style="left:1551px;top:227px;width:3px;height:1px;background:#1e1e1e;"></div>
<div class="a t" style="left:1572px;top:220px;font-size:11px;line-height:11px;color:#d6d6d6;font-weight:bold;letter-spacing:-0.2px;">A4 V</div>
<svg class="a" style="left:1607px;top:222px;" width="7" height="5" viewBox="0 0 7 5"><path d="M0 0H7L3.5 4Z" fill="#d6d6d6"/></svg>
<div class="a" style="left:1616px;top:214px;width:1px;height:21px;background:#333333;"></div>
<div class="a" style="left:1546px;top:235px;width:207px;height:313px;background:#484848;"></div>
<div class="a" style="left:1740px;top:235px;width:11px;height:313px;background:#333333;"></div>
<svg class="a" style="left:1741px;top:238px;" width="9" height="6" viewBox="0 0 9 6"><path d="M0 6H9L4.5 0Z" fill="#8c8c8c"/></svg>
<svg class="a" style="left:1741px;top:539px;" width="9" height="6" viewBox="0 0 9 6"><path d="M0 0H9L4.5 6Z" fill="#8c8c8c"/></svg>
<svg class="a" style="left:1576px;top:238px;" width="11" height="5" viewBox="0 0 11 5"><path d="M0 0H11L5.5 5Z" fill="#8a8a8a"/></svg>
<div class="a" style="left:1569px;top:244px;width:26px;height:36px;background:#c6c9cd;border:1px solid #9a9a9a;"></div>
<div class="a" style="left:1570px;top:256px;width:24px;height:1px;background:#a0a0a0;"></div>
<div class="a" style="left:1570px;top:277px;width:24px;height:2px;background:#e4e6e8;"></div>
<div class="a" style="left:1576px;top:245px;width:9px;height:10px;background:#fff;"></div>
<div class="a t" style="left:1577px;top:246px;font-size:10px;line-height:10px;color:#000;font-weight:bold;">A</div>
<div class="a" style="left:1572px;top:283px;width:15px;height:16px;background:#3e4a5c;"></div>
<div class="a t" style="left:1576px;top:288px;font-size:10px;line-height:10px;color:#e8e8e8;font-weight:bold;">1</div>
<div class="a" style="left:1546px;top:548px;width:207px;height:21px;background:#484848;border-top:1px solid #2c2c2c;"></div>
<div class="a t" style="left:1549px;top:553px;font-size:10px;line-height:10px;color:#c8c8c8;letter-spacing:-0.3px;width:104px;overflow:hidden;">1 Seite auf 1 Druckboge</div>
<svg class="a" style="left:1653px;top:551px;" width="17" height="15" viewBox="0 0 17 15"><path d="M3 0H9L11 2V11H3Z" fill="#d0d0d0"/><path d="M0 4H6L8 6V14H0Z" fill="#e8e8e8" stroke="#555" stroke-width=".6"/><path d="M13 12h4l-2 2z" fill="#ddd"/></svg>
<svg class="a" style="left:1685px;top:551px;" width="12" height="12" viewBox="0 0 12 12"><path d="M0 0H12V12H5L0 7Z" fill="#d0d0d0"/><path d="M1 8L4 11V8Z" fill="#d0d0d0"/></svg>
<svg class="a" style="left:1714px;top:550px;" width="12" height="13" viewBox="0 0 12 13"><path d="M0 2.5H12M4 2.5V.5H8V2.5" fill="none" stroke="#8a8a8a"/><path d="M1.5 3.5H10.5L9.5 12.5H2.5Z" fill="none" stroke="#8a8a8a"/><path d="M4.5 5V11M6 5V11M7.5 5V11" stroke="#8a8a8a"/></svg>
<svg class="a" style="left:1742px;top:557px;" width="9" height="9" viewBox="0 0 9 9"><g fill="#1e1e1e"><rect x="6" y="0" width="1.5" height="1.5"/><rect x="4" y="2" width="1.5" height="1.5"/><rect x="6" y="2" width="1.5" height="1.5"/><rect x="2" y="4" width="1.5" height="1.5"/><rect x="4" y="4" width="1.5" height="1.5"/><rect x="6" y="4" width="1.5" height="1.5"/><rect x="0" y="6" width="1.5" height="1.5"/><rect x="2" y="6" width="1.5" height="1.5"/><rect x="4" y="6" width="1.5" height="1.5"/><rect x="6" y="6" width="1.5" height="1.5"/></g></svg>
<div class="a" style="left:1546px;top:568px;width:207px;height:7px;background:#484848;"></div>
<div class="a" style="left:1640px;top:569px;width:1px;height:4px;background:#1a1a1a;"></div>
<div class="a" style="left:1642px;top:569px;width:1px;height:4px;background:#1a1a1a;"></div>
<div class="a" style="left:1644px;top:569px;width:1px;height:4px;background:#1a1a1a;"></div>
<div class="a" style="left:1646px;top:569px;width:1px;height:4px;background:#1a1a1a;"></div>
<div class="a" style="left:1648px;top:569px;width:1px;height:4px;background:#1a1a1a;"></div>
<div class="a" style="left:1650px;top:569px;width:1px;height:4px;background:#1a1a1a;"></div>
<div class="a" style="left:1652px;top:569px;width:1px;height:4px;background:#1a1a1a;"></div>
<div class="a" style="left:1654px;top:569px;width:1px;height:4px;background:#1a1a1a;"></div>
<div class="a" style="left:1656px;top:569px;width:1px;height:4px;background:#1a1a1a;"></div>
<div class="a" style="left:1658px;top:569px;width:1px;height:4px;background:#1a1a1a;"></div>
<div class="a" style="left:1755px;top:78px;width:165px;height:12px;background:#2e2e2e;border-top:1px solid #404040;"></div>
<svg class="a" style="left:1908px;top:81px;" width="8" height="6" viewBox="0 0 8 6"><path d="M4 0V6L0 3ZM8 0V6L4 3Z" fill="#cfcfcf"/></svg>
<div class="a" style="left:1755px;top:90px;width:165px;height:96px;background:#474747;"></div>
<div class="a" style="left:1827px;top:93px;width:1px;height:4px;background:#1a1a1a;"></div>
<div class="a" style="left:1829px;top:93px;width:1px;height:4px;background:#1a1a1a;"></div>
<div class="a" style="left:1831px;top:93px;width:1px;height:4px;background:#1a1a1a;"></div>
<div class="a" style="left:1833px;top:93px;width:1px;height:4px;background:#1a1a1a;"></div>
<div class="a" style="left:1835px;top:93px;width:1px;height:4px;background:#1a1a1a;"></div>
<div class="a" style="left:1837px;top:93px;width:1px;height:4px;background:#1a1a1a;"></div>
<div class="a" style="left:1839px;top:93px;width:1px;height:4px;background:#1a1a1a;"></div>
<div class="a" style="left:1841px;top:93px;width:1px;height:4px;background:#1a1a1a;"></div>
<div class="a" style="left:1843px;top:93px;width:1px;height:4px;background:#1a1a1a;"></div>
<div class="a" style="left:1845px;top:93px;width:1px;height:4px;background:#1a1a1a;"></div>
<div class="a" style="left:1759px;top:101px;width:156px;height:24px;background:#3a3a3a;border-radius:3px;"></div>
<svg class="a" style="left:1766px;top:104px;" width="18" height="18" viewBox="0 0 18 18"><path d="M0 3H2V1H7V16H0Z" fill="#d0d0d0"/><path d="M10 1H15V3H17V16H10Z" fill="#d0d0d0"/><path d="M8.5 0V18" stroke="#e8e8e8"/></svg>
<div class="a t" style="left:1792px;top:109px;font-size:10.5px;line-height:10.5px;color:#e8e8e8;font-weight:bold;letter-spacing:-0.3px;">Seiten</div>
<svg class="a" style="left:1765px;top:133px;" width="18" height="18" viewBox="0 0 18 18"><path d="M9 0L17 5L9 10L1 5Z" fill="#d0d0d0"/><path d="M3 9L9 13L15 9L17 10.5L9 16L1 10.5Z" fill="#d0d0d0"/></svg>
<div class="a t" style="left:1792px;top:137px;font-size:10.5px;line-height:10.5px;color:#e8e8e8;font-weight:bold;letter-spacing:-0.3px;">Ebenen</div>
<svg class="a" style="left:1765px;top:162px;" width="18" height="14" viewBox="0 0 18 14"><path d="M6.5 2H4A3 3 0 0 0 1 5V9A3 3 0 0 0 4 12H6.5M11.5 2H14A3 3 0 0 1 17 5V9A3 3 0 0 1 14 12H11.5M5.5 7H12.5" fill="none" stroke="#d0d0d0" stroke-width="2.2"/></svg>
<div class="a t" style="left:1792px;top:165px;font-size:10.5px;line-height:10.5px;color:#e8e8e8;font-weight:bold;letter-spacing:-0.3px;">Verknüpfungen</div>
<div class="a" style="left:1755px;top:186px;width:165px;height:2px;background:#2e2e2e;"></div>
<div class="a" style="left:1755px;top:188px;width:165px;height:39px;background:#474747;"></div>
<div class="a" style="left:1827px;top:191px;width:1px;height:4px;background:#1a1a1a;"></div>
<div class="a" style="left:1829px;top:191px;width:1px;height:4px;background:#1a1a1a;"></div>
<div class="a" style="left:1831px;top:191px;width:1px;height:4px;background:#1a1a1a;"></div>
<div class="a" style="left:1833px;top:191px;width:1px;height:4px;background:#1a1a1a;"></div>
<div class="a" style="left:1835px;top:191px;width:1px;height:4px;background:#1a1a1a;"></div>
<div class="a" style="left:1837px;top:191px;width:1px;height:4px;background:#1a1a1a;"></div>
<div class="a" style="left:1839px;top:191px;width:1px;height:4px;background:#1a1a1a;"></div>
<div class="a" style="left:1841px;top:191px;width:1px;height:4px;background:#1a1a1a;"></div>
<div class="a" style="left:1843px;top:191px;width:1px;height:4px;background:#1a1a1a;"></div>
<div class="a" style="left:1845px;top:191px;width:1px;height:4px;background:#1a1a1a;"></div>
<svg class="a" style="left:1764px;top:202px;" width="21" height="16" viewBox="0 0 21 16"><path d="M10 1C4 1 0 4.5 0 8.5C0 12 3 15 8 15C10 15 10 13 9 12C8 11 9 10 11 10H15C18 10 20 8 20 6C20 3 16 1 10 1Z" fill="#cfcfcf"/><circle cx="5" cy="8" r="1.5" fill="#555"/><circle cx="8" cy="5" r="1.5" fill="#555"/><circle cx="12.5" cy="4.5" r="1.5" fill="#555"/><circle cx="16" cy="6.5" r="1.5" fill="#555"/><circle cx="5.5" cy="12" r="1.3" fill="#555"/></svg>
<div class="a t" style="left:1792px;top:206px;font-size:10.5px;line-height:10.5px;color:#e8e8e8;font-weight:bold;letter-spacing:-0.3px;">Farbe</div>
<div class="a" style="left:1755px;top:226px;width:165px;height:2px;background:#2e2e2e;"></div>
<div class="a" style="left:34px;top:1024px;width:444px;height:15px;background:#3d3d3d;border-top:1px solid #222;"></div>
<div class="a" style="left:478px;top:1024px;width:79px;height:15px;background:#333333;border-top:1px solid #222;"></div>
<div class="a" style="left:1635px;top:1024px;width:80px;height:15px;background:#333333;border-top:1px solid #222;"></div>
<div class="a" style="left:51px;top:1027px;width:20px;height:11px;background:#9a9a9a;border-radius:2px;"></div>
<svg class="a" style="left:53px;top:1028px;" width="16" height="9" viewBox="0 0 16 9"><circle cx="4.5" cy="4.5" r="2.5" fill="none" stroke="#444" stroke-width="2"/><path d="M4.5 0V9M0 4.5H9M1.3 1.3L7.7 7.7M7.7 1.3L1.3 7.7" stroke="#444" stroke-width="1.2"/><path d="M13 0V5.5M13 7V9" stroke="#444" stroke-width="2"/></svg>
<svg class="a" style="left:78px;top:1028px;" width="8" height="10" viewBox="0 0 8 10"><path d="M.5 0V10" stroke="#777"/><path d="M7 0V10L2 5Z" fill="#777"/></svg>
<svg class="a" style="left:93px;top:1028px;" width="6" height="10" viewBox="0 0 6 10"><path d="M6 0V10L0 5Z" fill="#777"/></svg>
<div class="a t" style="left:109px;top:1028px;font-size:10px;line-height:10px;color:#d8d8d8;">1</div>
<svg class="a" style="left:190px;top:1030px;" width="8" height="6" viewBox="0 0 8 6"><path d="M0 0H8L4 5Z" fill="#d8d8d8"/></svg>
<svg class="a" style="left:209px;top:1028px;" width="6" height="10" viewBox="0 0 6 10"><path d="M0 0V10L6 5Z" fill="#777"/></svg>
<svg class="a" style="left:222px;top:1028px;" width="8" height="10" viewBox="0 0 8 10"><path d="M0 0V10L5 5Z" fill="#777"/><path d="M7.5 0V10" stroke="#777"/></svg>
<svg class="a" style="left:237px;top:1026px;" width="17" height="14" viewBox="0 0 17 14"><circle cx="7" cy="7" r="6" fill="none" stroke="#ccc" stroke-width="1.4"/><path d="M4 3.5H8L10 5.5V10.5H4Z" fill="none" stroke="#ddd" stroke-width="1.2"/><path d="M13 12h4l-2 2z" fill="#ddd"/></svg>
<div class="a t" style="left:263px;top:1028px;font-size:10px;line-height:10px;color:#cfcfcf;letter-spacing:-0.3px;">[Grundprofil] (Arbeits...</div>
<svg class="a" style="left:369px;top:1030px;" width="8" height="6" viewBox="0 0 8 6"><path d="M0 0H8L4 5Z" fill="#d8d8d8"/></svg>
<div class="a" style="left:383px;top:1028px;width:10px;height:10px;border-radius:50%;background:#5bbf2e;"></div>
<div class="a t" style="left:397px;top:1028px;font-size:10px;line-height:10px;color:#cfcfcf;letter-spacing:-0.5px;">Ohne Fehler</div>
<svg class="a" style="left:469px;top:1032px;" width="6" height="4" viewBox="0 0 6 4"><path d="M0 0H6L3 3.5Z" fill="#d8d8d8"/></svg>
<svg class="a" style="left:484px;top:1026px;" width="6" height="10" viewBox="0 0 6 10"><path d="M6 0V10L0 5Z" fill="#e0e0e0"/></svg>
<svg class="a" style="left:1703px;top:1027px;" width="6" height="10" viewBox="0 0 6 10"><path d="M0 0V10L6 5Z" fill="#e0e0e0"/></svg>
<div class="a" style="left:1715px;top:1024px;width:22px;height:15px;background:#333333;border-top:1px solid #222;"></div>
<svg class="a" style="left:1720px;top:1026px;" width="15" height="11" viewBox="0 0 15 11"><rect x=".5" y=".5" width="14" height="10" fill="none" stroke="#e0e0e0"/><path d="M7.5 0V11" stroke="#e0e0e0"/></svg>
<svg class="a" style="left:1742px;top:1029px;" width="9" height="9" viewBox="0 0 9 9"><g fill="#1e1e1e"><rect x="6" y="0" width="1.5" height="1.5"/><rect x="4" y="2" width="1.5" height="1.5"/><rect x="6" y="2" width="1.5" height="1.5"/><rect x="2" y="4" width="1.5" height="1.5"/><rect x="4" y="4" width="1.5" height="1.5"/><rect x="6" y="4" width="1.5" height="1.5"/><rect x="0" y="6" width="1.5" height="1.5"/><rect x="2" y="6" width="1.5" height="1.5"/><rect x="4" y="6" width="1.5" height="1.5"/><rect x="6" y="6" width="1.5" height="1.5"/></g></svg>
</body></html>
